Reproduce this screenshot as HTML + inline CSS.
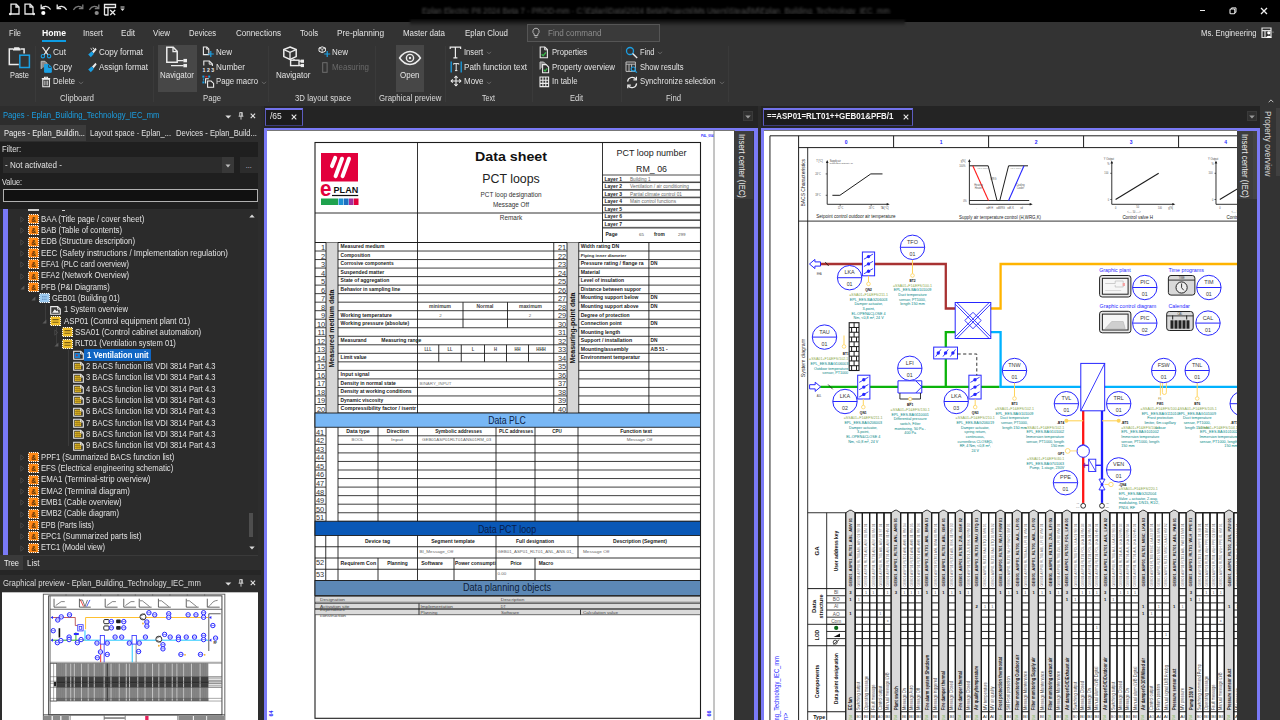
<!DOCTYPE html>
<html><head><meta charset="utf-8"><title>Eplan</title>
<style>
html,body{margin:0;padding:0;background:#2b2b2b;}
body{width:1280px;height:720px;overflow:hidden;position:relative;font-family:"Liberation Sans",sans-serif;}
#app{position:absolute;left:0;top:0;width:1280px;height:720px;overflow:hidden;}
.r{position:absolute;display:block;}
.t{position:absolute;white-space:nowrap;transform-origin:0 50%;}
svg text{font-family:"Liberation Sans",sans-serif;}
</style></head><body><div id="app">
<!-- panes -->
<div class="r" style="left:261px;top:106px;width:1019px;height:614px;background:#2b2b2b;"></div>
<div class="r" style="left:264px;top:106px;width:494px;height:22.5px;background:#242424;"></div>
<div class="r" style="left:760.5px;top:106px;width:499px;height:22.5px;background:#242424;"></div>
<div class="r" style="left:265px;top:108px;width:37.5px;height:18px;background:#1c1c1c;border-top:2px solid #7272ea;border-left:1.3px solid #5c5cc0;border-right:1.3px solid #5c5cc0;border-bottom:1px solid #3c3c78;box-sizing:border-box;"></div>
<span class="t" style="left:270.00px;top:111.11px;font-size:8.3px;line-height:10.38px;color:#e8e8e8;transform:scaleX(1.0228);">/65</span>
<svg class="r" style="left:291px;top:113.8px;" width="6" height="6" viewBox="0 0 6 6"><path d="M0.7 0.7l4.6 4.6M5.3 0.7l-4.6 4.6" stroke="#e8e8e8" stroke-width="1.1"/></svg>
<div class="r" style="left:743px;top:111px;width:10.3px;height:9.6px;background:#303030;border:1px solid #3a3a3a;box-sizing:border-box;"></div>
<svg class="r" style="left:745px;top:115px;" width="6" height="4" viewBox="0 0 6 4"><path d="M0.2 0.4h5.6L3 3.6z" fill="#9a9a9a"/></svg>
<div class="r" style="left:1246.5px;top:111px;width:10.3px;height:9.6px;background:#303030;border:1px solid #3a3a3a;box-sizing:border-box;"></div>
<svg class="r" style="left:1248.5px;top:115px;" width="6" height="4" viewBox="0 0 6 4"><path d="M0.2 0.4h5.6L3 3.6z" fill="#9a9a9a"/></svg>
<div class="r" style="left:762.5px;top:108px;width:150px;height:18px;background:#1c1c1c;border-top:2px solid #7272ea;border-left:1.3px solid #5c5cc0;border-right:1.3px solid #5c5cc0;border-bottom:1px solid #3c3c78;box-sizing:border-box;"></div>
<span class="t" style="left:767.00px;top:111.31px;font-size:8.3px;line-height:10.38px;color:#f4f4f4;font-weight:bold;transform:scaleX(0.9582);">==ASP01=RLT01++GEB01&amp;PFB/1</span>
<svg class="r" style="left:902.6px;top:113.8px;" width="6" height="6" viewBox="0 0 6 6"><path d="M0.7 0.7l4.6 4.6M5.3 0.7l-4.6 4.6" stroke="#e8e8e8" stroke-width="1.1"/></svg>
<div class="r" style="left:264px;top:128px;width:494px;height:592px;background:#7a7af6;"></div>
<div class="r" style="left:267px;top:130.5px;width:466.8px;height:590px;background:#fff;"></div>
<div class="r" style="left:267px;top:130px;width:467.5px;height:1px;background:#777;"></div>
<div class="r" style="left:733.8px;top:130.5px;width:20.7px;height:590px;background:#333;"></div>
<div class="r" style="left:733.8px;top:130.5px;width:19.4px;height:68.3px;background:#3d3d3d;"></div>
<div class="t" style="left:742.3px;top:133.5px;font-size:8.3px;line-height:10px;color:#eaeaea;transform-origin:0 0;transform:rotate(90deg) translate(0,-5px) scaleX(0.9439);">Insert center (IEC)</div>
<div class="r" style="left:760.5px;top:128px;width:499px;height:592px;background:#7a7af6;"></div>
<div class="r" style="left:763.8px;top:130.5px;width:473.2px;height:590px;background:#fff;"></div>
<div class="r" style="left:763.8px;top:130px;width:473.2px;height:1px;background:#777;"></div>
<div class="r" style="left:1237px;top:130.5px;width:20px;height:590px;background:#333;"></div>
<div class="r" style="left:1237px;top:130.5px;width:16px;height:68.3px;background:#3d3d3d;"></div>
<div class="r" style="left:1253px;top:130.5px;width:4px;height:68.3px;background:#434343;"></div>
<div class="t" style="left:1244.7px;top:133.5px;font-size:8.3px;line-height:10px;color:#eaeaea;transform-origin:0 0;transform:rotate(90deg) translate(0,-5px) scaleX(0.9439);">Insert center (IEC)</div>
<div class="r" style="left:1259.5px;top:106px;width:20.5px;height:614px;background:#333;"></div>
<div class="r" style="left:1275.8px;top:108px;width:4.2px;height:68px;background:#404040;"></div>
<div class="t" style="left:1267.6px;top:111px;font-size:8.3px;line-height:10px;color:#d4d4d4;transform-origin:0 0;transform:rotate(90deg) translate(0,-5px) scaleX(0.9861);">Property overview</div>
<!-- sheet -->
<svg class="r" style="left:267px;top:130.5px" width="467.5" height="589.5" viewBox="267 130.5 467.5 589.5" fill="none">
<path d="M714.00 130.50L714.00 720.00" stroke="#8a8a8a" stroke-width="1" />
<text x="701.00" y="136.61" font-size="2.8" fill="#2a2aff" font-weight="bold" textLength="12.50" lengthAdjust="spacingAndGlyphs">P4L_004</text>
<text transform="translate(271.50 716.00) rotate(-90)" x="0" y="1.98" font-size="5.5" fill="#2a2aff" text-anchor="start" font-weight="bold">64</text>
<text transform="translate(709.50 716.00) rotate(-90)" x="0" y="1.98" font-size="5.5" fill="#2a2aff" text-anchor="start" font-weight="bold">66</text>
<rect x="315.00" y="142.00" width="385.50" height="575.80" fill="none" stroke="#1c1c1c" stroke-width="1.1" />
<path d="M417.50 142.00L417.50 242.00" stroke="#1c1c1c" stroke-width="0.9" />
<path d="M602.50 142.00L602.50 242.00" stroke="#1c1c1c" stroke-width="0.9" />
<path d="M315.00 212.50L602.50 212.50" stroke="#1c1c1c" stroke-width="0.9" />
<path d="M315.00 242.00L700.50 242.00" stroke="#1c1c1c" stroke-width="1.1" />
<rect x="321.00" y="152.50" width="37.00" height="28.50" fill="#e2003c" />
<path d="M332 165.6l3.2-8.2" stroke="#fff" stroke-width="4" stroke-linecap="round"/>
<path d="M335.6 175.6l6.4-17.4" stroke="#fff" stroke-width="4" stroke-linecap="round"/>
<path d="M342.6 175.6l6.4-17.4" stroke="#fff" stroke-width="4" stroke-linecap="round"/>
<text x="320.00" y="195.94" font-size="21.5" fill="#e2003c" font-weight="bold" textLength="11.50" lengthAdjust="spacingAndGlyphs">e</text>
<text x="333.60" y="192.61" font-size="9.2" fill="#111" font-weight="bold" textLength="24.60" lengthAdjust="spacingAndGlyphs">PLAN</text>
<path d="M332.00 195.00L358.20 195.00" stroke="#111" stroke-width="1.2" />
<rect x="321.00" y="198.00" width="17.00" height="6.50" fill="#1fa24e" />
<rect x="338.50" y="198.00" width="5.00" height="6.50" fill="#1d90d2" />
<rect x="344.00" y="198.00" width="4.60" height="6.50" fill="#1d6fc0" />
<rect x="349.00" y="198.00" width="4.40" height="6.50" fill="#a2309c" />
<rect x="353.80" y="198.00" width="4.70" height="6.50" fill="#e2003c" />
<text x="511.00" y="160.98" font-size="13" fill="#111" text-anchor="middle" font-weight="bold" textLength="72.00" lengthAdjust="spacingAndGlyphs">Data sheet</text>
<text x="511.00" y="182.05" font-size="13.2" fill="#222" text-anchor="middle" textLength="57.50" lengthAdjust="spacingAndGlyphs">PCT loops</text>
<text x="511.00" y="196.45" font-size="6.8" fill="#333" text-anchor="middle" textLength="61.00" lengthAdjust="spacingAndGlyphs">PCT loop designation</text>
<text x="511.00" y="206.75" font-size="6.8" fill="#333" text-anchor="middle" textLength="36.00" lengthAdjust="spacingAndGlyphs">Message Off</text>
<text x="511.00" y="219.75" font-size="6.8" fill="#333" text-anchor="middle" textLength="22.50" lengthAdjust="spacingAndGlyphs">Remark</text>
<text x="651.50" y="155.86" font-size="9.6" fill="#222" text-anchor="middle" textLength="70.00" lengthAdjust="spacingAndGlyphs">PCT loop number</text>
<text x="651.50" y="171.06" font-size="9.6" fill="#222" text-anchor="middle" textLength="31.00" lengthAdjust="spacingAndGlyphs">RM_ 06</text>
<path d="M602.50 174.50L700.50 174.50" stroke="#1c1c1c" stroke-width="0.8" />
<path d="M602.50 181.40L700.50 181.40" stroke="#1c1c1c" stroke-width="0.6" />
<text x="604.50" y="180.09" font-size="4.7" fill="#222" font-weight="bold" textLength="17.50" lengthAdjust="spacingAndGlyphs">Layer 1</text>
<text x="630.00" y="180.02" font-size="4.5" fill="#666" textLength="20.50" lengthAdjust="spacingAndGlyphs">Building 1</text>
<path d="M602.50 182.07L700.50 182.07" stroke="#1c1c1c" stroke-width="0.8" />
<path d="M602.50 188.97L700.50 188.97" stroke="#1c1c1c" stroke-width="0.6" />
<text x="604.50" y="187.66" font-size="4.7" fill="#222" font-weight="bold" textLength="17.50" lengthAdjust="spacingAndGlyphs">Layer 2</text>
<text x="630.00" y="187.59" font-size="4.5" fill="#666" textLength="59.00" lengthAdjust="spacingAndGlyphs">Ventilation / air conditioning</text>
<path d="M602.50 189.64L700.50 189.64" stroke="#1c1c1c" stroke-width="0.8" />
<path d="M602.50 196.54L700.50 196.54" stroke="#1c1c1c" stroke-width="0.6" />
<text x="604.50" y="195.23" font-size="4.7" fill="#222" font-weight="bold" textLength="17.50" lengthAdjust="spacingAndGlyphs">Layer 3</text>
<text x="630.00" y="195.16" font-size="4.5" fill="#666" textLength="52.00" lengthAdjust="spacingAndGlyphs">Partial climate control 01</text>
<path d="M602.50 197.21L700.50 197.21" stroke="#1c1c1c" stroke-width="0.8" />
<path d="M602.50 204.11L700.50 204.11" stroke="#1c1c1c" stroke-width="0.6" />
<text x="604.50" y="202.80" font-size="4.7" fill="#222" font-weight="bold" textLength="17.50" lengthAdjust="spacingAndGlyphs">Layer 4</text>
<text x="630.00" y="202.73" font-size="4.5" fill="#666" textLength="46.00" lengthAdjust="spacingAndGlyphs">Main control functions</text>
<path d="M602.50 204.78L700.50 204.78" stroke="#1c1c1c" stroke-width="0.8" />
<path d="M602.50 211.68L700.50 211.68" stroke="#1c1c1c" stroke-width="0.6" />
<text x="604.50" y="210.37" font-size="4.7" fill="#222" font-weight="bold" textLength="17.50" lengthAdjust="spacingAndGlyphs">Layer 5</text>
<path d="M602.50 212.35L700.50 212.35" stroke="#1c1c1c" stroke-width="0.8" />
<path d="M602.50 219.25L700.50 219.25" stroke="#1c1c1c" stroke-width="0.6" />
<text x="604.50" y="217.94" font-size="4.7" fill="#222" font-weight="bold" textLength="17.50" lengthAdjust="spacingAndGlyphs">Layer 6</text>
<path d="M602.50 219.92L700.50 219.92" stroke="#1c1c1c" stroke-width="0.8" />
<path d="M602.50 226.82L700.50 226.82" stroke="#1c1c1c" stroke-width="0.6" />
<text x="604.50" y="225.51" font-size="4.7" fill="#222" font-weight="bold" textLength="17.50" lengthAdjust="spacingAndGlyphs">Layer 7</text>
<path d="M602.50 227.50L700.50 227.50" stroke="#1c1c1c" stroke-width="0.8" />
<text x="605.50" y="235.49" font-size="4.7" fill="#222" font-weight="bold" textLength="12.00" lengthAdjust="spacingAndGlyphs">Page</text>
<text x="639.00" y="235.35" font-size="4.3" fill="#555" textLength="5.00" lengthAdjust="spacingAndGlyphs">65</text>
<text x="654.00" y="235.49" font-size="4.7" fill="#222" font-weight="bold" textLength="10.75" lengthAdjust="spacingAndGlyphs">from</text>
<text x="678.00" y="235.35" font-size="4.3" fill="#555" textLength="7.50" lengthAdjust="spacingAndGlyphs">299</text>
<rect x="326.00" y="242.00" width="12.00" height="170.50" fill="#d6d6d6" />
<rect x="567.00" y="242.00" width="11.75" height="170.50" fill="#d6d6d6" />
<path d="M326.00 242.00L326.00 412.50" stroke="#1c1c1c" stroke-width="0.9" />
<path d="M338.00 242.00L338.00 412.50" stroke="#1c1c1c" stroke-width="0.9" />
<path d="M417.50 242.00L417.50 412.50" stroke="#1c1c1c" stroke-width="0.9" />
<path d="M553.75 242.00L553.75 412.50" stroke="#1c1c1c" stroke-width="0.9" />
<path d="M567.00 242.00L567.00 412.50" stroke="#1c1c1c" stroke-width="0.9" />
<path d="M578.75 242.00L578.75 412.50" stroke="#1c1c1c" stroke-width="0.9" />
<path d="M648.90 242.00L648.90 412.50" stroke="#1c1c1c" stroke-width="0.9" />
<path d="M315.00 250.53L326.00 250.53" stroke="#1c1c1c" stroke-width="0.85" />
<path d="M338.00 250.53L567.00 250.53" stroke="#1c1c1c" stroke-width="0.85" />
<path d="M578.75 250.53L700.50 250.53" stroke="#1c1c1c" stroke-width="0.85" />
<text x="325.20" y="249.53" font-size="7.4" fill="#333" text-anchor="end">1</text>
<text x="566.20" y="249.53" font-size="7.4" fill="#333" text-anchor="end">21</text>
<text x="340.60" y="247.83" font-size="4.9" fill="#1a1a1a" font-weight="bold" textLength="43.75" lengthAdjust="spacingAndGlyphs">Measured medium</text>
<text x="580.70" y="247.83" font-size="4.9" fill="#1a1a1a" font-weight="bold" textLength="38.50" lengthAdjust="spacingAndGlyphs">Width rating DN</text>
<path d="M315.00 259.05L326.00 259.05" stroke="#1c1c1c" stroke-width="0.85" />
<path d="M338.00 259.05L567.00 259.05" stroke="#1c1c1c" stroke-width="0.85" />
<path d="M578.75 259.05L700.50 259.05" stroke="#1c1c1c" stroke-width="0.85" />
<text x="325.20" y="258.05" font-size="7.4" fill="#333" text-anchor="end">2</text>
<text x="566.20" y="258.05" font-size="7.4" fill="#333" text-anchor="end">22</text>
<text x="340.60" y="256.35" font-size="4.9" fill="#1a1a1a" font-weight="bold" textLength="29.50" lengthAdjust="spacingAndGlyphs">Composition</text>
<text x="580.70" y="256.26" font-size="4.1" fill="#333" font-weight="bold" textLength="45.50" lengthAdjust="spacingAndGlyphs">Piping inner diameter</text>
<path d="M315.00 267.57L326.00 267.57" stroke="#1c1c1c" stroke-width="0.85" />
<path d="M338.00 267.57L567.00 267.57" stroke="#1c1c1c" stroke-width="0.85" />
<path d="M578.75 267.57L700.50 267.57" stroke="#1c1c1c" stroke-width="0.85" />
<text x="325.20" y="266.58" font-size="7.4" fill="#333" text-anchor="end">3</text>
<text x="566.20" y="266.58" font-size="7.4" fill="#333" text-anchor="end">23</text>
<text x="340.60" y="264.88" font-size="4.9" fill="#1a1a1a" font-weight="bold" textLength="53.00" lengthAdjust="spacingAndGlyphs">Corrosive components</text>
<text x="580.70" y="264.88" font-size="4.9" fill="#1a1a1a" font-weight="bold" textLength="63.00" lengthAdjust="spacingAndGlyphs">Pressure rating / flange ra</text>
<text x="650.60" y="264.84" font-size="4.8" fill="#222" font-weight="bold" textLength="7.00" lengthAdjust="spacingAndGlyphs">DN</text>
<path d="M315.00 276.10L326.00 276.10" stroke="#1c1c1c" stroke-width="0.85" />
<path d="M338.00 276.10L567.00 276.10" stroke="#1c1c1c" stroke-width="0.85" />
<path d="M578.75 276.10L700.50 276.10" stroke="#1c1c1c" stroke-width="0.85" />
<text x="325.20" y="275.10" font-size="7.4" fill="#333" text-anchor="end">4</text>
<text x="566.20" y="275.10" font-size="7.4" fill="#333" text-anchor="end">24</text>
<text x="340.60" y="273.40" font-size="4.9" fill="#1a1a1a" font-weight="bold" textLength="43.50" lengthAdjust="spacingAndGlyphs">Suspended matter</text>
<text x="580.70" y="273.40" font-size="4.9" fill="#1a1a1a" font-weight="bold" textLength="19.25" lengthAdjust="spacingAndGlyphs">Material</text>
<path d="M315.00 284.62L326.00 284.62" stroke="#1c1c1c" stroke-width="0.85" />
<path d="M338.00 284.62L567.00 284.62" stroke="#1c1c1c" stroke-width="0.85" />
<path d="M578.75 284.62L700.50 284.62" stroke="#1c1c1c" stroke-width="0.85" />
<text x="325.20" y="283.63" font-size="7.4" fill="#333" text-anchor="end">5</text>
<text x="566.20" y="283.63" font-size="7.4" fill="#333" text-anchor="end">25</text>
<text x="340.60" y="281.93" font-size="4.9" fill="#1a1a1a" font-weight="bold" textLength="48.75" lengthAdjust="spacingAndGlyphs">State of aggregation</text>
<text x="580.70" y="281.93" font-size="4.9" fill="#1a1a1a" font-weight="bold" textLength="43.25" lengthAdjust="spacingAndGlyphs">Level of insulation</text>
<path d="M315.00 293.15L326.00 293.15" stroke="#1c1c1c" stroke-width="0.85" />
<path d="M338.00 293.15L567.00 293.15" stroke="#1c1c1c" stroke-width="0.85" />
<path d="M578.75 293.15L700.50 293.15" stroke="#1c1c1c" stroke-width="0.85" />
<text x="325.20" y="292.15" font-size="7.4" fill="#333" text-anchor="end">6</text>
<text x="566.20" y="292.15" font-size="7.4" fill="#333" text-anchor="end">26</text>
<text x="340.60" y="290.45" font-size="4.9" fill="#1a1a1a" font-weight="bold" textLength="59.75" lengthAdjust="spacingAndGlyphs">Behavior in sampling line</text>
<text x="580.70" y="290.45" font-size="4.9" fill="#1a1a1a" font-weight="bold" textLength="60.25" lengthAdjust="spacingAndGlyphs">Distance between suppor</text>
<path d="M315.00 301.67L326.00 301.67" stroke="#1c1c1c" stroke-width="0.85" />
<path d="M338.00 301.67L567.00 301.67" stroke="#1c1c1c" stroke-width="0.85" />
<path d="M578.75 301.67L700.50 301.67" stroke="#1c1c1c" stroke-width="0.85" />
<text x="325.20" y="300.68" font-size="7.4" fill="#333" text-anchor="end">7</text>
<text x="566.20" y="300.68" font-size="7.4" fill="#333" text-anchor="end">27</text>
<text x="580.70" y="298.98" font-size="4.9" fill="#1a1a1a" font-weight="bold" textLength="57.75" lengthAdjust="spacingAndGlyphs">Mounting support below</text>
<text x="650.60" y="298.94" font-size="4.8" fill="#222" font-weight="bold" textLength="7.00" lengthAdjust="spacingAndGlyphs">DN</text>
<path d="M315.00 310.20L326.00 310.20" stroke="#1c1c1c" stroke-width="0.85" />
<path d="M338.00 310.20L567.00 310.20" stroke="#1c1c1c" stroke-width="0.85" />
<path d="M578.75 310.20L700.50 310.20" stroke="#1c1c1c" stroke-width="0.85" />
<text x="325.20" y="309.20" font-size="7.4" fill="#333" text-anchor="end">8</text>
<text x="566.20" y="309.20" font-size="7.4" fill="#333" text-anchor="end">28</text>
<text x="580.70" y="307.50" font-size="4.9" fill="#1a1a1a" font-weight="bold" textLength="57.75" lengthAdjust="spacingAndGlyphs">Mounting support above</text>
<text x="650.60" y="307.47" font-size="4.8" fill="#222" font-weight="bold" textLength="7.00" lengthAdjust="spacingAndGlyphs">DN</text>
<path d="M315.00 318.72L326.00 318.72" stroke="#1c1c1c" stroke-width="0.85" />
<path d="M338.00 318.72L567.00 318.72" stroke="#1c1c1c" stroke-width="0.85" />
<path d="M578.75 318.72L700.50 318.72" stroke="#1c1c1c" stroke-width="0.85" />
<text x="325.20" y="317.73" font-size="7.4" fill="#333" text-anchor="end">9</text>
<text x="566.20" y="317.73" font-size="7.4" fill="#333" text-anchor="end">29</text>
<text x="340.60" y="316.03" font-size="4.9" fill="#1a1a1a" font-weight="bold" textLength="51.25" lengthAdjust="spacingAndGlyphs">Working temperature</text>
<text x="580.70" y="316.03" font-size="4.9" fill="#1a1a1a" font-weight="bold" textLength="49.00" lengthAdjust="spacingAndGlyphs">Degree of protection</text>
<path d="M315.00 327.25L326.00 327.25" stroke="#1c1c1c" stroke-width="0.85" />
<path d="M338.00 327.25L567.00 327.25" stroke="#1c1c1c" stroke-width="0.85" />
<path d="M578.75 327.25L700.50 327.25" stroke="#1c1c1c" stroke-width="0.85" />
<text x="325.20" y="326.25" font-size="7.4" fill="#333" text-anchor="end">10</text>
<text x="566.20" y="326.25" font-size="7.4" fill="#333" text-anchor="end">30</text>
<text x="340.60" y="324.55" font-size="4.9" fill="#1a1a1a" font-weight="bold" textLength="68.50" lengthAdjust="spacingAndGlyphs">Working pressure (absolute)</text>
<text x="580.70" y="324.55" font-size="4.9" fill="#1a1a1a" font-weight="bold" textLength="41.00" lengthAdjust="spacingAndGlyphs">Connection point</text>
<text x="650.60" y="324.52" font-size="4.8" fill="#222" font-weight="bold" textLength="7.00" lengthAdjust="spacingAndGlyphs">DN</text>
<path d="M315.00 335.77L326.00 335.77" stroke="#1c1c1c" stroke-width="0.85" />
<path d="M338.00 335.77L567.00 335.77" stroke="#1c1c1c" stroke-width="0.85" />
<path d="M578.75 335.77L700.50 335.77" stroke="#1c1c1c" stroke-width="0.85" />
<text x="325.20" y="334.78" font-size="7.4" fill="#333" text-anchor="end">11</text>
<text x="566.20" y="334.78" font-size="7.4" fill="#333" text-anchor="end">31</text>
<text x="580.70" y="333.08" font-size="4.9" fill="#1a1a1a" font-weight="bold" textLength="39.50" lengthAdjust="spacingAndGlyphs">Mounting length</text>
<path d="M315.00 344.30L326.00 344.30" stroke="#1c1c1c" stroke-width="0.85" />
<path d="M338.00 344.30L567.00 344.30" stroke="#1c1c1c" stroke-width="0.85" />
<path d="M578.75 344.30L700.50 344.30" stroke="#1c1c1c" stroke-width="0.85" />
<text x="325.20" y="343.30" font-size="7.4" fill="#333" text-anchor="end">12</text>
<text x="566.20" y="343.30" font-size="7.4" fill="#333" text-anchor="end">32</text>
<text x="340.60" y="341.60" font-size="4.9" fill="#1a1a1a" font-weight="bold" textLength="26.00" lengthAdjust="spacingAndGlyphs">Measurand</text>
<text x="580.70" y="341.60" font-size="4.9" fill="#1a1a1a" font-weight="bold" textLength="51.50" lengthAdjust="spacingAndGlyphs">Support / installation</text>
<text x="650.60" y="341.57" font-size="4.8" fill="#222" font-weight="bold" textLength="7.00" lengthAdjust="spacingAndGlyphs">DN</text>
<path d="M315.00 352.82L326.00 352.82" stroke="#1c1c1c" stroke-width="0.85" />
<path d="M338.00 352.82L567.00 352.82" stroke="#1c1c1c" stroke-width="0.85" />
<path d="M578.75 352.82L700.50 352.82" stroke="#1c1c1c" stroke-width="0.85" />
<text x="325.20" y="351.83" font-size="7.4" fill="#333" text-anchor="end">13</text>
<text x="566.20" y="351.83" font-size="7.4" fill="#333" text-anchor="end">33</text>
<text x="580.70" y="350.13" font-size="4.9" fill="#1a1a1a" font-weight="bold" textLength="47.75" lengthAdjust="spacingAndGlyphs">Mounting/assembly</text>
<path d="M315.00 361.35L326.00 361.35" stroke="#1c1c1c" stroke-width="0.85" />
<path d="M338.00 361.35L567.00 361.35" stroke="#1c1c1c" stroke-width="0.85" />
<path d="M578.75 361.35L700.50 361.35" stroke="#1c1c1c" stroke-width="0.85" />
<text x="325.20" y="360.35" font-size="7.4" fill="#333" text-anchor="end">14</text>
<text x="566.20" y="360.35" font-size="7.4" fill="#333" text-anchor="end">34</text>
<text x="340.60" y="358.65" font-size="4.9" fill="#1a1a1a" font-weight="bold" textLength="26.00" lengthAdjust="spacingAndGlyphs">Limit value</text>
<text x="580.70" y="358.65" font-size="4.9" fill="#1a1a1a" font-weight="bold" textLength="59.25" lengthAdjust="spacingAndGlyphs">Environment temperatur</text>
<path d="M315.00 369.88L326.00 369.88" stroke="#1c1c1c" stroke-width="0.85" />
<path d="M338.00 369.88L567.00 369.88" stroke="#1c1c1c" stroke-width="0.85" />
<path d="M578.75 369.88L700.50 369.88" stroke="#1c1c1c" stroke-width="0.85" />
<text x="325.20" y="368.88" font-size="7.4" fill="#333" text-anchor="end">15</text>
<text x="566.20" y="368.88" font-size="7.4" fill="#333" text-anchor="end">35</text>
<path d="M315.00 378.40L326.00 378.40" stroke="#1c1c1c" stroke-width="0.85" />
<path d="M338.00 378.40L567.00 378.40" stroke="#1c1c1c" stroke-width="0.85" />
<path d="M578.75 378.40L700.50 378.40" stroke="#1c1c1c" stroke-width="0.85" />
<text x="325.20" y="377.40" font-size="7.4" fill="#333" text-anchor="end">16</text>
<text x="566.20" y="377.40" font-size="7.4" fill="#333" text-anchor="end">36</text>
<text x="340.60" y="375.70" font-size="4.9" fill="#1a1a1a" font-weight="bold" textLength="28.75" lengthAdjust="spacingAndGlyphs">Input signal</text>
<path d="M315.00 386.92L326.00 386.92" stroke="#1c1c1c" stroke-width="0.85" />
<path d="M338.00 386.92L567.00 386.92" stroke="#1c1c1c" stroke-width="0.85" />
<path d="M578.75 386.92L700.50 386.92" stroke="#1c1c1c" stroke-width="0.85" />
<text x="325.20" y="385.93" font-size="7.4" fill="#333" text-anchor="end">17</text>
<text x="566.20" y="385.93" font-size="7.4" fill="#333" text-anchor="end">37</text>
<text x="340.60" y="384.23" font-size="4.9" fill="#1a1a1a" font-weight="bold" textLength="55.25" lengthAdjust="spacingAndGlyphs">Density in normal state</text>
<path d="M315.00 395.45L326.00 395.45" stroke="#1c1c1c" stroke-width="0.85" />
<path d="M338.00 395.45L567.00 395.45" stroke="#1c1c1c" stroke-width="0.85" />
<path d="M578.75 395.45L700.50 395.45" stroke="#1c1c1c" stroke-width="0.85" />
<text x="325.20" y="394.45" font-size="7.4" fill="#333" text-anchor="end">18</text>
<text x="566.20" y="394.45" font-size="7.4" fill="#333" text-anchor="end">38</text>
<text x="340.60" y="392.75" font-size="4.9" fill="#1a1a1a" font-weight="bold" textLength="71.00" lengthAdjust="spacingAndGlyphs">Density at working conditions</text>
<path d="M315.00 403.98L326.00 403.98" stroke="#1c1c1c" stroke-width="0.85" />
<path d="M338.00 403.98L567.00 403.98" stroke="#1c1c1c" stroke-width="0.85" />
<path d="M578.75 403.98L700.50 403.98" stroke="#1c1c1c" stroke-width="0.85" />
<text x="325.20" y="402.98" font-size="7.4" fill="#333" text-anchor="end">19</text>
<text x="566.20" y="402.98" font-size="7.4" fill="#333" text-anchor="end">39</text>
<text x="340.60" y="401.28" font-size="4.9" fill="#1a1a1a" font-weight="bold" textLength="42.50" lengthAdjust="spacingAndGlyphs">Dynamic viscosity</text>
<path d="M315.00 412.50L326.00 412.50" stroke="#1c1c1c" stroke-width="0.85" />
<path d="M338.00 412.50L567.00 412.50" stroke="#1c1c1c" stroke-width="0.85" />
<path d="M578.75 412.50L700.50 412.50" stroke="#1c1c1c" stroke-width="0.85" />
<text x="325.20" y="411.50" font-size="7.4" fill="#333" text-anchor="end">20</text>
<text x="566.20" y="411.50" font-size="7.4" fill="#333" text-anchor="end">40</text>
<text x="340.60" y="409.80" font-size="4.9" fill="#1a1a1a" font-weight="bold" textLength="75.50" lengthAdjust="spacingAndGlyphs">Compressibility factor / isentr</text>
<text x="650.60" y="350.09" font-size="4.8" fill="#222" font-weight="bold" textLength="17.00" lengthAdjust="spacingAndGlyphs">AB 51 -</text>
<text x="381.30" y="341.60" font-size="4.9" fill="#1a1a1a" font-weight="bold" textLength="40.00" lengthAdjust="spacingAndGlyphs">Measuring range</text>
<text transform="translate(332.00 328.00) rotate(-90)" x="0" y="2.38" font-size="6.6" fill="#111" text-anchor="middle" font-weight="bold" textLength="78.00" lengthAdjust="spacingAndGlyphs">Measured medium data</text>
<text transform="translate(572.90 327.50) rotate(-90)" x="0" y="2.38" font-size="6.6" fill="#111" text-anchor="middle" font-weight="bold" textLength="71.00" lengthAdjust="spacingAndGlyphs">Measuring-point data</text>
<path d="M463.00 301.68L463.00 327.25" stroke="#1c1c1c" stroke-width="0.9" />
<path d="M507.50 301.68L507.50 327.25" stroke="#1c1c1c" stroke-width="0.9" />
<text x="440.00" y="307.63" font-size="4.7" fill="#444" text-anchor="middle" font-weight="bold" textLength="22.00" lengthAdjust="spacingAndGlyphs">minimum</text>
<text x="485.00" y="307.63" font-size="4.7" fill="#444" text-anchor="middle" font-weight="bold" textLength="17.00" lengthAdjust="spacingAndGlyphs">Normal</text>
<text x="530.50" y="307.63" font-size="4.7" fill="#444" text-anchor="middle" font-weight="bold" textLength="23.00" lengthAdjust="spacingAndGlyphs">maximum</text>
<text x="440.50" y="316.05" font-size="4.4" fill="#666" text-anchor="middle">2</text>
<text x="530.00" y="316.05" font-size="4.4" fill="#666" text-anchor="middle">2</text>
<path d="M438.75 344.30L438.75 361.35" stroke="#1c1c1c" stroke-width="0.9" />
<path d="M461.25 344.30L461.25 361.35" stroke="#1c1c1c" stroke-width="0.9" />
<path d="M484.50 344.30L484.50 361.35" stroke="#1c1c1c" stroke-width="0.9" />
<path d="M506.50 344.30L506.50 361.35" stroke="#1c1c1c" stroke-width="0.9" />
<path d="M528.50 344.30L528.50 361.35" stroke="#1c1c1c" stroke-width="0.9" />
<text x="428.00" y="350.18" font-size="4.5" fill="#444" text-anchor="middle" font-weight="bold" textLength="7.00" lengthAdjust="spacingAndGlyphs">LLL</text>
<text x="450.00" y="350.18" font-size="4.5" fill="#444" text-anchor="middle" font-weight="bold" textLength="5.00" lengthAdjust="spacingAndGlyphs">LL</text>
<text x="473.00" y="350.18" font-size="4.5" fill="#444" text-anchor="middle" font-weight="bold" textLength="2.50" lengthAdjust="spacingAndGlyphs">L</text>
<text x="495.50" y="350.18" font-size="4.5" fill="#444" text-anchor="middle" font-weight="bold" textLength="3.00" lengthAdjust="spacingAndGlyphs">H</text>
<text x="517.50" y="350.18" font-size="4.5" fill="#444" text-anchor="middle" font-weight="bold" textLength="6.00" lengthAdjust="spacingAndGlyphs">HH</text>
<text x="541.00" y="350.18" font-size="4.5" fill="#444" text-anchor="middle" font-weight="bold" textLength="9.50" lengthAdjust="spacingAndGlyphs">HHH</text>
<text x="419.50" y="384.25" font-size="4.4" fill="#777" textLength="32.00" lengthAdjust="spacingAndGlyphs">BINARY_INPUT</text>
<rect x="315.00" y="412.50" width="385.50" height="14.25" fill="#78b7f5" stroke="#1c1c1c" stroke-width="0.9" />
<text x="507.00" y="423.67" font-size="10.2" fill="#0d2448" text-anchor="middle" textLength="37.75" lengthAdjust="spacingAndGlyphs">Data PLC</text>
<path d="M326.00 426.75L326.00 520.80" stroke="#1c1c1c" stroke-width="0.9" />
<path d="M338.00 426.75L338.00 520.80" stroke="#1c1c1c" stroke-width="0.9" />
<path d="M378.00 426.75L378.00 520.80" stroke="#1c1c1c" stroke-width="0.9" />
<path d="M417.50 426.75L417.50 520.80" stroke="#1c1c1c" stroke-width="0.9" />
<path d="M496.00 426.75L496.00 520.80" stroke="#1c1c1c" stroke-width="0.9" />
<path d="M535.00 426.75L535.00 520.80" stroke="#1c1c1c" stroke-width="0.9" />
<path d="M578.00 426.75L578.00 520.80" stroke="#1c1c1c" stroke-width="0.9" />
<path d="M315.00 435.30L326.00 435.30" stroke="#1c1c1c" stroke-width="0.85" />
<path d="M338.00 435.30L700.50 435.30" stroke="#1c1c1c" stroke-width="0.85" />
<path d="M315.00 443.85L326.00 443.85" stroke="#1c1c1c" stroke-width="0.85" />
<path d="M338.00 443.85L700.50 443.85" stroke="#1c1c1c" stroke-width="0.85" />
<path d="M315.00 452.40L326.00 452.40" stroke="#1c1c1c" stroke-width="0.85" />
<path d="M338.00 452.40L700.50 452.40" stroke="#1c1c1c" stroke-width="0.85" />
<path d="M315.00 460.95L326.00 460.95" stroke="#1c1c1c" stroke-width="0.85" />
<path d="M338.00 460.95L700.50 460.95" stroke="#1c1c1c" stroke-width="0.85" />
<path d="M315.00 469.50L326.00 469.50" stroke="#1c1c1c" stroke-width="0.85" />
<path d="M338.00 469.50L700.50 469.50" stroke="#1c1c1c" stroke-width="0.85" />
<path d="M315.00 478.05L326.00 478.05" stroke="#1c1c1c" stroke-width="0.85" />
<path d="M338.00 478.05L700.50 478.05" stroke="#1c1c1c" stroke-width="0.85" />
<path d="M315.00 486.60L326.00 486.60" stroke="#1c1c1c" stroke-width="0.85" />
<path d="M338.00 486.60L700.50 486.60" stroke="#1c1c1c" stroke-width="0.85" />
<path d="M315.00 495.15L326.00 495.15" stroke="#1c1c1c" stroke-width="0.85" />
<path d="M338.00 495.15L700.50 495.15" stroke="#1c1c1c" stroke-width="0.85" />
<path d="M315.00 503.70L326.00 503.70" stroke="#1c1c1c" stroke-width="0.85" />
<path d="M338.00 503.70L700.50 503.70" stroke="#1c1c1c" stroke-width="0.85" />
<path d="M315.00 512.25L326.00 512.25" stroke="#1c1c1c" stroke-width="0.85" />
<path d="M338.00 512.25L700.50 512.25" stroke="#1c1c1c" stroke-width="0.85" />
<path d="M315.00 520.80L326.00 520.80" stroke="#1c1c1c" stroke-width="0.85" />
<path d="M338.00 520.80L700.50 520.80" stroke="#1c1c1c" stroke-width="0.85" />
<text x="316.00" y="434.19" font-size="7.4" fill="#333">41</text>
<text x="316.00" y="442.74" font-size="7.4" fill="#333">42</text>
<text x="316.00" y="451.29" font-size="7.4" fill="#333">43</text>
<text x="316.00" y="459.84" font-size="7.4" fill="#333">44</text>
<text x="316.00" y="468.39" font-size="7.4" fill="#333">45</text>
<text x="316.00" y="476.94" font-size="7.4" fill="#333">46</text>
<text x="316.00" y="485.49" font-size="7.4" fill="#333">47</text>
<text x="316.00" y="494.04" font-size="7.4" fill="#333">48</text>
<text x="316.00" y="502.59" font-size="7.4" fill="#333">49</text>
<text x="316.00" y="511.14" font-size="7.4" fill="#333">50</text>
<text x="316.00" y="519.69" font-size="7.4" fill="#333">51</text>
<text x="358.00" y="432.59" font-size="4.9" fill="#1a1a1a" text-anchor="middle" font-weight="bold" textLength="23.50" lengthAdjust="spacingAndGlyphs">Data type</text>
<text x="397.75" y="432.59" font-size="4.9" fill="#1a1a1a" text-anchor="middle" font-weight="bold" textLength="22.00" lengthAdjust="spacingAndGlyphs">Direction</text>
<text x="458.50" y="432.59" font-size="4.9" fill="#1a1a1a" text-anchor="middle" font-weight="bold" textLength="46.75" lengthAdjust="spacingAndGlyphs">Symbolic addresses</text>
<text x="516.00" y="432.59" font-size="4.9" fill="#1a1a1a" text-anchor="middle" font-weight="bold" textLength="34.00" lengthAdjust="spacingAndGlyphs">PLC addresses</text>
<text x="557.00" y="432.59" font-size="4.9" fill="#1a1a1a" text-anchor="middle" font-weight="bold" textLength="9.50" lengthAdjust="spacingAndGlyphs">CPU</text>
<text x="636.00" y="432.59" font-size="4.9" fill="#1a1a1a" text-anchor="middle" font-weight="bold" textLength="31.75" lengthAdjust="spacingAndGlyphs">Function text</text>
<text x="357.50" y="440.86" font-size="4.4" fill="#666" text-anchor="middle" textLength="12.00" lengthAdjust="spacingAndGlyphs">BOOL</text>
<text x="397.00" y="440.86" font-size="4.4" fill="#666" text-anchor="middle" textLength="12.00" lengthAdjust="spacingAndGlyphs">Input</text>
<text x="639.50" y="440.86" font-size="4.4" fill="#666" text-anchor="middle" textLength="25.75" lengthAdjust="spacingAndGlyphs">Message Off</text>
<text x="422.00" y="440.86" font-size="4.4" fill="#666" textLength="69.25" lengthAdjust="spacingAndGlyphs">GEB01ASP01RLT01ANS01RM_03</text>
<rect x="315.00" y="520.75" width="385.50" height="14.25" fill="#0a58b6" stroke="#1c1c1c" stroke-width="0.9" />
<text x="507.00" y="532.07" font-size="10.2" fill="#081c4a" text-anchor="middle" textLength="58.25" lengthAdjust="spacingAndGlyphs">Data PCT loop</text>
<path d="M315.00 546.25L700.50 546.25" stroke="#1c1c1c" stroke-width="0.9" />
<path d="M315.00 557.50L700.50 557.50" stroke="#1c1c1c" stroke-width="0.9" />
<path d="M315.00 568.75L700.50 568.75" stroke="#1c1c1c" stroke-width="0.9" />
<path d="M315.00 580.00L700.50 580.00" stroke="#1c1c1c" stroke-width="0.9" />
<path d="M325.75 535.00L325.75 557.50" stroke="#1c1c1c" stroke-width="0.9" />
<path d="M338.00 535.00L338.00 557.50" stroke="#1c1c1c" stroke-width="0.9" />
<path d="M417.50 535.00L417.50 557.50" stroke="#1c1c1c" stroke-width="0.9" />
<path d="M496.00 535.00L496.00 557.50" stroke="#1c1c1c" stroke-width="0.9" />
<path d="M578.00 535.00L578.00 557.50" stroke="#1c1c1c" stroke-width="0.9" />
<path d="M325.75 557.50L325.75 580.00" stroke="#1c1c1c" stroke-width="0.9" />
<path d="M338.00 557.50L338.00 580.00" stroke="#1c1c1c" stroke-width="0.9" />
<path d="M378.00 557.50L378.00 580.00" stroke="#1c1c1c" stroke-width="0.9" />
<path d="M417.50 557.50L417.50 580.00" stroke="#1c1c1c" stroke-width="0.9" />
<path d="M454.00 557.50L454.00 580.00" stroke="#1c1c1c" stroke-width="0.9" />
<path d="M496.00 557.50L496.00 580.00" stroke="#1c1c1c" stroke-width="0.9" />
<path d="M535.00 557.50L535.00 580.00" stroke="#1c1c1c" stroke-width="0.9" />
<text x="377.50" y="542.06" font-size="4.9" fill="#1a1a1a" text-anchor="middle" font-weight="bold" textLength="25.00" lengthAdjust="spacingAndGlyphs">Device tag</text>
<text x="453.00" y="542.06" font-size="4.9" fill="#1a1a1a" text-anchor="middle" font-weight="bold" textLength="43.75" lengthAdjust="spacingAndGlyphs">Segment template</text>
<text x="535.00" y="542.06" font-size="4.9" fill="#1a1a1a" text-anchor="middle" font-weight="bold" textLength="38.00" lengthAdjust="spacingAndGlyphs">Full designation</text>
<text x="640.00" y="542.06" font-size="4.9" fill="#1a1a1a" text-anchor="middle" font-weight="bold" textLength="54.00" lengthAdjust="spacingAndGlyphs">Description (Segment)</text>
<text x="419.50" y="552.88" font-size="4.4" fill="#666" textLength="33.75" lengthAdjust="spacingAndGlyphs">BI_Message_Off</text>
<text x="497.50" y="552.88" font-size="4.4" fill="#666" textLength="76.25" lengthAdjust="spacingAndGlyphs">GEB01_ASP01_RLT01_ANL_ANS 01_</text>
<text x="583.00" y="552.88" font-size="4.4" fill="#666" textLength="26.25" lengthAdjust="spacingAndGlyphs">Message Off</text>
<text x="316.00" y="564.96" font-size="7.4" fill="#333">52</text>
<text x="316.00" y="576.16" font-size="7.4" fill="#333">53</text>
<text x="340.60" y="564.76" font-size="4.9" fill="#1a1a1a" font-weight="bold" textLength="35.50" lengthAdjust="spacingAndGlyphs">Requirem  Con</text>
<text x="397.50" y="564.76" font-size="4.9" fill="#1a1a1a" text-anchor="middle" font-weight="bold" textLength="20.50" lengthAdjust="spacingAndGlyphs">Planning</text>
<text x="432.00" y="564.76" font-size="4.9" fill="#1a1a1a" text-anchor="middle" font-weight="bold" textLength="21.75" lengthAdjust="spacingAndGlyphs">Software</text>
<text x="455.00" y="564.76" font-size="4.9" fill="#1a1a1a" font-weight="bold" textLength="40.75" lengthAdjust="spacingAndGlyphs">Power consumpti</text>
<text x="516.00" y="564.76" font-size="4.9" fill="#1a1a1a" text-anchor="middle" font-weight="bold" textLength="11.25" lengthAdjust="spacingAndGlyphs">Price</text>
<text x="538.75" y="564.76" font-size="4.9" fill="#1a1a1a" font-weight="bold" textLength="14.50" lengthAdjust="spacingAndGlyphs">Macro</text>
<text x="497.50" y="574.51" font-size="4.2" fill="#666" textLength="8.75" lengthAdjust="spacingAndGlyphs">0.00</text>
<rect x="315.00" y="580.00" width="385.50" height="15.00" fill="#5c88b6" stroke="#1c1c1c" stroke-width="0.9" />
<text x="507.00" y="590.47" font-size="10.2" fill="#0c1c38" text-anchor="middle" textLength="88.25" lengthAdjust="spacingAndGlyphs">Data planning objects</text>
<rect x="315.50" y="596.00" width="384.50" height="5.75" fill="#dadada" />
<path d="M315.00 596.00L700.50 596.00" stroke="#333" stroke-width="0.7" />
<path d="M315.00 601.75L700.50 601.75" stroke="#333" stroke-width="0.7" />
<rect x="315.50" y="603.00" width="384.50" height="5.00" fill="#dadada" />
<path d="M315.00 603.00L700.50 603.00" stroke="#333" stroke-width="0.7" />
<path d="M315.00 608.00L700.50 608.00" stroke="#333" stroke-width="0.7" />
<rect x="315.50" y="609.00" width="384.50" height="5.20" fill="#dadada" />
<path d="M315.00 609.00L700.50 609.00" stroke="#333" stroke-width="0.7" />
<path d="M315.00 614.20L700.50 614.20" stroke="#333" stroke-width="0.7" />
<path d="M419.00 603.00L419.00 614.20" stroke="#222" stroke-width="0.9" />
<path d="M580.50 609.00L580.50 614.20" stroke="#222" stroke-width="0.9" />
<text x="320.00" y="600.48" font-size="4.4" fill="#444" textLength="25.00" lengthAdjust="spacingAndGlyphs">Designation</text>
<text x="500.75" y="600.48" font-size="4.4" fill="#444" textLength="23.50" lengthAdjust="spacingAndGlyphs">Description</text>
<text x="320.00" y="607.08" font-size="4.4" fill="#444" textLength="29.50" lengthAdjust="spacingAndGlyphs">Activation site</text>
<text x="420.50" y="607.08" font-size="4.4" fill="#444" textLength="32.50" lengthAdjust="spacingAndGlyphs">Implementation</text>
<text x="500.75" y="607.08" font-size="4.4" fill="#444" textLength="5.00" lengthAdjust="spacingAndGlyphs">DT</text>
<text x="320.00" y="610.11" font-size="4.2" fill="#444" textLength="25.00" lengthAdjust="spacingAndGlyphs">Expenditure</text>
<text x="320.00" y="616.51" font-size="4.2" fill="#444" textLength="26.00" lengthAdjust="spacingAndGlyphs">construction</text>
<text x="420.50" y="613.18" font-size="4.4" fill="#444" textLength="17.00" lengthAdjust="spacingAndGlyphs">Planning</text>
<text x="501.00" y="613.18" font-size="4.4" fill="#444" textLength="18.00" lengthAdjust="spacingAndGlyphs">Software</text>
<text x="583.00" y="613.18" font-size="4.4" fill="#444" textLength="35.00" lengthAdjust="spacingAndGlyphs">Calculation value</text>
</svg>
<!-- schem -->
<svg class="r" style="left:763.8px;top:130.5px" width="473.2" height="589.5" viewBox="763.8 130.5 473.2 589.5" fill="none">
<path d="M769.75 135.30L769.75 720.00" stroke="#1c1c1c" stroke-width="1" />
<path d="M769.75 135.30L1237.00 135.30" stroke="#1c1c1c" stroke-width="1" />
<path d="M798.40 135.30L798.40 720.00" stroke="#1c1c1c" stroke-width="1" />
<path d="M798.40 147.10L1237.00 147.10" stroke="#1c1c1c" stroke-width="1" />
<path d="M807.50 147.10L807.50 720.00" stroke="#1c1c1c" stroke-width="0.9" />
<path d="M798.40 220.60L1237.00 220.60" stroke="#1c1c1c" stroke-width="0.9" />
<path d="M893.40 135.30L893.40 147.10" stroke="#1c1c1c" stroke-width="1" />
<path d="M988.40 135.30L988.40 147.10" stroke="#1c1c1c" stroke-width="1" />
<path d="M1083.40 135.30L1083.40 147.10" stroke="#1c1c1c" stroke-width="1" />
<path d="M1178.40 135.30L1178.40 147.10" stroke="#1c1c1c" stroke-width="1" />
<text x="846.00" y="143.10" font-size="5" fill="#2626ff" text-anchor="middle" font-weight="bold">0</text>
<text x="941.00" y="143.10" font-size="5" fill="#2626ff" text-anchor="middle" font-weight="bold">1</text>
<text x="1036.00" y="143.10" font-size="5" fill="#2626ff" text-anchor="middle" font-weight="bold">2</text>
<text x="1131.00" y="143.10" font-size="5" fill="#2626ff" text-anchor="middle" font-weight="bold">3</text>
<text x="1225.50" y="143.10" font-size="5" fill="#2626ff" text-anchor="middle" font-weight="bold">4</text>
<text transform="translate(803.00 182.20) rotate(-90)" x="0" y="2.16" font-size="6" fill="#222" text-anchor="middle" textLength="47.60" lengthAdjust="spacingAndGlyphs">BACS Characteristics</text>
<text transform="translate(803.00 357.50) rotate(-90)" x="0" y="2.16" font-size="6" fill="#222" text-anchor="middle" textLength="38.60" lengthAdjust="spacingAndGlyphs">System diagram</text>
<text transform="translate(776.00 655.60) rotate(-90)" x="0" y="2.59" font-size="7.2" fill="#2626ff" text-anchor="end" textLength="96.44" lengthAdjust="spacingAndGlyphs">Eplan_Building_Technology_IEC_mm</text>
<text transform="translate(785.50 712.00) rotate(-90)" x="0" y="2.59" font-size="7.2" fill="#2626ff" text-anchor="end">&lt;Project description&gt;</text>
<path d="M827.00 161.00L827.00 203.80" stroke="#1c1c1c" stroke-width="0.9" /><path d="M827.00 203.80L888.00 203.80" stroke="#1c1c1c" stroke-width="0.9" /><path d="M827.00 159.50l-1.3 3h2.6z" fill="#1c1c1c"/><path d="M889.50 203.80l-3-1.3v2.6z" fill="#1c1c1c"/>
<path d="M832.2 194.8H839.7L870.6 173.4H882.3" stroke="#1c1c1c" stroke-width="1"/>
<path d="M825.50 173.40L827.00 173.40" stroke="#1c1c1c" stroke-width="0.7" />
<path d="M825.50 194.80L827.00 194.80" stroke="#1c1c1c" stroke-width="0.7" />
<path d="M840.00 203.80L840.00 205.30" stroke="#1c1c1c" stroke-width="0.7" />
<path d="M871.00 203.80L871.00 205.30" stroke="#1c1c1c" stroke-width="0.7" />
<text x="816.00" y="161.54" font-size="2.9" fill="#444" textLength="6.43" lengthAdjust="spacingAndGlyphs">T [°C]</text>
<text x="829.50" y="161.34" font-size="2.9" fill="#444" textLength="11.22" lengthAdjust="spacingAndGlyphs">Supply air</text>
<text x="829.50" y="163.46" font-size="2.4" fill="#444" textLength="23.23" lengthAdjust="spacingAndGlyphs">temperature setpoint [°C]</text>
<text x="815.00" y="174.44" font-size="2.9" fill="#555" textLength="5.64" lengthAdjust="spacingAndGlyphs">24°C</text>
<text x="815.00" y="195.84" font-size="2.9" fill="#555" textLength="5.64" lengthAdjust="spacingAndGlyphs">18°C</text>
<text x="837.50" y="208.54" font-size="2.9" fill="#555" textLength="5.64" lengthAdjust="spacingAndGlyphs">12°C</text>
<text x="868.50" y="208.54" font-size="2.9" fill="#555" textLength="5.64" lengthAdjust="spacingAndGlyphs">26°C</text>
<text x="880.50" y="208.54" font-size="2.9" fill="#444" textLength="7.83" lengthAdjust="spacingAndGlyphs">TA [°C]</text>
<text x="816.00" y="217.66" font-size="4.6" fill="#222" textLength="79.40" lengthAdjust="spacingAndGlyphs">Setpoint control outdoor air temperature</text>
<path d="M969.20 160.00L969.20 203.80" stroke="#1c1c1c" stroke-width="0.9" /><path d="M969.20 203.80L1031.00 203.80" stroke="#1c1c1c" stroke-width="0.9" /><path d="M969.20 158.50l-1.3 3h2.6z" fill="#1c1c1c"/><path d="M1032.50 203.80l-3-1.3v2.6z" fill="#1c1c1c"/>
<path d="M969.20 200.00L1029.00 200.00" stroke="#1c1c1c" stroke-width="0.9" />
<path d="M969.2 165.3H988L996.8 200H999.6L1008.4 165.3H1027.8" stroke="#1c1c1c" stroke-width="1"/>
<path d="M972.60 165.30L988.30 200.00" stroke="#ff1a1a" stroke-width="1.1" />
<path d="M1008.40 200.00L1023.80 165.30" stroke="#2626ff" stroke-width="1.1" />
<text x="960.50" y="161.01" font-size="2.8" fill="#444" textLength="4.74" lengthAdjust="spacingAndGlyphs">y[%]</text>
<text x="959.00" y="166.31" font-size="2.8" fill="#555" textLength="6.23" lengthAdjust="spacingAndGlyphs">100%</text>
<text x="963.00" y="201.01" font-size="2.8" fill="#555" textLength="3.52" lengthAdjust="spacingAndGlyphs">0%</text>
<text x="974.00" y="185.04" font-size="2.9" fill="#555" textLength="8.69" lengthAdjust="spacingAndGlyphs">Heating</text>
<text x="974.50" y="188.04" font-size="2.9" fill="#555" textLength="7.57" lengthAdjust="spacingAndGlyphs">Heater</text>
<text x="977.00" y="168.83" font-size="2.3" fill="#777" textLength="10.79" lengthAdjust="spacingAndGlyphs">HR 0..100%</text>
<text x="1010.00" y="168.83" font-size="2.3" fill="#777" textLength="10.79" lengthAdjust="spacingAndGlyphs">HR 0..100%</text>
<text x="990.00" y="179.54" font-size="2.9" fill="#555" textLength="6.17" lengthAdjust="spacingAndGlyphs">WRG</text>
<text x="1016.00" y="185.04" font-size="2.9" fill="#555" textLength="8.55" lengthAdjust="spacingAndGlyphs">Cooling</text>
<text x="1016.50" y="188.04" font-size="2.9" fill="#555" textLength="7.43" lengthAdjust="spacingAndGlyphs">Cooler</text>
<text x="976.00" y="208.04" font-size="2.9" fill="#555" textLength="0.84" lengthAdjust="spacingAndGlyphs">-</text>
<text x="986.00" y="208.54" font-size="2.9" fill="#555" textLength="7.01" lengthAdjust="spacingAndGlyphs">xdH H</text>
<text x="996.00" y="208.54" font-size="2.9" fill="#555" textLength="8.83" lengthAdjust="spacingAndGlyphs">xdWRG</text>
<text x="1007.00" y="208.54" font-size="2.9" fill="#555" textLength="6.73" lengthAdjust="spacingAndGlyphs">xdK K</text>
<text x="1020.00" y="208.04" font-size="2.9" fill="#555" textLength="2.66" lengthAdjust="spacingAndGlyphs">xd</text>
<text x="958.90" y="218.16" font-size="4.6" fill="#222" textLength="82.00" lengthAdjust="spacingAndGlyphs">Supply air temperature control (H,WRG,K)</text>
<path d="M1111.60 161.50L1111.60 203.80" stroke="#1c1c1c" stroke-width="0.9" /><path d="M1111.60 203.80L1173.60 203.80" stroke="#1c1c1c" stroke-width="0.9" /><path d="M1111.60 160.00l-1.3 3h2.6z" fill="#1c1c1c"/><path d="M1175.10 203.80l-3-1.3v2.6z" fill="#1c1c1c"/>
<path d="M1115.40 199.00L1158.50 172.80" stroke="#1c1c1c" stroke-width="1.1" />
<text x="1103.60" y="159.08" font-size="3" fill="#444" textLength="10.25" lengthAdjust="spacingAndGlyphs">Y Output</text>
<text x="1107.10" y="164.54" font-size="2.9" fill="#444" textLength="2.24" lengthAdjust="spacingAndGlyphs">%</text>
<text x="1104.10" y="173.81" font-size="2.8" fill="#555" textLength="4.07" lengthAdjust="spacingAndGlyphs">100</text>
<text x="1107.60" y="200.01" font-size="2.8" fill="#555" textLength="1.36" lengthAdjust="spacingAndGlyphs">0</text>
<path d="M1110.10 172.80L1111.60 172.80" stroke="#1c1c1c" stroke-width="0.7" />
<path d="M1110.10 199.00L1111.60 199.00" stroke="#1c1c1c" stroke-width="0.7" />
<text x="1114.90" y="208.51" font-size="2.8" fill="#555" textLength="1.36" lengthAdjust="spacingAndGlyphs">0</text>
<text x="1136.10" y="207.51" font-size="2.8" fill="#555" textLength="2.71" lengthAdjust="spacingAndGlyphs">50</text>
<text x="1157.60" y="208.51" font-size="2.8" fill="#555" textLength="4.07" lengthAdjust="spacingAndGlyphs">100</text>
<text x="1168.10" y="208.01" font-size="2.8" fill="#444" textLength="4.74" lengthAdjust="spacingAndGlyphs">y[%]</text>
<text x="1127.10" y="212.31" font-size="2.8" fill="#555" textLength="13.40" lengthAdjust="spacingAndGlyphs">&lt;---- 50 ----&gt;</text>
<text x="1137.50" y="218.66" font-size="4.6" fill="#222" text-anchor="middle" textLength="30.60" lengthAdjust="spacingAndGlyphs">Control valve H</text>
<path d="M1215.80 161.50L1215.80 203.80" stroke="#1c1c1c" stroke-width="0.9" /><path d="M1215.80 203.80L1277.80 203.80" stroke="#1c1c1c" stroke-width="0.9" /><path d="M1215.80 160.00l-1.3 3h2.6z" fill="#1c1c1c"/><path d="M1279.30 203.80l-3-1.3v2.6z" fill="#1c1c1c"/>
<path d="M1219.60 199.00L1262.70 172.80" stroke="#1c1c1c" stroke-width="1.1" />
<text x="1207.80" y="159.08" font-size="3" fill="#444" textLength="10.25" lengthAdjust="spacingAndGlyphs">Y Output</text>
<text x="1211.30" y="164.54" font-size="2.9" fill="#444" textLength="2.24" lengthAdjust="spacingAndGlyphs">%</text>
<text x="1208.30" y="173.81" font-size="2.8" fill="#555" textLength="4.07" lengthAdjust="spacingAndGlyphs">100</text>
<text x="1211.80" y="200.01" font-size="2.8" fill="#555" textLength="1.36" lengthAdjust="spacingAndGlyphs">0</text>
<path d="M1214.30 172.80L1215.80 172.80" stroke="#1c1c1c" stroke-width="0.7" />
<path d="M1214.30 199.00L1215.80 199.00" stroke="#1c1c1c" stroke-width="0.7" />
<text x="1219.10" y="208.51" font-size="2.8" fill="#555" textLength="1.36" lengthAdjust="spacingAndGlyphs">0</text>
<text x="1240.30" y="207.51" font-size="2.8" fill="#555" textLength="2.71" lengthAdjust="spacingAndGlyphs">50</text>
<text x="1261.80" y="208.51" font-size="2.8" fill="#555" textLength="4.07" lengthAdjust="spacingAndGlyphs">100</text>
<text x="1272.30" y="208.01" font-size="2.8" fill="#444" textLength="4.74" lengthAdjust="spacingAndGlyphs">y[%]</text>
<text x="1231.30" y="212.31" font-size="2.8" fill="#555" textLength="13.40" lengthAdjust="spacingAndGlyphs">&lt;---- 50 ----&gt;</text>
<text x="1241.70" y="218.66" font-size="4.6" fill="#222" text-anchor="middle" textLength="30.60" lengthAdjust="spacingAndGlyphs">Control valve K</text>
<path d="M820 263.5H945.6V308H955" stroke="#a83232" stroke-width="2.3" stroke-linejoin="miter"/>
<path d="M990.6 308H1000.4V263.5H1237" stroke="#ffb400" stroke-width="2.3" stroke-linejoin="miter"/>
<path d="M820 386.3H999.4" stroke="#0bb30b" stroke-width="2.3" stroke-linejoin="miter"/>
<path d="M955 331.6H945.6V386.3" stroke="#0bb30b" stroke-width="2.3" stroke-linejoin="miter"/>
<path d="M990.6 331.6H1000.4V386.3" stroke="#00b2ff" stroke-width="2.3" stroke-linejoin="miter"/>
<path d="M999.4 386.3H1237" stroke="#00b2ff" stroke-width="2.3" stroke-linejoin="miter"/>
<path d="M1083 410.3V502.4" stroke="#ff1414" stroke-width="2.3" stroke-linejoin="miter"/>
<path d="M1101.8 410.3V502.4" stroke="#2020ff" stroke-width="2.3" stroke-linejoin="miter"/>
<path d="M809.30 263.50l5.4-4.6v2.5h5.6v4.2h-5.6v2.5z" fill="#fff" stroke="#2626ff" stroke-width="1"/>
<path d="M820.40 386.30l-5.4-4.6v2.5h-5.6v4.2h5.6v2.5z" fill="#fff" stroke="#2626ff" stroke-width="1"/>
<path d="M825.00 261.50L828.50 265.50" stroke="#1c1c1c" stroke-width="0.8" />
<path d="M828.00 384.00L832.50 388.80" stroke="#1c1c1c" stroke-width="0.8" />
<text x="816.50" y="274.01" font-size="2.8" fill="#444" textLength="5.01" lengthAdjust="spacingAndGlyphs">EHA</text>
<text x="816.50" y="397.01" font-size="2.8" fill="#444" textLength="4.74" lengthAdjust="spacingAndGlyphs">AUL</text>
<rect x="862.20" y="251.50" width="12.20" height="23.80" fill="#fff" stroke="#2626ff" stroke-width="1" /><path d="M863.70 258.70L872.90 253.50" stroke="#2626ff" stroke-width="0.9" /><circle cx="868.30" cy="256.10" r="1.7" fill="#2626ff"/><path d="M863.70 266.00L872.90 260.80" stroke="#2626ff" stroke-width="0.9" /><circle cx="868.30" cy="263.40" r="1.7" fill="#2626ff"/><path d="M863.70 273.30L872.90 268.10" stroke="#2626ff" stroke-width="0.9" /><circle cx="868.30" cy="270.70" r="1.7" fill="#2626ff"/>
<rect x="857.50" y="374.70" width="12.20" height="23.80" fill="#fff" stroke="#2626ff" stroke-width="1" /><path d="M859.00 381.90L868.20 376.70" stroke="#2626ff" stroke-width="0.9" /><circle cx="863.60" cy="379.30" r="1.7" fill="#2626ff"/><path d="M859.00 389.20L868.20 384.00" stroke="#2626ff" stroke-width="0.9" /><circle cx="863.60" cy="386.60" r="1.7" fill="#2626ff"/><path d="M859.00 396.50L868.20 391.30" stroke="#2626ff" stroke-width="0.9" /><circle cx="863.60" cy="393.90" r="1.7" fill="#2626ff"/>
<rect x="968.70" y="374.70" width="12.20" height="23.80" fill="#fff" stroke="#2626ff" stroke-width="1" /><path d="M970.20 381.90L979.40 376.70" stroke="#2626ff" stroke-width="0.9" /><circle cx="974.80" cy="379.30" r="1.7" fill="#2626ff"/><path d="M970.20 389.20L979.40 384.00" stroke="#2626ff" stroke-width="0.9" /><circle cx="974.80" cy="386.60" r="1.7" fill="#2626ff"/><path d="M970.20 396.50L979.40 391.30" stroke="#2626ff" stroke-width="0.9" /><circle cx="974.80" cy="393.90" r="1.7" fill="#2626ff"/>
<rect x="933.50" y="346.60" width="23.80" height="11.80" fill="#fff" stroke="#2626ff" stroke-width="1" /><path d="M935.50 356.10L940.70 348.90" stroke="#2626ff" stroke-width="0.9" /><circle cx="938.10" cy="352.50" r="1.7" fill="#2626ff"/><path d="M942.80 356.10L948.00 348.90" stroke="#2626ff" stroke-width="0.9" /><circle cx="945.40" cy="352.50" r="1.7" fill="#2626ff"/><path d="M950.10 356.10L955.30 348.90" stroke="#2626ff" stroke-width="0.9" /><circle cx="952.70" cy="352.50" r="1.7" fill="#2626ff"/>
<path d="M957.3 353.5H976.6V374.7" stroke="#1c1c1c" stroke-width="0.9" stroke-dasharray="3.2 2.4"/>
<rect x="955.00" y="302.00" width="35.60" height="36.00" fill="#fff" stroke="#2626ff" stroke-width="1" />
<path d="M955.00 303.60L989.00 338.00" stroke="#2626ff" stroke-width="0.9" />
<path d="M956.60 302.00L990.60 336.40" stroke="#2626ff" stroke-width="0.9" />
<path d="M955.00 336.40L989.00 302.00" stroke="#2626ff" stroke-width="0.9" />
<path d="M956.60 338.00L990.60 303.60" stroke="#2626ff" stroke-width="0.9" />
<path d="M972.80 311.80l8.2 8.2-8.2 8.2-8.2-8.2z" fill="none" stroke="#2626ff" stroke-width=".9"/>
<rect x="849.00" y="322.20" width="9.80" height="47.80" fill="#fff" stroke="#1c1c1c" stroke-width="1.1" />
<path d="M849.00 326.98L858.80 326.98" stroke="#1c1c1c" stroke-width="1" />
<path d="M849.00 331.76L858.80 331.76" stroke="#1c1c1c" stroke-width="1" />
<path d="M849.00 336.54L858.80 336.54" stroke="#1c1c1c" stroke-width="1" />
<path d="M849.00 341.32L858.80 341.32" stroke="#1c1c1c" stroke-width="1" />
<path d="M849.00 346.10L858.80 346.10" stroke="#1c1c1c" stroke-width="1" />
<path d="M849.00 350.88L858.80 350.88" stroke="#1c1c1c" stroke-width="1" />
<path d="M849.00 355.66L858.80 355.66" stroke="#1c1c1c" stroke-width="1" />
<path d="M849.00 360.44L858.80 360.44" stroke="#1c1c1c" stroke-width="1" />
<path d="M849.00 365.22L858.80 365.22" stroke="#1c1c1c" stroke-width="1" />
<path d="M853.90 322.20L853.90 326.98" stroke="#1c1c1c" stroke-width="1" />
<path d="M851.40 326.98L851.40 331.76" stroke="#1c1c1c" stroke-width="1" />
<path d="M856.30 326.98L856.30 331.76" stroke="#1c1c1c" stroke-width="1" />
<path d="M853.90 331.76L853.90 336.54" stroke="#1c1c1c" stroke-width="1" />
<path d="M851.40 336.54L851.40 341.32" stroke="#1c1c1c" stroke-width="1" />
<path d="M856.30 336.54L856.30 341.32" stroke="#1c1c1c" stroke-width="1" />
<path d="M853.90 341.32L853.90 346.10" stroke="#1c1c1c" stroke-width="1" />
<path d="M851.40 346.10L851.40 350.88" stroke="#1c1c1c" stroke-width="1" />
<path d="M856.30 346.10L856.30 350.88" stroke="#1c1c1c" stroke-width="1" />
<path d="M853.90 350.88L853.90 355.66" stroke="#1c1c1c" stroke-width="1" />
<path d="M851.40 355.66L851.40 360.44" stroke="#1c1c1c" stroke-width="1" />
<path d="M856.30 355.66L856.30 360.44" stroke="#1c1c1c" stroke-width="1" />
<path d="M853.90 360.44L853.90 365.22" stroke="#1c1c1c" stroke-width="1" />
<path d="M851.40 365.22L851.40 370.00" stroke="#1c1c1c" stroke-width="1" />
<path d="M856.30 365.22L856.30 370.00" stroke="#1c1c1c" stroke-width="1" />
<path d="M897.8 380.3H915.6L921.6 386.4L915.6 392.5H897.8z" fill="#fff" stroke="#2626ff" stroke-width="1"/>
<path d="M915.6 380.3H921.6V392.5H915.6" stroke="#2626ff" stroke-width="1"/>
<path d="M899.7 392.5V398.5H920.3V392.5" stroke="#1c1c1c" stroke-width="0.9"/>
<circle cx="910" cy="398.5" r="1.7" fill="#fff" stroke="#ffd35a" stroke-width=".8"/>
<rect x="1080.60" y="362.90" width="23.90" height="47.40" fill="#fff" stroke="#2626ff" stroke-width="1" />
<path d="M1080.60 410.30L1104.50 362.90" stroke="#2626ff" stroke-width="0.9" />
<circle cx="1083" cy="450.6" r="6.2" fill="#fff" stroke="#2626ff" stroke-width="1"/>
<path d="M1078 447L1083 444.4L1088 447" stroke="#2626ff" stroke-width=".8"/>
<rect x="1088.50" y="458.70" width="7.10" height="12.30" fill="#fff" stroke="#2626ff" stroke-width="0.9" />
<path d="M1088.50 458.70L1095.60 471.00" stroke="#2626ff" stroke-width="0.8" />
<path d="M1083.00 464.80L1088.50 464.80" stroke="#7a1aa8" stroke-width="1.4" />
<path d="M1095.60 464.80L1101.80 464.80" stroke="#2626ff" stroke-width="1.4" />
<path d="M1084.50 462.30L1084.50 467.30" stroke="#7a1aa8" stroke-width="0.9" />
<path d="M1098.8 478.6h6l-6 10.8h6z" fill="#fff" stroke="#2626ff" stroke-width=".9"/>
<circle cx="1101.8" cy="484" r="1.3" fill="#2626ff"/>
<circle cx="1083.00" cy="505.3" r="2.4" fill="#fff" stroke="#1c1c1c" stroke-width="0.9"/>
<circle cx="1101.80" cy="505.3" r="2.4" fill="#fff" stroke="#1c1c1c" stroke-width="0.9"/>
<text x="1076.00" y="503.68" font-size="1.9" fill="#555" textLength="3.00" lengthAdjust="spacingAndGlyphs">AVL</text>
<text x="1076.00" y="507.68" font-size="1.9" fill="#555" textLength="3.12" lengthAdjust="spacingAndGlyphs">KAL</text>
<text x="1105.50" y="503.68" font-size="1.9" fill="#555" textLength="3.21" lengthAdjust="spacingAndGlyphs">ARL</text>
<text x="1105.50" y="507.68" font-size="1.9" fill="#555" textLength="3.21" lengthAdjust="spacingAndGlyphs">KRL</text>
<path d="M912.30 259.00L912.30 273.20" stroke="#ffd35a" stroke-width="1" /><circle cx="912.30" cy="275.00" r="1.8" fill="#fff" stroke="#ffd35a" stroke-width=".8"/>
<path d="M868.30 275.30L868.30 281.60" stroke="#ffd35a" stroke-width="1" /><circle cx="868.30" cy="283.40" r="1.8" fill="#fff" stroke="#ffd35a" stroke-width=".8"/>
<path d="M843.80 335.00L843.80 344.20" stroke="#ffd35a" stroke-width="1" /><circle cx="843.80" cy="346.00" r="1.8" fill="#fff" stroke="#ffd35a" stroke-width=".8"/>
<path d="M863.10 398.50L863.10 404.80" stroke="#ffd35a" stroke-width="1" /><circle cx="863.10" cy="406.60" r="1.8" fill="#fff" stroke="#ffd35a" stroke-width=".8"/>
<path d="M975.00 398.50L975.00 404.80" stroke="#ffd35a" stroke-width="1" /><circle cx="975.00" cy="406.60" r="1.8" fill="#fff" stroke="#ffd35a" stroke-width=".8"/>
<path d="M1014.30 382.20L1014.30 396.20" stroke="#ffd35a" stroke-width="1" /><circle cx="1014.30" cy="398.00" r="1.8" fill="#fff" stroke="#ffd35a" stroke-width=".8"/>
<path d="M1197.00 382.20L1197.00 396.20" stroke="#ffd35a" stroke-width="1" /><circle cx="1197.00" cy="398.00" r="1.8" fill="#fff" stroke="#ffd35a" stroke-width=".8"/>
<path d="M1160.2 382V395M1162.2 382V392a2 2 0 0 0 4 0V382" stroke="#ffd35a" stroke-width=".9"/>
<text x="1158.00" y="399.31" font-size="2.8" fill="#997a20" textLength="3.11" lengthAdjust="spacingAndGlyphs">FS</text>
<path d="M1066.20 420.30L1083.00 420.30" stroke="#ffd35a" stroke-width="1.1" />
<circle cx="1066.2" cy="420.3" r="2" fill="#ffd35a"/>
<path d="M1101.80 420.30L1118.50 420.30" stroke="#ffd35a" stroke-width="1.1" />
<circle cx="1118.5" cy="420.3" r="2" fill="#ffd35a"/>
<circle cx="1067.5" cy="450.4" r="2.4" fill="#fff" stroke="#ffd35a" stroke-width=".8"/>
<path d="M1070.00 450.40L1076.80 450.40" stroke="#ffd35a" stroke-width="0.8" />
<circle cx="1110.8" cy="484" r="2.2" fill="#fff" stroke="#ffd35a" stroke-width=".8"/>
<path d="M1104.50 484.00L1108.60 484.00" stroke="#ffd35a" stroke-width="0.8" />
<circle cx="912.30" cy="246.80" r="12.20" fill="#fff" stroke="#2626ff" stroke-width="1"/><path d="M900.10 246.80L924.50 246.80" stroke="#2626ff" stroke-width="1" /><text x="912.30" y="243.23" font-size="6.2" fill="#3a3a3a" text-anchor="middle" textLength="10.91" lengthAdjust="spacingAndGlyphs">TFO</text><text x="912.30" y="255.26" font-size="6" fill="#3a3a3a" text-anchor="middle" textLength="5.87" lengthAdjust="spacingAndGlyphs">01</text>
<circle cx="849.40" cy="277.20" r="12.20" fill="#fff" stroke="#2626ff" stroke-width="1"/><path d="M837.20 277.20L861.60 277.20" stroke="#2626ff" stroke-width="1" /><text x="849.40" y="273.63" font-size="6.2" fill="#3a3a3a" text-anchor="middle" textLength="10.31" lengthAdjust="spacingAndGlyphs">LKA</text><text x="849.40" y="285.66" font-size="6" fill="#3a3a3a" text-anchor="middle" textLength="5.87" lengthAdjust="spacingAndGlyphs">01</text>
<circle cx="824.30" cy="336.60" r="12.20" fill="#fff" stroke="#2626ff" stroke-width="1"/><path d="M812.10 336.60L836.50 336.60" stroke="#2626ff" stroke-width="1" /><text x="824.30" y="333.03" font-size="6.2" fill="#3a3a3a" text-anchor="middle" textLength="10.51" lengthAdjust="spacingAndGlyphs">TAU</text><text x="824.30" y="345.06" font-size="6" fill="#3a3a3a" text-anchor="middle" textLength="5.87" lengthAdjust="spacingAndGlyphs">01</text>
<circle cx="909.60" cy="367.80" r="12.20" fill="#fff" stroke="#2626ff" stroke-width="1"/><path d="M897.40 367.80L921.80 367.80" stroke="#2626ff" stroke-width="1" /><text x="909.60" y="364.23" font-size="6.2" fill="#3a3a3a" text-anchor="middle" textLength="7.88" lengthAdjust="spacingAndGlyphs">LFI</text><text x="909.60" y="376.26" font-size="6" fill="#3a3a3a" text-anchor="middle" textLength="5.87" lengthAdjust="spacingAndGlyphs">01</text>
<circle cx="844.80" cy="401.00" r="12.20" fill="#fff" stroke="#2626ff" stroke-width="1"/><path d="M832.60 401.00L857.00 401.00" stroke="#2626ff" stroke-width="1" /><text x="844.80" y="397.43" font-size="6.2" fill="#3a3a3a" text-anchor="middle" textLength="10.31" lengthAdjust="spacingAndGlyphs">LKA</text><text x="844.80" y="409.46" font-size="6" fill="#3a3a3a" text-anchor="middle" textLength="5.87" lengthAdjust="spacingAndGlyphs">02</text>
<circle cx="956.00" cy="401.00" r="12.20" fill="#fff" stroke="#2626ff" stroke-width="1"/><path d="M943.80 401.00L968.20 401.00" stroke="#2626ff" stroke-width="1" /><text x="956.00" y="397.43" font-size="6.2" fill="#3a3a3a" text-anchor="middle" textLength="10.31" lengthAdjust="spacingAndGlyphs">LKA</text><text x="956.00" y="409.46" font-size="6" fill="#3a3a3a" text-anchor="middle" textLength="5.87" lengthAdjust="spacingAndGlyphs">03</text>
<circle cx="1014.30" cy="370.00" r="12.20" fill="#fff" stroke="#2626ff" stroke-width="1"/><path d="M1002.10 370.00L1026.50 370.00" stroke="#2626ff" stroke-width="1" /><text x="1014.30" y="366.43" font-size="6.2" fill="#3a3a3a" text-anchor="middle" textLength="12.42" lengthAdjust="spacingAndGlyphs">TNW</text><text x="1014.30" y="378.46" font-size="6" fill="#3a3a3a" text-anchor="middle" textLength="5.87" lengthAdjust="spacingAndGlyphs">01</text>
<circle cx="1066.20" cy="403.20" r="12.20" fill="#fff" stroke="#2626ff" stroke-width="1"/><path d="M1054.00 403.20L1078.40 403.20" stroke="#2626ff" stroke-width="1" /><text x="1066.20" y="399.63" font-size="6.2" fill="#3a3a3a" text-anchor="middle" textLength="10.01" lengthAdjust="spacingAndGlyphs">TVL</text><text x="1066.20" y="411.66" font-size="6" fill="#3a3a3a" text-anchor="middle" textLength="5.87" lengthAdjust="spacingAndGlyphs">01</text>
<circle cx="1118.50" cy="403.20" r="12.20" fill="#fff" stroke="#2626ff" stroke-width="1"/><path d="M1106.30 403.20L1130.70 403.20" stroke="#2626ff" stroke-width="1" /><text x="1118.50" y="399.63" font-size="6.2" fill="#3a3a3a" text-anchor="middle" textLength="10.31" lengthAdjust="spacingAndGlyphs">TRL</text><text x="1118.50" y="411.66" font-size="6" fill="#3a3a3a" text-anchor="middle" textLength="5.87" lengthAdjust="spacingAndGlyphs">01</text>
<circle cx="1163.50" cy="370.00" r="12.20" fill="#fff" stroke="#2626ff" stroke-width="1"/><path d="M1151.30 370.00L1175.70 370.00" stroke="#2626ff" stroke-width="1" /><text x="1163.50" y="366.43" font-size="6.2" fill="#3a3a3a" text-anchor="middle" textLength="12.12" lengthAdjust="spacingAndGlyphs">FSW</text><text x="1163.50" y="378.46" font-size="6" fill="#3a3a3a" text-anchor="middle" textLength="5.87" lengthAdjust="spacingAndGlyphs">01</text>
<circle cx="1197.00" cy="370.00" r="12.20" fill="#fff" stroke="#2626ff" stroke-width="1"/><path d="M1184.80 370.00L1209.20 370.00" stroke="#2626ff" stroke-width="1" /><text x="1197.00" y="366.43" font-size="6.2" fill="#3a3a3a" text-anchor="middle" textLength="10.31" lengthAdjust="spacingAndGlyphs">TNL</text><text x="1197.00" y="378.46" font-size="6" fill="#3a3a3a" text-anchor="middle" textLength="5.87" lengthAdjust="spacingAndGlyphs">01</text>
<circle cx="1242.00" cy="403.20" r="12.20" fill="#fff" stroke="#2626ff" stroke-width="1"/><path d="M1229.80 403.20L1254.20 403.20" stroke="#2626ff" stroke-width="1" /><text x="1242.00" y="399.63" font-size="6.2" fill="#3a3a3a" text-anchor="middle" textLength="9.70" lengthAdjust="spacingAndGlyphs">TZL</text><text x="1242.00" y="411.66" font-size="6" fill="#3a3a3a" text-anchor="middle" textLength="5.87" lengthAdjust="spacingAndGlyphs">01</text>
<circle cx="1144.60" cy="287.00" r="12.20" fill="#fff" stroke="#2626ff" stroke-width="1"/><path d="M1132.40 287.00L1156.80 287.00" stroke="#2626ff" stroke-width="1" /><text x="1144.60" y="283.43" font-size="6.2" fill="#3a3a3a" text-anchor="middle" textLength="9.10" lengthAdjust="spacingAndGlyphs">PIC</text><text x="1144.60" y="295.46" font-size="6" fill="#3a3a3a" text-anchor="middle" textLength="5.87" lengthAdjust="spacingAndGlyphs">01</text>
<circle cx="1208.70" cy="287.00" r="12.20" fill="#fff" stroke="#2626ff" stroke-width="1"/><path d="M1196.50 287.00L1220.90 287.00" stroke="#2626ff" stroke-width="1" /><text x="1208.70" y="283.43" font-size="6.2" fill="#3a3a3a" text-anchor="middle" textLength="9.39" lengthAdjust="spacingAndGlyphs">TIM</text><text x="1208.70" y="295.46" font-size="6" fill="#3a3a3a" text-anchor="middle" textLength="5.87" lengthAdjust="spacingAndGlyphs">01</text>
<circle cx="1144.60" cy="322.60" r="12.20" fill="#fff" stroke="#2626ff" stroke-width="1"/><path d="M1132.40 322.60L1156.80 322.60" stroke="#2626ff" stroke-width="1" /><text x="1144.60" y="319.03" font-size="6.2" fill="#3a3a3a" text-anchor="middle" textLength="9.10" lengthAdjust="spacingAndGlyphs">PIC</text><text x="1144.60" y="331.06" font-size="6" fill="#3a3a3a" text-anchor="middle" textLength="5.87" lengthAdjust="spacingAndGlyphs">02</text>
<circle cx="1207.80" cy="322.60" r="12.20" fill="#fff" stroke="#2626ff" stroke-width="1"/><path d="M1195.60 322.60L1220.00 322.60" stroke="#2626ff" stroke-width="1" /><text x="1207.80" y="319.03" font-size="6.2" fill="#3a3a3a" text-anchor="middle" textLength="10.62" lengthAdjust="spacingAndGlyphs">CAL</text><text x="1207.80" y="331.06" font-size="6" fill="#3a3a3a" text-anchor="middle" textLength="5.87" lengthAdjust="spacingAndGlyphs">01</text>
<circle cx="1065.30" cy="482.20" r="12.20" fill="#fff" stroke="#2626ff" stroke-width="1"/><path d="M1053.10 482.20L1077.50 482.20" stroke="#2626ff" stroke-width="1" /><text x="1065.30" y="478.63" font-size="6.2" fill="#3a3a3a" text-anchor="middle" textLength="10.92" lengthAdjust="spacingAndGlyphs">PPE</text><text x="1065.30" y="490.66" font-size="6" fill="#3a3a3a" text-anchor="middle" textLength="5.87" lengthAdjust="spacingAndGlyphs">01</text>
<circle cx="1118.50" cy="469.40" r="12.20" fill="#fff" stroke="#2626ff" stroke-width="1"/><path d="M1106.30 469.40L1130.70 469.40" stroke="#2626ff" stroke-width="1" /><text x="1118.50" y="465.83" font-size="6.2" fill="#3a3a3a" text-anchor="middle" textLength="11.22" lengthAdjust="spacingAndGlyphs">VEN</text><text x="1118.50" y="477.86" font-size="6" fill="#3a3a3a" text-anchor="middle" textLength="5.87" lengthAdjust="spacingAndGlyphs">01</text>
<text x="868.40" y="290.70" font-size="3.6" fill="#111" text-anchor="middle" font-weight="bold" textLength="6.66" lengthAdjust="spacingAndGlyphs">QN2</text><text x="868.40" y="295.41" font-size="4.2" fill="#8aa84a" text-anchor="middle" textLength="38.89" lengthAdjust="spacingAndGlyphs">=SSA01+F1&amp;EFS/211.1</text><text x="868.40" y="300.11" font-size="4.2" fill="#008585" text-anchor="middle" textLength="37.60" lengthAdjust="spacingAndGlyphs">EPL_EES.BAG206003</text><text x="868.40" y="304.81" font-size="4.2" fill="#008585" text-anchor="middle" textLength="28.35" lengthAdjust="spacingAndGlyphs">Damper actuator,</text><text x="868.40" y="309.51" font-size="4.2" fill="#008585" text-anchor="middle" textLength="12.33" lengthAdjust="spacingAndGlyphs">3-point,</text><text x="868.40" y="314.21" font-size="4.2" fill="#008585" text-anchor="middle" textLength="34.10" lengthAdjust="spacingAndGlyphs">EL.OPEN&amp;CLOSE 4</text><text x="868.40" y="318.91" font-size="4.2" fill="#008585" text-anchor="middle" textLength="30.09" lengthAdjust="spacingAndGlyphs">Nm, &lt;0,8 m², 24 V</text>
<text x="912.30" y="281.30" font-size="3.6" fill="#111" text-anchor="middle" font-weight="bold" textLength="6.12" lengthAdjust="spacingAndGlyphs">BT2</text><text x="912.30" y="286.01" font-size="4.2" fill="#8aa84a" text-anchor="middle" textLength="39.16" lengthAdjust="spacingAndGlyphs">=SSA01+F1&amp;EFS/100.1</text><text x="912.30" y="290.71" font-size="4.2" fill="#008585" text-anchor="middle" textLength="37.60" lengthAdjust="spacingAndGlyphs">EPL_EES.BAG101009</text><text x="912.30" y="295.41" font-size="4.2" fill="#008585" text-anchor="middle" textLength="28.55" lengthAdjust="spacingAndGlyphs">Duct temperature</text><text x="912.30" y="300.11" font-size="4.2" fill="#008585" text-anchor="middle" textLength="26.92" lengthAdjust="spacingAndGlyphs">sensor, PT1000,</text><text x="912.30" y="304.81" font-size="4.2" fill="#008585" text-anchor="middle" textLength="24.45" lengthAdjust="spacingAndGlyphs">length 150 mm</text>
<text x="845.50" y="354.30" font-size="3.6" fill="#111" text-anchor="middle" font-weight="bold" textLength="5.92" lengthAdjust="spacingAndGlyphs">BT1</text>
<text x="848.00" y="359.71" font-size="4.2" fill="#8aa84a" text-anchor="end" textLength="39.16" lengthAdjust="spacingAndGlyphs">=SSA01+F1&amp;EFS/102.1</text><text x="848.00" y="364.41" font-size="4.2" fill="#008585" text-anchor="end" textLength="37.60" lengthAdjust="spacingAndGlyphs">EPL_EES.BAG106003</text><text x="848.00" y="369.11" font-size="4.2" fill="#008585" text-anchor="end" textLength="34.31" lengthAdjust="spacingAndGlyphs">Outdoor temperature</text><text x="848.00" y="373.81" font-size="4.2" fill="#008585" text-anchor="end" textLength="25.89" lengthAdjust="spacingAndGlyphs">sensor, PT1000</text>
<text x="863.00" y="413.50" font-size="3.6" fill="#111" text-anchor="middle" font-weight="bold" textLength="6.66" lengthAdjust="spacingAndGlyphs">QN1</text><text x="863.00" y="418.81" font-size="4.2" fill="#8aa84a" text-anchor="middle" textLength="38.89" lengthAdjust="spacingAndGlyphs">=SSA01+F1&amp;EFS/211.1</text><text x="863.00" y="423.51" font-size="4.2" fill="#008585" text-anchor="middle" textLength="37.60" lengthAdjust="spacingAndGlyphs">EPL_EES.BAG206003</text><text x="863.00" y="428.21" font-size="4.2" fill="#008585" text-anchor="middle" textLength="28.35" lengthAdjust="spacingAndGlyphs">Damper actuator,</text><text x="863.00" y="432.91" font-size="4.2" fill="#008585" text-anchor="middle" textLength="12.33" lengthAdjust="spacingAndGlyphs">3-point,</text><text x="863.00" y="437.61" font-size="4.2" fill="#008585" text-anchor="middle" textLength="34.10" lengthAdjust="spacingAndGlyphs">EL.OPEN&amp;CLOSE 4</text><text x="863.00" y="442.31" font-size="4.2" fill="#008585" text-anchor="middle" textLength="30.09" lengthAdjust="spacingAndGlyphs">Nm, &lt;0,8 m², 24 V</text>
<text x="910.00" y="402.36" font-size="2.4" fill="#997a20" text-anchor="middle" textLength="2.79" lengthAdjust="spacingAndGlyphs">ΔP</text>
<text x="910.00" y="406.00" font-size="3.6" fill="#111" text-anchor="middle" font-weight="bold" textLength="6.30" lengthAdjust="spacingAndGlyphs">BP1</text><text x="910.00" y="410.71" font-size="4.2" fill="#8aa84a" text-anchor="middle" textLength="39.16" lengthAdjust="spacingAndGlyphs">=SSA01+F1&amp;EFS/130.1</text><text x="910.00" y="415.36" font-size="4.2" fill="#008585" text-anchor="middle" textLength="37.33" lengthAdjust="spacingAndGlyphs">EPL_EES.BAG110001</text><text x="910.00" y="420.01" font-size="4.2" fill="#008585" text-anchor="middle" textLength="33.01" lengthAdjust="spacingAndGlyphs">Differential pressure</text><text x="910.00" y="424.66" font-size="4.2" fill="#008585" text-anchor="middle" textLength="20.54" lengthAdjust="spacingAndGlyphs">switch, Filter</text><text x="910.00" y="429.31" font-size="4.2" fill="#008585" text-anchor="middle" textLength="31.23" lengthAdjust="spacingAndGlyphs">monitoring, 50 Pa -</text><text x="910.00" y="433.96" font-size="4.2" fill="#008585" text-anchor="middle" textLength="11.71" lengthAdjust="spacingAndGlyphs">400 Pa</text>
<text x="975.00" y="413.50" font-size="3.6" fill="#111" text-anchor="middle" font-weight="bold" textLength="6.66" lengthAdjust="spacingAndGlyphs">QN3</text><text x="975.00" y="418.81" font-size="4.2" fill="#8aa84a" text-anchor="middle" textLength="39.16" lengthAdjust="spacingAndGlyphs">=SSA01+F1&amp;EFS/210.1</text><text x="975.00" y="423.51" font-size="4.2" fill="#008585" text-anchor="middle" textLength="37.60" lengthAdjust="spacingAndGlyphs">EPL_EES.BAG206019</text><text x="975.00" y="428.21" font-size="4.2" fill="#008585" text-anchor="middle" textLength="28.35" lengthAdjust="spacingAndGlyphs">Damper actuator,</text><text x="975.00" y="432.91" font-size="4.2" fill="#008585" text-anchor="middle" textLength="21.78" lengthAdjust="spacingAndGlyphs">spring return,</text><text x="975.00" y="437.61" font-size="4.2" fill="#008585" text-anchor="middle" textLength="18.90" lengthAdjust="spacingAndGlyphs">continuous,</text><text x="975.00" y="442.31" font-size="4.2" fill="#008585" text-anchor="middle" textLength="35.33" lengthAdjust="spacingAndGlyphs">currentless CLOSED,</text><text x="975.00" y="447.01" font-size="4.2" fill="#008585" text-anchor="middle" textLength="31.12" lengthAdjust="spacingAndGlyphs">RF, 4 Nm, &lt;0,8 m²,</text><text x="975.00" y="451.71" font-size="4.2" fill="#008585" text-anchor="middle" textLength="7.60" lengthAdjust="spacingAndGlyphs">24 V</text>
<text x="1014.30" y="404.70" font-size="3.6" fill="#111" text-anchor="middle" font-weight="bold" textLength="6.12" lengthAdjust="spacingAndGlyphs">BT3</text><text x="1014.30" y="409.41" font-size="4.2" fill="#8aa84a" text-anchor="middle" textLength="39.16" lengthAdjust="spacingAndGlyphs">=SSA01+F1&amp;EFS/102.1</text><text x="1014.30" y="414.11" font-size="4.2" fill="#008585" text-anchor="middle" textLength="37.60" lengthAdjust="spacingAndGlyphs">EPL_EES.BAG101009</text><text x="1014.30" y="418.81" font-size="4.2" fill="#008585" text-anchor="middle" textLength="28.55" lengthAdjust="spacingAndGlyphs">Duct temperature</text><text x="1014.30" y="423.51" font-size="4.2" fill="#008585" text-anchor="middle" textLength="26.92" lengthAdjust="spacingAndGlyphs">sensor, PT1000,</text><text x="1014.30" y="428.21" font-size="4.2" fill="#008585" text-anchor="middle" textLength="24.45" lengthAdjust="spacingAndGlyphs">length 150 mm</text>
<text x="1064.00" y="423.80" font-size="3.6" fill="#111" text-anchor="end" font-weight="bold" textLength="7.20" lengthAdjust="spacingAndGlyphs">-BT4</text><text x="1064.00" y="428.21" font-size="4.2" fill="#8aa84a" text-anchor="end" textLength="39.16" lengthAdjust="spacingAndGlyphs">=SSA01+F1&amp;EFS/102.1</text><text x="1064.00" y="432.91" font-size="4.2" fill="#008585" text-anchor="end" textLength="37.60" lengthAdjust="spacingAndGlyphs">EPL_EES.BAG101002</text><text x="1064.00" y="437.61" font-size="4.2" fill="#008585" text-anchor="end" textLength="38.21" lengthAdjust="spacingAndGlyphs">Immersion temperature</text><text x="1064.00" y="442.31" font-size="4.2" fill="#008585" text-anchor="end" textLength="38.01" lengthAdjust="spacingAndGlyphs">sensor, PT1000, length</text><text x="1064.00" y="447.01" font-size="4.2" fill="#008585" text-anchor="end" textLength="13.35" lengthAdjust="spacingAndGlyphs">150 mm</text>
<text x="1121.00" y="423.80" font-size="3.6" fill="#111" font-weight="bold" textLength="7.20" lengthAdjust="spacingAndGlyphs">-BT5</text><text x="1121.00" y="428.21" font-size="4.2" fill="#8aa84a" textLength="39.16" lengthAdjust="spacingAndGlyphs">=SSA01+F1&amp;EFS/103.1</text><text x="1121.00" y="432.91" font-size="4.2" fill="#008585" textLength="37.60" lengthAdjust="spacingAndGlyphs">EPL_EES.BAG101002</text><text x="1121.00" y="437.61" font-size="4.2" fill="#008585" textLength="38.21" lengthAdjust="spacingAndGlyphs">Immersion temperature</text><text x="1121.00" y="442.31" font-size="4.2" fill="#008585" textLength="38.01" lengthAdjust="spacingAndGlyphs">sensor, PT1000, length</text><text x="1121.00" y="447.01" font-size="4.2" fill="#008585" textLength="13.35" lengthAdjust="spacingAndGlyphs">150 mm</text>
<text x="1160.00" y="404.70" font-size="3.6" fill="#111" text-anchor="middle" font-weight="bold" textLength="6.84" lengthAdjust="spacingAndGlyphs">FW1</text><text x="1160.00" y="409.41" font-size="4.2" fill="#8aa84a" text-anchor="middle" textLength="39.16" lengthAdjust="spacingAndGlyphs">=SSA01+F1&amp;EFS/100.1</text><text x="1160.00" y="414.11" font-size="4.2" fill="#008585" text-anchor="middle" textLength="37.06" lengthAdjust="spacingAndGlyphs">EPL_EES.BAG111010</text><text x="1160.00" y="418.81" font-size="4.2" fill="#008585" text-anchor="middle" textLength="25.68" lengthAdjust="spacingAndGlyphs">Frost protection</text><text x="1160.00" y="423.51" font-size="4.2" fill="#008585" text-anchor="middle" textLength="31.42" lengthAdjust="spacingAndGlyphs">limiter, 6m capillary</text><text x="1160.00" y="428.21" font-size="4.2" fill="#008585" text-anchor="middle" textLength="11.09" lengthAdjust="spacingAndGlyphs">sensor</text>
<text x="1197.00" y="404.70" font-size="3.6" fill="#111" text-anchor="middle" font-weight="bold" textLength="6.12" lengthAdjust="spacingAndGlyphs">BT6</text><text x="1197.00" y="409.41" font-size="4.2" fill="#8aa84a" text-anchor="middle" textLength="39.16" lengthAdjust="spacingAndGlyphs">=SSA01+F1&amp;EFS/105.1</text><text x="1197.00" y="414.11" font-size="4.2" fill="#008585" text-anchor="middle" textLength="37.60" lengthAdjust="spacingAndGlyphs">EPL_EES.BAG101009</text><text x="1197.00" y="418.81" font-size="4.2" fill="#008585" text-anchor="middle" textLength="28.55" lengthAdjust="spacingAndGlyphs">Duct temperature</text><text x="1197.00" y="423.51" font-size="4.2" fill="#008585" text-anchor="middle" textLength="26.92" lengthAdjust="spacingAndGlyphs">sensor, PT1000,</text><text x="1197.00" y="428.21" font-size="4.2" fill="#008585" text-anchor="middle" textLength="24.45" lengthAdjust="spacingAndGlyphs">length 150 mm</text>
<text x="1237.50" y="423.80" font-size="3.6" fill="#111" text-anchor="end" font-weight="bold" textLength="7.20" lengthAdjust="spacingAndGlyphs">-BT7</text><text x="1237.50" y="428.21" font-size="4.2" fill="#8aa84a" text-anchor="end" textLength="39.16" lengthAdjust="spacingAndGlyphs">=SSA01+F1&amp;EFS/104.1</text><text x="1237.50" y="432.91" font-size="4.2" fill="#008585" text-anchor="end" textLength="37.60" lengthAdjust="spacingAndGlyphs">EPL_EES.BAG101002</text><text x="1237.50" y="437.61" font-size="4.2" fill="#008585" text-anchor="end" textLength="38.21" lengthAdjust="spacingAndGlyphs">Immersion temperature</text><text x="1237.50" y="442.31" font-size="4.2" fill="#008585" text-anchor="end" textLength="38.01" lengthAdjust="spacingAndGlyphs">sensor, PT1000, length</text><text x="1237.50" y="447.01" font-size="4.2" fill="#008585" text-anchor="end" textLength="13.35" lengthAdjust="spacingAndGlyphs">150 mm</text>
<text x="1064.00" y="454.70" font-size="3.6" fill="#111" text-anchor="end" font-weight="bold" textLength="6.48" lengthAdjust="spacingAndGlyphs">GP1</text><text x="1064.00" y="459.51" font-size="4.2" fill="#8aa84a" text-anchor="end" textLength="37.15" lengthAdjust="spacingAndGlyphs">=SSA01+F1&amp;EFS/40.1</text><text x="1064.00" y="464.11" font-size="4.2" fill="#008585" text-anchor="end" textLength="37.60" lengthAdjust="spacingAndGlyphs">EPL_EES.BAG701063</text><text x="1064.00" y="468.71" font-size="4.2" fill="#008585" text-anchor="end" textLength="34.72" lengthAdjust="spacingAndGlyphs">Pump, 1-stage, 230V</text>
<text x="1118.50" y="485.30" font-size="3.6" fill="#111" font-weight="bold" textLength="7.74" lengthAdjust="spacingAndGlyphs">-QN4</text><text x="1118.50" y="489.91" font-size="4.2" fill="#8aa84a" textLength="39.16" lengthAdjust="spacingAndGlyphs">=SSA01+F1&amp;EFS/220.1</text><text x="1118.50" y="494.61" font-size="4.2" fill="#008585" textLength="37.60" lengthAdjust="spacingAndGlyphs">EPL_EES.BAG202004</text><text x="1118.50" y="499.31" font-size="4.2" fill="#008585" textLength="39.00" lengthAdjust="spacingAndGlyphs">Valve + actuator, 2-way,</text><text x="1118.50" y="504.01" font-size="4.2" fill="#008585" textLength="40.47" lengthAdjust="spacingAndGlyphs">modulating, DN15, R1/2,</text><text x="1118.50" y="508.71" font-size="4.2" fill="#008585" textLength="16.23" lengthAdjust="spacingAndGlyphs">PN16, RF</text>
<text x="1099.00" y="271.86" font-size="6" fill="#2626ff" textLength="31.52" lengthAdjust="spacingAndGlyphs">Graphic plant</text>
<text x="1168.20" y="271.86" font-size="6" fill="#2626ff" textLength="35.44" lengthAdjust="spacingAndGlyphs">Time programs</text>
<text x="1099.40" y="307.86" font-size="6" fill="#2626ff" textLength="56.55" lengthAdjust="spacingAndGlyphs">Graphic control diagram</text>
<text x="1168.20" y="307.16" font-size="6" fill="#2626ff" textLength="21.51" lengthAdjust="spacingAndGlyphs">Calendar</text>
<rect x="1099.40" y="275.00" width="31.30" height="21.50" rx="2.6" fill="#e8e8e8" stroke="#222" stroke-width="1"/><rect x="1102.20" y="277.80" width="25.70" height="15.90" fill="#f6f6f6" stroke="#222" stroke-width="1"/>
<rect x="1099.40" y="310.80" width="31.30" height="21.50" rx="2.6" fill="#e8e8e8" stroke="#222" stroke-width="1"/><rect x="1102.20" y="313.60" width="25.70" height="15.90" fill="#f6f6f6" stroke="#222" stroke-width="1"/>
<path d="M1105 283h10v-2.5h8v6h-8v-2" stroke="#bbb" stroke-width=".7"/><rect x="1122.5" y="282.5" width="2.2" height="3" fill="#f7a0a0"/><path d="M1105 290h16" stroke="#ccc" stroke-width=".7"/>
<path d="M1105 328l6.5-7h11.5l2 7z" fill="#cfcfcf" stroke="#aaa" stroke-width=".5"/>
<rect x="1168.2" y="275" width="26.5" height="19.6" rx="2.6" fill="#d9d9d9" stroke="#222" stroke-width="1"/>
<path d="M1168.20 279.60L1194.70 279.60" stroke="#222" stroke-width="0.9" />
<text x="1181.50" y="278.41" font-size="2.8" fill="#333" text-anchor="middle" textLength="5.82" lengthAdjust="spacingAndGlyphs">TIME</text>
<circle cx="1181.4" cy="287" r="5.6" fill="#eee" stroke="#222" stroke-width="1"/><path d="M1181.4 283v4.2l2.2 2.6" stroke="#222" stroke-width=".9"/>
<rect x="1166.5" y="311" width="26.5" height="19" rx="2.6" fill="#d9d9d9" stroke="#222" stroke-width="1"/>
<path d="M1166.50 315.40L1193.00 315.40" stroke="#222" stroke-width="0.9" />
<text x="1179.80" y="314.21" font-size="2.8" fill="#333" text-anchor="middle" textLength="4.74" lengthAdjust="spacingAndGlyphs">CAL</text>
<rect x="1170.30" y="319.80" width="3.00" height="8.40" fill="#222" />
<rect x="1174.30" y="319.80" width="3.00" height="8.40" fill="#222" />
<rect x="1178.30" y="319.80" width="3.00" height="8.40" fill="#222" />
<rect x="1182.30" y="319.80" width="3.00" height="8.40" fill="#222" />
<rect x="1186.30" y="319.80" width="3.00" height="8.40" fill="#222" />
<path d="M1172.50 315.00L1172.50 319.00" stroke="#222" stroke-width="1" />
<path d="M1186.50 315.00L1186.50 319.00" stroke="#222" stroke-width="1" />
<path d="M807.50 512.25L1237.00 512.25" stroke="#1c1c1c" stroke-width="0.9" />
<path d="M826.50 512.25L826.50 720.00" stroke="#1c1c1c" stroke-width="0.9" />
<path d="M845.60 512.25L845.60 720.00" stroke="#1c1c1c" stroke-width="0.9" />
<path d="M807.50 588.10L1237.00 588.10" stroke="#1c1c1c" stroke-width="1" />
<path d="M807.50 645.25L1237.00 645.25" stroke="#1c1c1c" stroke-width="1" />
<path d="M807.50 711.25L1237.00 711.25" stroke="#1c1c1c" stroke-width="1" />
<path d="M807.50 623.82L845.60 623.82" stroke="#1c1c1c" stroke-width="0.9" />
<path d="M826.50 595.24L845.60 595.24" stroke="#1c1c1c" stroke-width="0.9" />
<path d="M826.50 602.39L845.60 602.39" stroke="#1c1c1c" stroke-width="0.9" />
<path d="M826.50 609.53L845.60 609.53" stroke="#1c1c1c" stroke-width="0.9" />
<path d="M826.50 616.67L845.60 616.67" stroke="#1c1c1c" stroke-width="0.9" />
<path d="M826.50 623.82L845.60 623.82" stroke="#1c1c1c" stroke-width="0.9" />
<path d="M826.50 630.96L845.60 630.96" stroke="#1c1c1c" stroke-width="0.9" />
<path d="M826.50 638.11L845.60 638.11" stroke="#1c1c1c" stroke-width="0.9" />
<text transform="translate(817.00 550.50) rotate(-90)" x="0" y="2.02" font-size="5.6" fill="#111" text-anchor="middle" font-weight="bold" textLength="9.00" lengthAdjust="spacingAndGlyphs">GA</text>
<text transform="translate(836.20 550.50) rotate(-90)" x="0" y="1.80" font-size="5" fill="#111" text-anchor="middle" font-weight="bold" textLength="40.60" lengthAdjust="spacingAndGlyphs">User address key</text>
<text transform="translate(813.80 606.00) rotate(-90)" x="0" y="2.02" font-size="5.6" fill="#111" text-anchor="middle" font-weight="bold" textLength="13.00" lengthAdjust="spacingAndGlyphs">Data</text>
<text transform="translate(820.80 606.00) rotate(-90)" x="0" y="2.02" font-size="5.6" fill="#111" text-anchor="middle" font-weight="bold" textLength="24.00" lengthAdjust="spacingAndGlyphs">structure</text>
<text transform="translate(817.00 634.60) rotate(-90)" x="0" y="2.02" font-size="5.6" fill="#111" text-anchor="middle" font-weight="bold" textLength="10.50" lengthAdjust="spacingAndGlyphs">LOD</text>
<text x="836.00" y="593.67" font-size="5" fill="#555" text-anchor="middle" textLength="4.49" lengthAdjust="spacingAndGlyphs">BI</text>
<text x="836.00" y="600.82" font-size="5" fill="#555" text-anchor="middle" textLength="6.86" lengthAdjust="spacingAndGlyphs">BO</text>
<text x="836.00" y="607.96" font-size="5" fill="#555" text-anchor="middle" textLength="4.49" lengthAdjust="spacingAndGlyphs">AI</text>
<text x="836.00" y="615.10" font-size="5" fill="#555" text-anchor="middle" textLength="6.86" lengthAdjust="spacingAndGlyphs">AO</text>
<text x="836.00" y="622.25" font-size="5" fill="#555" text-anchor="middle" textLength="10.03" lengthAdjust="spacingAndGlyphs">Com</text>
<circle cx="836" cy="627.39" r="2.1" fill="#0a6a1a"/>
<path d="M833.4 636.53h6.4v-3.6z" fill="#111"/>
<circle cx="835" cy="641.68" r="2" stroke="#222" stroke-width=".8"/><path d="M833 643.88l6-4.6" stroke="#222" stroke-width=".8"/>
<text transform="translate(817.00 681.00) rotate(-90)" x="0" y="1.91" font-size="5.3" fill="#111" text-anchor="middle" font-weight="bold" textLength="33.50" lengthAdjust="spacingAndGlyphs">Components</text>
<text transform="translate(836.20 678.00) rotate(-90)" x="0" y="1.80" font-size="5" fill="#111" text-anchor="middle" font-weight="bold" textLength="51.00" lengthAdjust="spacingAndGlyphs">Data point designation</text>
<text x="819.00" y="718.82" font-size="5.6" fill="#111" text-anchor="middle" font-weight="bold" textLength="12.00" lengthAdjust="spacingAndGlyphs">Type</text>
<g>
<path d="M845.60 720.00V512.25L849.50 509.75L851.10 509.75L855.00 512.25V720.00z" fill="#d9d9d9"/><path d="M845.60 512.25L849.50 509.75L851.10 509.75L855.00 512.25" stroke="#1c1c1c" stroke-width=".9" fill="none"/><path d="M845.60 512.25L845.60 720.00" stroke="#1c1c1c" stroke-width="1.25" /><path d="M855.00 512.25L855.00 720.00" stroke="#1c1c1c" stroke-width="1.25" /><text transform="translate(850.30 586.00) rotate(-90)" x="0" y="1.48" font-size="4.1" fill="#111" text-anchor="start" font-weight="bold" textLength="68.60" lengthAdjust="spacingAndGlyphs">GEB01_ASP01_RLT01_ABL_ABV 01</text><text transform="translate(850.30 709.50) rotate(-90)" x="0" y="1.66" font-size="4.6" fill="#111" text-anchor="start" font-weight="bold" textLength="12.82" lengthAdjust="spacingAndGlyphs">EC fan</text><text transform="translate(850.30 719.50) rotate(-90)" x="0" y="1.15" font-size="3.2" fill="#7ab648" text-anchor="start" textLength="5.00" lengthAdjust="spacingAndGlyphs">DLA</text><text x="850.30" y="593.18" font-size="4.2" fill="#111" text-anchor="middle" font-weight="bold">3</text><text x="850.30" y="600.33" font-size="4.2" fill="#111" text-anchor="middle" font-weight="bold">1</text><text x="850.30" y="614.62" font-size="4.2" fill="#111" text-anchor="middle" font-weight="bold">1</text>
<path d="M855.00 512.25L862.20 512.25" stroke="#1c1c1c" stroke-width="1.25" /><path d="M855.00 595.24L862.20 595.24" stroke="#1c1c1c" stroke-width="0.95" /><path d="M855.00 602.39L862.20 602.39" stroke="#1c1c1c" stroke-width="0.95" /><path d="M855.00 609.53L862.20 609.53" stroke="#1c1c1c" stroke-width="0.95" /><path d="M855.00 616.67L862.20 616.67" stroke="#1c1c1c" stroke-width="0.95" /><path d="M855.00 623.82L862.20 623.82" stroke="#1c1c1c" stroke-width="0.95" /><path d="M855.00 630.96L862.20 630.96" stroke="#1c1c1c" stroke-width="0.95" /><path d="M855.00 638.11L862.20 638.11" stroke="#1c1c1c" stroke-width="0.95" /><path d="M855.00 512.25L855.00 720.00" stroke="#1c1c1c" stroke-width="1.25" /><path d="M862.20 512.25L862.20 720.00" stroke="#1c1c1c" stroke-width="1.25" /><text transform="translate(858.60 586.00) rotate(-90)" x="0" y="1.44" font-size="4" fill="#686868" text-anchor="start" textLength="63.00" lengthAdjust="spacingAndGlyphs">GEB01 ASP01 RLT01 ABL ABV 01 SB 01</text><text transform="translate(858.60 709.50) rotate(-90)" x="0" y="1.62" font-size="4.5" fill="#505050" text-anchor="start" textLength="28.40" lengthAdjust="spacingAndGlyphs">Switching output</text><text x="858.60" y="717.82" font-size="3.4" fill="#444" text-anchor="middle" textLength="4.60" lengthAdjust="spacingAndGlyphs">BO</text><text x="858.60" y="600.18" font-size="3.8" fill="#666" text-anchor="middle">1</text>
<path d="M862.20 512.25L869.40 512.25" stroke="#1c1c1c" stroke-width="1.25" /><path d="M862.20 595.24L869.40 595.24" stroke="#1c1c1c" stroke-width="0.95" /><path d="M862.20 602.39L869.40 602.39" stroke="#1c1c1c" stroke-width="0.95" /><path d="M862.20 609.53L869.40 609.53" stroke="#1c1c1c" stroke-width="0.95" /><path d="M862.20 616.67L869.40 616.67" stroke="#1c1c1c" stroke-width="0.95" /><path d="M862.20 623.82L869.40 623.82" stroke="#1c1c1c" stroke-width="0.95" /><path d="M862.20 630.96L869.40 630.96" stroke="#1c1c1c" stroke-width="0.95" /><path d="M862.20 638.11L869.40 638.11" stroke="#1c1c1c" stroke-width="0.95" /><path d="M862.20 512.25L862.20 720.00" stroke="#1c1c1c" stroke-width="1.25" /><path d="M869.40 512.25L869.40 720.00" stroke="#1c1c1c" stroke-width="1.25" /><text transform="translate(865.80 586.00) rotate(-90)" x="0" y="1.44" font-size="4" fill="#686868" text-anchor="start" textLength="63.00" lengthAdjust="spacingAndGlyphs">GEB01 ASP01 RLT01 ABL ABV 01 BM 01</text><text transform="translate(865.80 709.50) rotate(-90)" x="0" y="1.62" font-size="4.5" fill="#505050" text-anchor="start" textLength="33.78" lengthAdjust="spacingAndGlyphs">Operating message</text><text x="865.80" y="717.82" font-size="3.4" fill="#444" text-anchor="middle" textLength="4.60" lengthAdjust="spacingAndGlyphs">BI</text><text x="865.80" y="593.04" font-size="3.8" fill="#666" text-anchor="middle">1</text>
<path d="M869.40 512.25L876.60 512.25" stroke="#1c1c1c" stroke-width="1.25" /><path d="M869.40 595.24L876.60 595.24" stroke="#1c1c1c" stroke-width="0.95" /><path d="M869.40 602.39L876.60 602.39" stroke="#1c1c1c" stroke-width="0.95" /><path d="M869.40 609.53L876.60 609.53" stroke="#1c1c1c" stroke-width="0.95" /><path d="M869.40 616.67L876.60 616.67" stroke="#1c1c1c" stroke-width="0.95" /><path d="M869.40 623.82L876.60 623.82" stroke="#1c1c1c" stroke-width="0.95" /><path d="M869.40 630.96L876.60 630.96" stroke="#1c1c1c" stroke-width="0.95" /><path d="M869.40 638.11L876.60 638.11" stroke="#1c1c1c" stroke-width="0.95" /><path d="M869.40 512.25L869.40 720.00" stroke="#1c1c1c" stroke-width="1.25" /><path d="M876.60 512.25L876.60 720.00" stroke="#1c1c1c" stroke-width="1.25" /><text transform="translate(873.00 586.00) rotate(-90)" x="0" y="1.44" font-size="4" fill="#686868" text-anchor="start" textLength="63.00" lengthAdjust="spacingAndGlyphs">GEB01 ASP01 RLT01 ABL ABV 01 SM 01</text><text transform="translate(873.00 709.50) rotate(-90)" x="0" y="1.62" font-size="4.5" fill="#505050" text-anchor="start" textLength="25.38" lengthAdjust="spacingAndGlyphs">Fault message</text><text x="873.00" y="717.82" font-size="3.4" fill="#444" text-anchor="middle" textLength="4.60" lengthAdjust="spacingAndGlyphs">BI</text><text x="873.00" y="593.04" font-size="3.8" fill="#666" text-anchor="middle">1</text>
<path d="M876.60 512.25L883.80 512.25" stroke="#1c1c1c" stroke-width="1.25" /><path d="M876.60 595.24L883.80 595.24" stroke="#1c1c1c" stroke-width="0.95" /><path d="M876.60 602.39L883.80 602.39" stroke="#1c1c1c" stroke-width="0.95" /><path d="M876.60 609.53L883.80 609.53" stroke="#1c1c1c" stroke-width="0.95" /><path d="M876.60 616.67L883.80 616.67" stroke="#1c1c1c" stroke-width="0.95" /><path d="M876.60 623.82L883.80 623.82" stroke="#1c1c1c" stroke-width="0.95" /><path d="M876.60 630.96L883.80 630.96" stroke="#1c1c1c" stroke-width="0.95" /><path d="M876.60 638.11L883.80 638.11" stroke="#1c1c1c" stroke-width="0.95" /><path d="M876.60 512.25L876.60 720.00" stroke="#1c1c1c" stroke-width="1.25" /><path d="M883.80 512.25L883.80 720.00" stroke="#1c1c1c" stroke-width="1.25" /><text transform="translate(880.20 586.00) rotate(-90)" x="0" y="1.44" font-size="4" fill="#686868" text-anchor="start" textLength="63.00" lengthAdjust="spacingAndGlyphs">GEB01 ASP01 RLT01 ABL ABV 01 ST 01</text><text transform="translate(880.20 709.50) rotate(-90)" x="0" y="1.62" font-size="4.5" fill="#505050" text-anchor="start" textLength="24.31" lengthAdjust="spacingAndGlyphs">Control output</text><text x="880.20" y="717.82" font-size="3.4" fill="#444" text-anchor="middle" textLength="4.60" lengthAdjust="spacingAndGlyphs">AO</text><text x="880.20" y="614.47" font-size="3.8" fill="#666" text-anchor="middle">1</text>
<path d="M883.80 512.25L891.00 512.25" stroke="#1c1c1c" stroke-width="1.25" /><path d="M883.80 595.24L891.00 595.24" stroke="#1c1c1c" stroke-width="0.95" /><path d="M883.80 602.39L891.00 602.39" stroke="#1c1c1c" stroke-width="0.95" /><path d="M883.80 609.53L891.00 609.53" stroke="#1c1c1c" stroke-width="0.95" /><path d="M883.80 616.67L891.00 616.67" stroke="#1c1c1c" stroke-width="0.95" /><path d="M883.80 623.82L891.00 623.82" stroke="#1c1c1c" stroke-width="0.95" /><path d="M883.80 630.96L891.00 630.96" stroke="#1c1c1c" stroke-width="0.95" /><path d="M883.80 638.11L891.00 638.11" stroke="#1c1c1c" stroke-width="0.95" /><path d="M883.80 512.25L883.80 720.00" stroke="#1c1c1c" stroke-width="1.25" /><path d="M891.00 512.25L891.00 720.00" stroke="#1c1c1c" stroke-width="1.25" /><text transform="translate(887.40 586.00) rotate(-90)" x="0" y="1.44" font-size="4" fill="#686868" text-anchor="start" textLength="63.00" lengthAdjust="spacingAndGlyphs">GEB01 ASP01 RLT01 ABL ABV 01 HM 01</text><text transform="translate(887.40 709.50) rotate(-90)" x="0" y="1.62" font-size="4.5" fill="#505050" text-anchor="start" textLength="37.58" lengthAdjust="spacingAndGlyphs">Manual message LVB</text><text x="887.40" y="717.82" font-size="3.4" fill="#444" text-anchor="middle" textLength="4.60" lengthAdjust="spacingAndGlyphs">BI</text><text x="887.40" y="593.04" font-size="3.8" fill="#666" text-anchor="middle">1</text><text x="887.40" y="621.61" font-size="3.8" fill="#666" text-anchor="middle">x</text>
<path d="M891.00 720.00V512.25L894.90 509.75L896.50 509.75L900.40 512.25V720.00z" fill="#d9d9d9"/><path d="M891.00 512.25L894.90 509.75L896.50 509.75L900.40 512.25" stroke="#1c1c1c" stroke-width=".9" fill="none"/><path d="M891.00 512.25L891.00 720.00" stroke="#1c1c1c" stroke-width="1.25" /><path d="M900.40 512.25L900.40 720.00" stroke="#1c1c1c" stroke-width="1.25" /><text transform="translate(895.70 586.00) rotate(-90)" x="0" y="1.48" font-size="4.1" fill="#111" text-anchor="start" font-weight="bold" textLength="68.60" lengthAdjust="spacingAndGlyphs">GEB01_ASP01_RLT01_ANL_ANS 01</text><text transform="translate(895.70 709.50) rotate(-90)" x="0" y="1.66" font-size="4.6" fill="#111" text-anchor="start" font-weight="bold" textLength="23.62" lengthAdjust="spacingAndGlyphs">Plant switch</text><text transform="translate(895.70 719.50) rotate(-90)" x="0" y="1.15" font-size="3.2" fill="#7ab648" text-anchor="start" textLength="5.00" lengthAdjust="spacingAndGlyphs">DLA</text><text x="895.70" y="593.18" font-size="4.2" fill="#111" text-anchor="middle" font-weight="bold">3</text>
<path d="M900.40 512.25L907.60 512.25" stroke="#1c1c1c" stroke-width="1.25" /><path d="M900.40 595.24L907.60 595.24" stroke="#1c1c1c" stroke-width="0.95" /><path d="M900.40 602.39L907.60 602.39" stroke="#1c1c1c" stroke-width="0.95" /><path d="M900.40 609.53L907.60 609.53" stroke="#1c1c1c" stroke-width="0.95" /><path d="M900.40 616.67L907.60 616.67" stroke="#1c1c1c" stroke-width="0.95" /><path d="M900.40 623.82L907.60 623.82" stroke="#1c1c1c" stroke-width="0.95" /><path d="M900.40 630.96L907.60 630.96" stroke="#1c1c1c" stroke-width="0.95" /><path d="M900.40 638.11L907.60 638.11" stroke="#1c1c1c" stroke-width="0.95" /><path d="M900.40 512.25L900.40 720.00" stroke="#1c1c1c" stroke-width="1.25" /><path d="M907.60 512.25L907.60 720.00" stroke="#1c1c1c" stroke-width="1.25" /><text transform="translate(904.00 586.00) rotate(-90)" x="0" y="1.44" font-size="4" fill="#686868" text-anchor="start" textLength="63.00" lengthAdjust="spacingAndGlyphs">GEB01 ASP01 RLT01 ANL ANS 01 RM 04</text><text transform="translate(904.00 709.50) rotate(-90)" x="0" y="1.62" font-size="4.5" fill="#505050" text-anchor="start" textLength="21.94" lengthAdjust="spacingAndGlyphs">Message On</text><text x="904.00" y="717.82" font-size="3.4" fill="#444" text-anchor="middle" textLength="4.60" lengthAdjust="spacingAndGlyphs">BI</text><text x="904.00" y="593.04" font-size="3.8" fill="#666" text-anchor="middle">1</text>
<path d="M907.60 512.25L914.80 512.25" stroke="#1c1c1c" stroke-width="1.25" /><path d="M907.60 595.24L914.80 595.24" stroke="#1c1c1c" stroke-width="0.95" /><path d="M907.60 602.39L914.80 602.39" stroke="#1c1c1c" stroke-width="0.95" /><path d="M907.60 609.53L914.80 609.53" stroke="#1c1c1c" stroke-width="0.95" /><path d="M907.60 616.67L914.80 616.67" stroke="#1c1c1c" stroke-width="0.95" /><path d="M907.60 623.82L914.80 623.82" stroke="#1c1c1c" stroke-width="0.95" /><path d="M907.60 630.96L914.80 630.96" stroke="#1c1c1c" stroke-width="0.95" /><path d="M907.60 638.11L914.80 638.11" stroke="#1c1c1c" stroke-width="0.95" /><path d="M907.60 512.25L907.60 720.00" stroke="#1c1c1c" stroke-width="1.25" /><path d="M914.80 512.25L914.80 720.00" stroke="#1c1c1c" stroke-width="1.25" /><text transform="translate(911.20 586.00) rotate(-90)" x="0" y="1.44" font-size="4" fill="#686868" text-anchor="start" textLength="63.00" lengthAdjust="spacingAndGlyphs">GEB01 ASP01 RLT01 ANL ANS 01 RM 05</text><text transform="translate(911.20 709.50) rotate(-90)" x="0" y="1.62" font-size="4.5" fill="#505050" text-anchor="start" textLength="24.53" lengthAdjust="spacingAndGlyphs">Message Auto</text><text x="911.20" y="717.82" font-size="3.4" fill="#444" text-anchor="middle" textLength="4.60" lengthAdjust="spacingAndGlyphs">BI</text><text x="911.20" y="593.04" font-size="3.8" fill="#666" text-anchor="middle">1</text>
<path d="M914.80 512.25L922.00 512.25" stroke="#1c1c1c" stroke-width="1.25" /><path d="M914.80 595.24L922.00 595.24" stroke="#1c1c1c" stroke-width="0.95" /><path d="M914.80 602.39L922.00 602.39" stroke="#1c1c1c" stroke-width="0.95" /><path d="M914.80 609.53L922.00 609.53" stroke="#1c1c1c" stroke-width="0.95" /><path d="M914.80 616.67L922.00 616.67" stroke="#1c1c1c" stroke-width="0.95" /><path d="M914.80 623.82L922.00 623.82" stroke="#1c1c1c" stroke-width="0.95" /><path d="M914.80 630.96L922.00 630.96" stroke="#1c1c1c" stroke-width="0.95" /><path d="M914.80 638.11L922.00 638.11" stroke="#1c1c1c" stroke-width="0.95" /><path d="M914.80 512.25L914.80 720.00" stroke="#1c1c1c" stroke-width="1.25" /><path d="M922.00 512.25L922.00 720.00" stroke="#1c1c1c" stroke-width="1.25" /><text transform="translate(918.40 586.00) rotate(-90)" x="0" y="1.44" font-size="4" fill="#686868" text-anchor="start" textLength="63.00" lengthAdjust="spacingAndGlyphs">GEB01 ASP01 RLT01 ANL ANS 01 RM 06</text><text transform="translate(918.40 709.50) rotate(-90)" x="0" y="1.62" font-size="4.5" fill="#505050" text-anchor="start" textLength="21.87" lengthAdjust="spacingAndGlyphs">Message Off</text><text x="918.40" y="717.82" font-size="3.4" fill="#444" text-anchor="middle" textLength="4.60" lengthAdjust="spacingAndGlyphs">BI</text><text x="918.40" y="593.04" font-size="3.8" fill="#666" text-anchor="middle">1</text>
<path d="M922.00 720.00V512.25L925.90 509.75L927.50 509.75L931.40 512.25V720.00z" fill="#d9d9d9"/><path d="M922.00 512.25L925.90 509.75L927.50 509.75L931.40 512.25" stroke="#1c1c1c" stroke-width=".9" fill="none"/><path d="M922.00 512.25L922.00 720.00" stroke="#1c1c1c" stroke-width="1.25" /><path d="M931.40 512.25L931.40 720.00" stroke="#1c1c1c" stroke-width="1.25" /><text transform="translate(926.70 586.00) rotate(-90)" x="0" y="1.48" font-size="4.1" fill="#111" text-anchor="start" font-weight="bold" textLength="68.60" lengthAdjust="spacingAndGlyphs">GEB01_ASP01_RLT01_ANL_BMA 01</text><text transform="translate(926.70 709.50) rotate(-90)" x="0" y="1.66" font-size="4.6" fill="#111" text-anchor="start" font-weight="bold" textLength="55.11" lengthAdjust="spacingAndGlyphs">Fire alarm system Shutdown</text><text transform="translate(926.70 719.50) rotate(-90)" x="0" y="1.15" font-size="3.2" fill="#7ab648" text-anchor="start" textLength="5.00" lengthAdjust="spacingAndGlyphs">DLA</text><text x="926.70" y="593.18" font-size="4.2" fill="#111" text-anchor="middle" font-weight="bold">1</text>
<path d="M931.40 512.25L938.60 512.25" stroke="#1c1c1c" stroke-width="1.25" /><path d="M931.40 595.24L938.60 595.24" stroke="#1c1c1c" stroke-width="0.95" /><path d="M931.40 602.39L938.60 602.39" stroke="#1c1c1c" stroke-width="0.95" /><path d="M931.40 609.53L938.60 609.53" stroke="#1c1c1c" stroke-width="0.95" /><path d="M931.40 616.67L938.60 616.67" stroke="#1c1c1c" stroke-width="0.95" /><path d="M931.40 623.82L938.60 623.82" stroke="#1c1c1c" stroke-width="0.95" /><path d="M931.40 630.96L938.60 630.96" stroke="#1c1c1c" stroke-width="0.95" /><path d="M931.40 638.11L938.60 638.11" stroke="#1c1c1c" stroke-width="0.95" /><path d="M931.40 512.25L931.40 720.00" stroke="#1c1c1c" stroke-width="1.25" /><path d="M938.60 512.25L938.60 720.00" stroke="#1c1c1c" stroke-width="1.25" /><text transform="translate(935.00 586.00) rotate(-90)" x="0" y="1.44" font-size="4" fill="#686868" text-anchor="start" textLength="63.00" lengthAdjust="spacingAndGlyphs">GEB01 ASP01 RLT01 ANL BMA 01 RM 01</text><text transform="translate(935.00 709.50) rotate(-90)" x="0" y="1.62" font-size="4.5" fill="#505050" text-anchor="start" textLength="32.06" lengthAdjust="spacingAndGlyphs">Message triggered</text><text x="935.00" y="717.82" font-size="3.4" fill="#444" text-anchor="middle" textLength="4.60" lengthAdjust="spacingAndGlyphs">BI</text><text x="935.00" y="593.04" font-size="3.8" fill="#666" text-anchor="middle">1</text>
<path d="M938.60 720.00V512.25L942.50 509.75L944.10 509.75L948.00 512.25V720.00z" fill="#d9d9d9"/><path d="M938.60 512.25L942.50 509.75L944.10 509.75L948.00 512.25" stroke="#1c1c1c" stroke-width=".9" fill="none"/><path d="M938.60 512.25L938.60 720.00" stroke="#1c1c1c" stroke-width="1.25" /><path d="M948.00 512.25L948.00 720.00" stroke="#1c1c1c" stroke-width="1.25" /><text transform="translate(943.30 586.00) rotate(-90)" x="0" y="1.48" font-size="4.1" fill="#111" text-anchor="start" font-weight="bold" textLength="68.60" lengthAdjust="spacingAndGlyphs">GEB01_ASP01_RLT01_ABL_BSK 01</text><text transform="translate(943.30 709.50) rotate(-90)" x="0" y="1.66" font-size="4.6" fill="#111" text-anchor="start" font-weight="bold" textLength="38.92" lengthAdjust="spacingAndGlyphs">Fire damper thermal</text><text transform="translate(943.30 719.50) rotate(-90)" x="0" y="1.15" font-size="3.2" fill="#7ab648" text-anchor="start" textLength="5.00" lengthAdjust="spacingAndGlyphs">DLA</text><text x="943.30" y="593.18" font-size="4.2" fill="#111" text-anchor="middle" font-weight="bold">1</text>
<path d="M948.00 512.25L955.20 512.25" stroke="#1c1c1c" stroke-width="1.25" /><path d="M948.00 595.24L955.20 595.24" stroke="#1c1c1c" stroke-width="0.95" /><path d="M948.00 602.39L955.20 602.39" stroke="#1c1c1c" stroke-width="0.95" /><path d="M948.00 609.53L955.20 609.53" stroke="#1c1c1c" stroke-width="0.95" /><path d="M948.00 616.67L955.20 616.67" stroke="#1c1c1c" stroke-width="0.95" /><path d="M948.00 623.82L955.20 623.82" stroke="#1c1c1c" stroke-width="0.95" /><path d="M948.00 630.96L955.20 630.96" stroke="#1c1c1c" stroke-width="0.95" /><path d="M948.00 638.11L955.20 638.11" stroke="#1c1c1c" stroke-width="0.95" /><path d="M948.00 512.25L948.00 720.00" stroke="#1c1c1c" stroke-width="1.25" /><path d="M955.20 512.25L955.20 720.00" stroke="#1c1c1c" stroke-width="1.25" /><text transform="translate(951.60 586.00) rotate(-90)" x="0" y="1.44" font-size="4" fill="#686868" text-anchor="start" textLength="63.00" lengthAdjust="spacingAndGlyphs">GEB01 ASP01 RLT01 ABL BSK 01 RM 03</text><text transform="translate(951.60 709.50) rotate(-90)" x="0" y="1.62" font-size="4.5" fill="#505050" text-anchor="start" textLength="28.83" lengthAdjust="spacingAndGlyphs">Message Closed</text><text x="951.60" y="717.82" font-size="3.4" fill="#444" text-anchor="middle" textLength="4.60" lengthAdjust="spacingAndGlyphs">BI</text><text x="951.60" y="593.04" font-size="3.8" fill="#666" text-anchor="middle">1</text>
<path d="M955.20 720.00V512.25L959.10 509.75L960.70 509.75L964.60 512.25V720.00z" fill="#d9d9d9"/><path d="M955.20 512.25L959.10 509.75L960.70 509.75L964.60 512.25" stroke="#1c1c1c" stroke-width=".9" fill="none"/><path d="M955.20 512.25L955.20 720.00" stroke="#1c1c1c" stroke-width="1.25" /><path d="M964.60 512.25L964.60 720.00" stroke="#1c1c1c" stroke-width="1.25" /><text transform="translate(959.90 586.00) rotate(-90)" x="0" y="1.48" font-size="4.1" fill="#111" text-anchor="start" font-weight="bold" textLength="68.60" lengthAdjust="spacingAndGlyphs">GEB01_ASP01_RLT01_ZUL_BSK 02</text><text transform="translate(959.90 709.50) rotate(-90)" x="0" y="1.66" font-size="4.6" fill="#111" text-anchor="start" font-weight="bold" textLength="38.92" lengthAdjust="spacingAndGlyphs">Fire damper thermal</text><text transform="translate(959.90 719.50) rotate(-90)" x="0" y="1.15" font-size="3.2" fill="#7ab648" text-anchor="start" textLength="5.00" lengthAdjust="spacingAndGlyphs">DLA</text><text x="959.90" y="593.18" font-size="4.2" fill="#111" text-anchor="middle" font-weight="bold">1</text>
<path d="M964.60 512.25L971.80 512.25" stroke="#1c1c1c" stroke-width="1.25" /><path d="M964.60 595.24L971.80 595.24" stroke="#1c1c1c" stroke-width="0.95" /><path d="M964.60 602.39L971.80 602.39" stroke="#1c1c1c" stroke-width="0.95" /><path d="M964.60 609.53L971.80 609.53" stroke="#1c1c1c" stroke-width="0.95" /><path d="M964.60 616.67L971.80 616.67" stroke="#1c1c1c" stroke-width="0.95" /><path d="M964.60 623.82L971.80 623.82" stroke="#1c1c1c" stroke-width="0.95" /><path d="M964.60 630.96L971.80 630.96" stroke="#1c1c1c" stroke-width="0.95" /><path d="M964.60 638.11L971.80 638.11" stroke="#1c1c1c" stroke-width="0.95" /><path d="M964.60 512.25L964.60 720.00" stroke="#1c1c1c" stroke-width="1.25" /><path d="M971.80 512.25L971.80 720.00" stroke="#1c1c1c" stroke-width="1.25" /><text transform="translate(968.20 586.00) rotate(-90)" x="0" y="1.44" font-size="4" fill="#686868" text-anchor="start" textLength="63.00" lengthAdjust="spacingAndGlyphs">GEB01 ASP01 RLT01 ZUL BSK 02 RM 03</text><text transform="translate(968.20 709.50) rotate(-90)" x="0" y="1.62" font-size="4.5" fill="#505050" text-anchor="start" textLength="28.83" lengthAdjust="spacingAndGlyphs">Message Closed</text><text x="968.20" y="717.82" font-size="3.4" fill="#444" text-anchor="middle" textLength="4.60" lengthAdjust="spacingAndGlyphs">BI</text><text x="968.20" y="593.04" font-size="3.8" fill="#666" text-anchor="middle">1</text>
<path d="M971.80 720.00V512.25L975.70 509.75L977.30 509.75L981.20 512.25V720.00z" fill="#d9d9d9"/><path d="M971.80 512.25L975.70 509.75L977.30 509.75L981.20 512.25" stroke="#1c1c1c" stroke-width=".9" fill="none"/><path d="M971.80 512.25L971.80 720.00" stroke="#1c1c1c" stroke-width="1.25" /><path d="M981.20 512.25L981.20 720.00" stroke="#1c1c1c" stroke-width="1.25" /><text transform="translate(976.50 586.00) rotate(-90)" x="0" y="1.48" font-size="4.1" fill="#111" text-anchor="start" font-weight="bold" textLength="68.60" lengthAdjust="spacingAndGlyphs">GEB01_ASP01_RLT01_RAU_BTQ 01</text><text transform="translate(976.50 709.50) rotate(-90)" x="0" y="1.66" font-size="4.6" fill="#111" text-anchor="start" font-weight="bold" textLength="44.31" lengthAdjust="spacingAndGlyphs">Air quality/temperature</text><text transform="translate(976.50 719.50) rotate(-90)" x="0" y="1.15" font-size="3.2" fill="#7ab648" text-anchor="start" textLength="5.00" lengthAdjust="spacingAndGlyphs">DLA</text><text x="976.50" y="607.47" font-size="4.2" fill="#111" text-anchor="middle" font-weight="bold">2</text>
<path d="M981.20 512.25L988.40 512.25" stroke="#1c1c1c" stroke-width="1.25" /><path d="M981.20 595.24L988.40 595.24" stroke="#1c1c1c" stroke-width="0.95" /><path d="M981.20 602.39L988.40 602.39" stroke="#1c1c1c" stroke-width="0.95" /><path d="M981.20 609.53L988.40 609.53" stroke="#1c1c1c" stroke-width="0.95" /><path d="M981.20 616.67L988.40 616.67" stroke="#1c1c1c" stroke-width="0.95" /><path d="M981.20 623.82L988.40 623.82" stroke="#1c1c1c" stroke-width="0.95" /><path d="M981.20 630.96L988.40 630.96" stroke="#1c1c1c" stroke-width="0.95" /><path d="M981.20 638.11L988.40 638.11" stroke="#1c1c1c" stroke-width="0.95" /><path d="M981.20 512.25L981.20 720.00" stroke="#1c1c1c" stroke-width="1.25" /><path d="M988.40 512.25L988.40 720.00" stroke="#1c1c1c" stroke-width="1.25" /><text transform="translate(984.80 586.00) rotate(-90)" x="0" y="1.44" font-size="4" fill="#686868" text-anchor="start" textLength="63.00" lengthAdjust="spacingAndGlyphs">GEB01 ASP01 RLT01 RAU BTQ 01 MW 01</text><text transform="translate(984.80 709.50) rotate(-90)" x="0" y="1.62" font-size="4.5" fill="#505050" text-anchor="start" textLength="27.75" lengthAdjust="spacingAndGlyphs">MV temperature</text><text x="984.80" y="717.82" font-size="3.4" fill="#444" text-anchor="middle" textLength="4.60" lengthAdjust="spacingAndGlyphs">AI</text><text x="984.80" y="607.33" font-size="3.8" fill="#666" text-anchor="middle">1</text>
<path d="M988.40 512.25L995.60 512.25" stroke="#1c1c1c" stroke-width="1.25" /><path d="M988.40 595.24L995.60 595.24" stroke="#1c1c1c" stroke-width="0.95" /><path d="M988.40 602.39L995.60 602.39" stroke="#1c1c1c" stroke-width="0.95" /><path d="M988.40 609.53L995.60 609.53" stroke="#1c1c1c" stroke-width="0.95" /><path d="M988.40 616.67L995.60 616.67" stroke="#1c1c1c" stroke-width="0.95" /><path d="M988.40 623.82L995.60 623.82" stroke="#1c1c1c" stroke-width="0.95" /><path d="M988.40 630.96L995.60 630.96" stroke="#1c1c1c" stroke-width="0.95" /><path d="M988.40 638.11L995.60 638.11" stroke="#1c1c1c" stroke-width="0.95" /><path d="M988.40 512.25L988.40 720.00" stroke="#1c1c1c" stroke-width="1.25" /><path d="M995.60 512.25L995.60 720.00" stroke="#1c1c1c" stroke-width="1.25" /><text transform="translate(992.00 586.00) rotate(-90)" x="0" y="1.44" font-size="4" fill="#686868" text-anchor="start" textLength="63.00" lengthAdjust="spacingAndGlyphs">GEB01 ASP01 RLT01 RAU BTQ 01 MW 02</text><text transform="translate(992.00 709.50) rotate(-90)" x="0" y="1.62" font-size="4.5" fill="#505050" text-anchor="start" textLength="23.44" lengthAdjust="spacingAndGlyphs">MV air quality</text><text x="992.00" y="717.82" font-size="3.4" fill="#444" text-anchor="middle" textLength="4.60" lengthAdjust="spacingAndGlyphs">AI</text><text x="992.00" y="607.33" font-size="3.8" fill="#666" text-anchor="middle">1</text>
<path d="M995.60 720.00V512.25L999.50 509.75L1001.10 509.75L1005.00 512.25V720.00z" fill="#d9d9d9"/><path d="M995.60 512.25L999.50 509.75L1001.10 509.75L1005.00 512.25" stroke="#1c1c1c" stroke-width=".9" fill="none"/><path d="M995.60 512.25L995.60 720.00" stroke="#1c1c1c" stroke-width="1.25" /><path d="M1005.00 512.25L1005.00 720.00" stroke="#1c1c1c" stroke-width="1.25" /><text transform="translate(1000.30 586.00) rotate(-90)" x="0" y="1.48" font-size="4.1" fill="#111" text-anchor="start" font-weight="bold" textLength="68.60" lengthAdjust="spacingAndGlyphs">GEB01_ASP01_RLT01_WLH_FSW 01</text><text transform="translate(1000.30 709.50) rotate(-90)" x="0" y="1.66" font-size="4.6" fill="#111" text-anchor="start" font-weight="bold" textLength="53.07" lengthAdjust="spacingAndGlyphs">Frost protection thermostat</text><text transform="translate(1000.30 719.50) rotate(-90)" x="0" y="1.15" font-size="3.2" fill="#7ab648" text-anchor="start" textLength="5.00" lengthAdjust="spacingAndGlyphs">DLA</text><text x="1000.30" y="593.18" font-size="4.2" fill="#111" text-anchor="middle" font-weight="bold">1</text>
<path d="M1005.00 512.25L1012.20 512.25" stroke="#1c1c1c" stroke-width="1.25" /><path d="M1005.00 595.24L1012.20 595.24" stroke="#1c1c1c" stroke-width="0.95" /><path d="M1005.00 602.39L1012.20 602.39" stroke="#1c1c1c" stroke-width="0.95" /><path d="M1005.00 609.53L1012.20 609.53" stroke="#1c1c1c" stroke-width="0.95" /><path d="M1005.00 616.67L1012.20 616.67" stroke="#1c1c1c" stroke-width="0.95" /><path d="M1005.00 623.82L1012.20 623.82" stroke="#1c1c1c" stroke-width="0.95" /><path d="M1005.00 630.96L1012.20 630.96" stroke="#1c1c1c" stroke-width="0.95" /><path d="M1005.00 638.11L1012.20 638.11" stroke="#1c1c1c" stroke-width="0.95" /><path d="M1005.00 512.25L1005.00 720.00" stroke="#1c1c1c" stroke-width="1.25" /><path d="M1012.20 512.25L1012.20 720.00" stroke="#1c1c1c" stroke-width="1.25" /><text transform="translate(1008.60 586.00) rotate(-90)" x="0" y="1.44" font-size="4" fill="#686868" text-anchor="start" textLength="63.00" lengthAdjust="spacingAndGlyphs">GEB01 ASP01 RLT01 WLH FSW 01 SM 01</text><text transform="translate(1008.60 709.50) rotate(-90)" x="0" y="1.62" font-size="4.5" fill="#505050" text-anchor="start" textLength="33.77" lengthAdjust="spacingAndGlyphs">SM Frost protection</text><text x="1008.60" y="717.82" font-size="3.4" fill="#444" text-anchor="middle" textLength="4.60" lengthAdjust="spacingAndGlyphs">BI</text><text x="1008.60" y="593.04" font-size="3.8" fill="#666" text-anchor="middle">1</text>
<path d="M1012.20 720.00V512.25L1016.10 509.75L1017.70 509.75L1021.60 512.25V720.00z" fill="#d9d9d9"/><path d="M1012.20 512.25L1016.10 509.75L1017.70 509.75L1021.60 512.25" stroke="#1c1c1c" stroke-width=".9" fill="none"/><path d="M1012.20 512.25L1012.20 720.00" stroke="#1c1c1c" stroke-width="1.25" /><path d="M1021.60 512.25L1021.60 720.00" stroke="#1c1c1c" stroke-width="1.25" /><text transform="translate(1016.90 586.00) rotate(-90)" x="0" y="1.48" font-size="4.1" fill="#111" text-anchor="start" font-weight="bold" textLength="68.60" lengthAdjust="spacingAndGlyphs">GEB01_ASP01_RLT01_AUL_LFI 01</text><text transform="translate(1016.90 709.50) rotate(-90)" x="0" y="1.66" font-size="4.6" fill="#111" text-anchor="start" font-weight="bold" textLength="55.32" lengthAdjust="spacingAndGlyphs">Filter monitoring Outdoor air</text><text transform="translate(1016.90 719.50) rotate(-90)" x="0" y="1.15" font-size="3.2" fill="#7ab648" text-anchor="start" textLength="5.00" lengthAdjust="spacingAndGlyphs">DLA</text><text x="1016.90" y="593.18" font-size="4.2" fill="#111" text-anchor="middle" font-weight="bold">1</text>
<path d="M1021.60 512.25L1028.80 512.25" stroke="#1c1c1c" stroke-width="1.25" /><path d="M1021.60 595.24L1028.80 595.24" stroke="#1c1c1c" stroke-width="0.95" /><path d="M1021.60 602.39L1028.80 602.39" stroke="#1c1c1c" stroke-width="0.95" /><path d="M1021.60 609.53L1028.80 609.53" stroke="#1c1c1c" stroke-width="0.95" /><path d="M1021.60 616.67L1028.80 616.67" stroke="#1c1c1c" stroke-width="0.95" /><path d="M1021.60 623.82L1028.80 623.82" stroke="#1c1c1c" stroke-width="0.95" /><path d="M1021.60 630.96L1028.80 630.96" stroke="#1c1c1c" stroke-width="0.95" /><path d="M1021.60 638.11L1028.80 638.11" stroke="#1c1c1c" stroke-width="0.95" /><path d="M1021.60 512.25L1021.60 720.00" stroke="#1c1c1c" stroke-width="1.25" /><path d="M1028.80 512.25L1028.80 720.00" stroke="#1c1c1c" stroke-width="1.25" /><text transform="translate(1025.20 586.00) rotate(-90)" x="0" y="1.44" font-size="4" fill="#686868" text-anchor="start" textLength="63.00" lengthAdjust="spacingAndGlyphs">GEB01 ASP01 RLT01 AUL LFI 01 WM 01</text><text transform="translate(1025.20 709.50) rotate(-90)" x="0" y="1.62" font-size="4.5" fill="#505050" text-anchor="start" textLength="38.94" lengthAdjust="spacingAndGlyphs">Message Maintenance</text><text x="1025.20" y="717.82" font-size="3.4" fill="#444" text-anchor="middle" textLength="4.60" lengthAdjust="spacingAndGlyphs">BI</text><text x="1025.20" y="593.04" font-size="3.8" fill="#666" text-anchor="middle">1</text>
<path d="M1028.80 720.00V512.25L1032.70 509.75L1034.30 509.75L1038.20 512.25V720.00z" fill="#d9d9d9"/><path d="M1028.80 512.25L1032.70 509.75L1034.30 509.75L1038.20 512.25" stroke="#1c1c1c" stroke-width=".9" fill="none"/><path d="M1028.80 512.25L1028.80 720.00" stroke="#1c1c1c" stroke-width="1.25" /><path d="M1038.20 512.25L1038.20 720.00" stroke="#1c1c1c" stroke-width="1.25" /><text transform="translate(1033.50 586.00) rotate(-90)" x="0" y="1.48" font-size="4.1" fill="#111" text-anchor="start" font-weight="bold" textLength="68.60" lengthAdjust="spacingAndGlyphs">GEB01_ASP01_RLT01_ABL_LFI 02</text><text transform="translate(1033.50 709.50) rotate(-90)" x="0" y="1.66" font-size="4.6" fill="#111" text-anchor="start" font-weight="bold" textLength="52.85" lengthAdjust="spacingAndGlyphs">Filter monitoring Supply air</text><text transform="translate(1033.50 719.50) rotate(-90)" x="0" y="1.15" font-size="3.2" fill="#7ab648" text-anchor="start" textLength="5.00" lengthAdjust="spacingAndGlyphs">DLA</text><text x="1033.50" y="593.18" font-size="4.2" fill="#111" text-anchor="middle" font-weight="bold">1</text>
<path d="M1038.20 512.25L1045.40 512.25" stroke="#1c1c1c" stroke-width="1.25" /><path d="M1038.20 595.24L1045.40 595.24" stroke="#1c1c1c" stroke-width="0.95" /><path d="M1038.20 602.39L1045.40 602.39" stroke="#1c1c1c" stroke-width="0.95" /><path d="M1038.20 609.53L1045.40 609.53" stroke="#1c1c1c" stroke-width="0.95" /><path d="M1038.20 616.67L1045.40 616.67" stroke="#1c1c1c" stroke-width="0.95" /><path d="M1038.20 623.82L1045.40 623.82" stroke="#1c1c1c" stroke-width="0.95" /><path d="M1038.20 630.96L1045.40 630.96" stroke="#1c1c1c" stroke-width="0.95" /><path d="M1038.20 638.11L1045.40 638.11" stroke="#1c1c1c" stroke-width="0.95" /><path d="M1038.20 512.25L1038.20 720.00" stroke="#1c1c1c" stroke-width="1.25" /><path d="M1045.40 512.25L1045.40 720.00" stroke="#1c1c1c" stroke-width="1.25" /><text transform="translate(1041.80 586.00) rotate(-90)" x="0" y="1.44" font-size="4" fill="#686868" text-anchor="start" textLength="63.00" lengthAdjust="spacingAndGlyphs">GEB01 ASP01 RLT01 ABL LFI 02 WM 01</text><text transform="translate(1041.80 709.50) rotate(-90)" x="0" y="1.62" font-size="4.5" fill="#505050" text-anchor="start" textLength="38.94" lengthAdjust="spacingAndGlyphs">Message Maintenance</text><text x="1041.80" y="717.82" font-size="3.4" fill="#444" text-anchor="middle" textLength="4.60" lengthAdjust="spacingAndGlyphs">BI</text><text x="1041.80" y="593.04" font-size="3.8" fill="#666" text-anchor="middle">1</text>
<path d="M1045.40 720.00V512.25L1049.30 509.75L1050.90 509.75L1054.80 512.25V720.00z" fill="#d9d9d9"/><path d="M1045.40 512.25L1049.30 509.75L1050.90 509.75L1054.80 512.25" stroke="#1c1c1c" stroke-width=".9" fill="none"/><path d="M1045.40 512.25L1045.40 720.00" stroke="#1c1c1c" stroke-width="1.25" /><path d="M1054.80 512.25L1054.80 720.00" stroke="#1c1c1c" stroke-width="1.25" /><text transform="translate(1050.10 586.00) rotate(-90)" x="0" y="1.48" font-size="4.1" fill="#111" text-anchor="start" font-weight="bold" textLength="68.60" lengthAdjust="spacingAndGlyphs">GEB01_ASP01_RLT01_ZUL_LFI 03</text><text transform="translate(1050.10 709.50) rotate(-90)" x="0" y="1.66" font-size="4.6" fill="#111" text-anchor="start" font-weight="bold" textLength="52.63" lengthAdjust="spacingAndGlyphs">Filter monitoring extract air</text><text transform="translate(1050.10 719.50) rotate(-90)" x="0" y="1.15" font-size="3.2" fill="#7ab648" text-anchor="start" textLength="5.00" lengthAdjust="spacingAndGlyphs">DLA</text><text x="1050.10" y="593.18" font-size="4.2" fill="#111" text-anchor="middle" font-weight="bold">1</text>
<path d="M1054.80 512.25L1062.00 512.25" stroke="#1c1c1c" stroke-width="1.25" /><path d="M1054.80 595.24L1062.00 595.24" stroke="#1c1c1c" stroke-width="0.95" /><path d="M1054.80 602.39L1062.00 602.39" stroke="#1c1c1c" stroke-width="0.95" /><path d="M1054.80 609.53L1062.00 609.53" stroke="#1c1c1c" stroke-width="0.95" /><path d="M1054.80 616.67L1062.00 616.67" stroke="#1c1c1c" stroke-width="0.95" /><path d="M1054.80 623.82L1062.00 623.82" stroke="#1c1c1c" stroke-width="0.95" /><path d="M1054.80 630.96L1062.00 630.96" stroke="#1c1c1c" stroke-width="0.95" /><path d="M1054.80 638.11L1062.00 638.11" stroke="#1c1c1c" stroke-width="0.95" /><path d="M1054.80 512.25L1054.80 720.00" stroke="#1c1c1c" stroke-width="1.25" /><path d="M1062.00 512.25L1062.00 720.00" stroke="#1c1c1c" stroke-width="1.25" /><text transform="translate(1058.40 586.00) rotate(-90)" x="0" y="1.44" font-size="4" fill="#686868" text-anchor="start" textLength="63.00" lengthAdjust="spacingAndGlyphs">GEB01 ASP01 RLT01 ZUL LFI 03 WM 01</text><text transform="translate(1058.40 709.50) rotate(-90)" x="0" y="1.62" font-size="4.5" fill="#505050" text-anchor="start" textLength="38.94" lengthAdjust="spacingAndGlyphs">Message Maintenance</text><text x="1058.40" y="717.82" font-size="3.4" fill="#444" text-anchor="middle" textLength="4.60" lengthAdjust="spacingAndGlyphs">BI</text><text x="1058.40" y="593.04" font-size="3.8" fill="#666" text-anchor="middle">1</text>
<path d="M1062.00 720.00V512.25L1065.90 509.75L1067.50 509.75L1071.40 512.25V720.00z" fill="#d9d9d9"/><path d="M1062.00 512.25L1065.90 509.75L1067.50 509.75L1071.40 512.25" stroke="#1c1c1c" stroke-width=".9" fill="none"/><path d="M1062.00 512.25L1062.00 720.00" stroke="#1c1c1c" stroke-width="1.25" /><path d="M1071.40 512.25L1071.40 720.00" stroke="#1c1c1c" stroke-width="1.25" /><text transform="translate(1066.70 586.00) rotate(-90)" x="0" y="1.48" font-size="4.1" fill="#111" text-anchor="start" font-weight="bold" textLength="68.60" lengthAdjust="spacingAndGlyphs">GEB01_ASP01_RLT01_FOL_LKA 01</text><text transform="translate(1066.70 709.50) rotate(-90)" x="0" y="1.66" font-size="4.6" fill="#111" text-anchor="start" font-weight="bold" textLength="52.64" lengthAdjust="spacingAndGlyphs">Air damper\O/C\Exhaust air</text><text transform="translate(1066.70 719.50) rotate(-90)" x="0" y="1.15" font-size="3.2" fill="#7ab648" text-anchor="start" textLength="5.00" lengthAdjust="spacingAndGlyphs">DLA</text><text x="1066.70" y="593.18" font-size="4.2" fill="#111" text-anchor="middle" font-weight="bold">3</text><text x="1066.70" y="600.33" font-size="4.2" fill="#111" text-anchor="middle" font-weight="bold">1</text>
<path d="M1071.40 512.25L1078.60 512.25" stroke="#1c1c1c" stroke-width="1.25" /><path d="M1071.40 595.24L1078.60 595.24" stroke="#1c1c1c" stroke-width="0.95" /><path d="M1071.40 602.39L1078.60 602.39" stroke="#1c1c1c" stroke-width="0.95" /><path d="M1071.40 609.53L1078.60 609.53" stroke="#1c1c1c" stroke-width="0.95" /><path d="M1071.40 616.67L1078.60 616.67" stroke="#1c1c1c" stroke-width="0.95" /><path d="M1071.40 623.82L1078.60 623.82" stroke="#1c1c1c" stroke-width="0.95" /><path d="M1071.40 630.96L1078.60 630.96" stroke="#1c1c1c" stroke-width="0.95" /><path d="M1071.40 638.11L1078.60 638.11" stroke="#1c1c1c" stroke-width="0.95" /><path d="M1071.40 512.25L1071.40 720.00" stroke="#1c1c1c" stroke-width="1.25" /><path d="M1078.60 512.25L1078.60 720.00" stroke="#1c1c1c" stroke-width="1.25" /><text transform="translate(1075.00 586.00) rotate(-90)" x="0" y="1.44" font-size="4" fill="#686868" text-anchor="start" textLength="63.00" lengthAdjust="spacingAndGlyphs">GEB01 ASP01 RLT01 FOL LKA 01 SB 01</text><text transform="translate(1075.00 709.50) rotate(-90)" x="0" y="1.62" font-size="4.5" fill="#505050" text-anchor="start" textLength="28.40" lengthAdjust="spacingAndGlyphs">Switching output</text><text x="1075.00" y="717.82" font-size="3.4" fill="#444" text-anchor="middle" textLength="4.60" lengthAdjust="spacingAndGlyphs">BO</text><text x="1075.00" y="600.18" font-size="3.8" fill="#666" text-anchor="middle">1</text>
<path d="M1078.60 512.25L1085.80 512.25" stroke="#1c1c1c" stroke-width="1.25" /><path d="M1078.60 595.24L1085.80 595.24" stroke="#1c1c1c" stroke-width="0.95" /><path d="M1078.60 602.39L1085.80 602.39" stroke="#1c1c1c" stroke-width="0.95" /><path d="M1078.60 609.53L1085.80 609.53" stroke="#1c1c1c" stroke-width="0.95" /><path d="M1078.60 616.67L1085.80 616.67" stroke="#1c1c1c" stroke-width="0.95" /><path d="M1078.60 623.82L1085.80 623.82" stroke="#1c1c1c" stroke-width="0.95" /><path d="M1078.60 630.96L1085.80 630.96" stroke="#1c1c1c" stroke-width="0.95" /><path d="M1078.60 638.11L1085.80 638.11" stroke="#1c1c1c" stroke-width="0.95" /><path d="M1078.60 512.25L1078.60 720.00" stroke="#1c1c1c" stroke-width="1.25" /><path d="M1085.80 512.25L1085.80 720.00" stroke="#1c1c1c" stroke-width="1.25" /><text transform="translate(1082.20 586.00) rotate(-90)" x="0" y="1.44" font-size="4" fill="#686868" text-anchor="start" textLength="63.00" lengthAdjust="spacingAndGlyphs">GEB01 ASP01 RLT01 FOL LKA 01 RM 03</text><text transform="translate(1082.20 709.50) rotate(-90)" x="0" y="1.62" font-size="4.5" fill="#505050" text-anchor="start" textLength="28.83" lengthAdjust="spacingAndGlyphs">Message Closed</text><text x="1082.20" y="717.82" font-size="3.4" fill="#444" text-anchor="middle" textLength="4.60" lengthAdjust="spacingAndGlyphs">BI</text><text x="1082.20" y="593.04" font-size="3.8" fill="#666" text-anchor="middle">1</text>
<path d="M1085.80 512.25L1093.00 512.25" stroke="#1c1c1c" stroke-width="1.25" /><path d="M1085.80 595.24L1093.00 595.24" stroke="#1c1c1c" stroke-width="0.95" /><path d="M1085.80 602.39L1093.00 602.39" stroke="#1c1c1c" stroke-width="0.95" /><path d="M1085.80 609.53L1093.00 609.53" stroke="#1c1c1c" stroke-width="0.95" /><path d="M1085.80 616.67L1093.00 616.67" stroke="#1c1c1c" stroke-width="0.95" /><path d="M1085.80 623.82L1093.00 623.82" stroke="#1c1c1c" stroke-width="0.95" /><path d="M1085.80 630.96L1093.00 630.96" stroke="#1c1c1c" stroke-width="0.95" /><path d="M1085.80 638.11L1093.00 638.11" stroke="#1c1c1c" stroke-width="0.95" /><path d="M1085.80 512.25L1085.80 720.00" stroke="#1c1c1c" stroke-width="1.25" /><path d="M1093.00 512.25L1093.00 720.00" stroke="#1c1c1c" stroke-width="1.25" /><text transform="translate(1089.40 586.00) rotate(-90)" x="0" y="1.44" font-size="4" fill="#686868" text-anchor="start" textLength="63.00" lengthAdjust="spacingAndGlyphs">GEB01 ASP01 RLT01 FOL LKA 01 RM 04</text><text transform="translate(1089.40 709.50) rotate(-90)" x="0" y="1.62" font-size="4.5" fill="#505050" text-anchor="start" textLength="21.94" lengthAdjust="spacingAndGlyphs">Message On</text><text x="1089.40" y="717.82" font-size="3.4" fill="#444" text-anchor="middle" textLength="4.60" lengthAdjust="spacingAndGlyphs">BI</text><text x="1089.40" y="593.04" font-size="3.8" fill="#666" text-anchor="middle">1</text>
<path d="M1093.00 512.25L1100.20 512.25" stroke="#1c1c1c" stroke-width="1.25" /><path d="M1093.00 595.24L1100.20 595.24" stroke="#1c1c1c" stroke-width="0.95" /><path d="M1093.00 602.39L1100.20 602.39" stroke="#1c1c1c" stroke-width="0.95" /><path d="M1093.00 609.53L1100.20 609.53" stroke="#1c1c1c" stroke-width="0.95" /><path d="M1093.00 616.67L1100.20 616.67" stroke="#1c1c1c" stroke-width="0.95" /><path d="M1093.00 623.82L1100.20 623.82" stroke="#1c1c1c" stroke-width="0.95" /><path d="M1093.00 630.96L1100.20 630.96" stroke="#1c1c1c" stroke-width="0.95" /><path d="M1093.00 638.11L1100.20 638.11" stroke="#1c1c1c" stroke-width="0.95" /><path d="M1093.00 512.25L1093.00 720.00" stroke="#1c1c1c" stroke-width="1.25" /><path d="M1100.20 512.25L1100.20 720.00" stroke="#1c1c1c" stroke-width="1.25" /><text transform="translate(1096.60 586.00) rotate(-90)" x="0" y="1.44" font-size="4" fill="#686868" text-anchor="start" textLength="63.00" lengthAdjust="spacingAndGlyphs">GEB01 ASP01 RLT01 FOL LKA 01 HM 01</text><text transform="translate(1096.60 709.50) rotate(-90)" x="0" y="1.62" font-size="4.5" fill="#505050" text-anchor="start" textLength="43.38" lengthAdjust="spacingAndGlyphs">Manual alarm LVB Digital</text><text x="1096.60" y="717.82" font-size="3.4" fill="#444" text-anchor="middle" textLength="4.60" lengthAdjust="spacingAndGlyphs">BI</text><text x="1096.60" y="593.04" font-size="3.8" fill="#666" text-anchor="middle">1</text><text x="1096.60" y="628.76" font-size="3.8" fill="#666" text-anchor="middle">1</text>
<path d="M1100.20 720.00V512.25L1104.10 509.75L1105.70 509.75L1109.60 512.25V720.00z" fill="#d9d9d9"/><path d="M1100.20 512.25L1104.10 509.75L1105.70 509.75L1109.60 512.25" stroke="#1c1c1c" stroke-width=".9" fill="none"/><path d="M1100.20 512.25L1100.20 720.00" stroke="#1c1c1c" stroke-width="1.25" /><path d="M1109.60 512.25L1109.60 720.00" stroke="#1c1c1c" stroke-width="1.25" /><text transform="translate(1104.90 586.00) rotate(-90)" x="0" y="1.48" font-size="4.1" fill="#111" text-anchor="start" font-weight="bold" textLength="68.60" lengthAdjust="spacingAndGlyphs">GEB01_ASP01_RLT01_AUL_LKA 02</text><text transform="translate(1104.90 709.50) rotate(-90)" x="0" y="1.66" font-size="4.6" fill="#111" text-anchor="start" font-weight="bold" textLength="52.85" lengthAdjust="spacingAndGlyphs">Air damper\O/C\Outdoor air</text><text transform="translate(1104.90 719.50) rotate(-90)" x="0" y="1.15" font-size="3.2" fill="#7ab648" text-anchor="start" textLength="5.00" lengthAdjust="spacingAndGlyphs">DLA</text><text x="1104.90" y="593.18" font-size="4.2" fill="#111" text-anchor="middle" font-weight="bold">3</text><text x="1104.90" y="600.33" font-size="4.2" fill="#111" text-anchor="middle" font-weight="bold">1</text>
<path d="M1109.60 512.25L1116.80 512.25" stroke="#1c1c1c" stroke-width="1.25" /><path d="M1109.60 595.24L1116.80 595.24" stroke="#1c1c1c" stroke-width="0.95" /><path d="M1109.60 602.39L1116.80 602.39" stroke="#1c1c1c" stroke-width="0.95" /><path d="M1109.60 609.53L1116.80 609.53" stroke="#1c1c1c" stroke-width="0.95" /><path d="M1109.60 616.67L1116.80 616.67" stroke="#1c1c1c" stroke-width="0.95" /><path d="M1109.60 623.82L1116.80 623.82" stroke="#1c1c1c" stroke-width="0.95" /><path d="M1109.60 630.96L1116.80 630.96" stroke="#1c1c1c" stroke-width="0.95" /><path d="M1109.60 638.11L1116.80 638.11" stroke="#1c1c1c" stroke-width="0.95" /><path d="M1109.60 512.25L1109.60 720.00" stroke="#1c1c1c" stroke-width="1.25" /><path d="M1116.80 512.25L1116.80 720.00" stroke="#1c1c1c" stroke-width="1.25" /><text transform="translate(1113.20 586.00) rotate(-90)" x="0" y="1.44" font-size="4" fill="#686868" text-anchor="start" textLength="63.00" lengthAdjust="spacingAndGlyphs">GEB01 ASP01 RLT01 AUL LKA 02 SB 01</text><text transform="translate(1113.20 709.50) rotate(-90)" x="0" y="1.62" font-size="4.5" fill="#505050" text-anchor="start" textLength="28.40" lengthAdjust="spacingAndGlyphs">Switching output</text><text x="1113.20" y="717.82" font-size="3.4" fill="#444" text-anchor="middle" textLength="4.60" lengthAdjust="spacingAndGlyphs">BO</text><text x="1113.20" y="600.18" font-size="3.8" fill="#666" text-anchor="middle">1</text>
<path d="M1116.80 512.25L1124.00 512.25" stroke="#1c1c1c" stroke-width="1.25" /><path d="M1116.80 595.24L1124.00 595.24" stroke="#1c1c1c" stroke-width="0.95" /><path d="M1116.80 602.39L1124.00 602.39" stroke="#1c1c1c" stroke-width="0.95" /><path d="M1116.80 609.53L1124.00 609.53" stroke="#1c1c1c" stroke-width="0.95" /><path d="M1116.80 616.67L1124.00 616.67" stroke="#1c1c1c" stroke-width="0.95" /><path d="M1116.80 623.82L1124.00 623.82" stroke="#1c1c1c" stroke-width="0.95" /><path d="M1116.80 630.96L1124.00 630.96" stroke="#1c1c1c" stroke-width="0.95" /><path d="M1116.80 638.11L1124.00 638.11" stroke="#1c1c1c" stroke-width="0.95" /><path d="M1116.80 512.25L1116.80 720.00" stroke="#1c1c1c" stroke-width="1.25" /><path d="M1124.00 512.25L1124.00 720.00" stroke="#1c1c1c" stroke-width="1.25" /><text transform="translate(1120.40 586.00) rotate(-90)" x="0" y="1.44" font-size="4" fill="#686868" text-anchor="start" textLength="63.00" lengthAdjust="spacingAndGlyphs">GEB01 ASP01 RLT01 AUL LKA 02 RM 03</text><text transform="translate(1120.40 709.50) rotate(-90)" x="0" y="1.62" font-size="4.5" fill="#505050" text-anchor="start" textLength="28.83" lengthAdjust="spacingAndGlyphs">Message Closed</text><text x="1120.40" y="717.82" font-size="3.4" fill="#444" text-anchor="middle" textLength="4.60" lengthAdjust="spacingAndGlyphs">BI</text><text x="1120.40" y="593.04" font-size="3.8" fill="#666" text-anchor="middle">1</text>
<path d="M1124.00 512.25L1131.20 512.25" stroke="#1c1c1c" stroke-width="1.25" /><path d="M1124.00 595.24L1131.20 595.24" stroke="#1c1c1c" stroke-width="0.95" /><path d="M1124.00 602.39L1131.20 602.39" stroke="#1c1c1c" stroke-width="0.95" /><path d="M1124.00 609.53L1131.20 609.53" stroke="#1c1c1c" stroke-width="0.95" /><path d="M1124.00 616.67L1131.20 616.67" stroke="#1c1c1c" stroke-width="0.95" /><path d="M1124.00 623.82L1131.20 623.82" stroke="#1c1c1c" stroke-width="0.95" /><path d="M1124.00 630.96L1131.20 630.96" stroke="#1c1c1c" stroke-width="0.95" /><path d="M1124.00 638.11L1131.20 638.11" stroke="#1c1c1c" stroke-width="0.95" /><path d="M1124.00 512.25L1124.00 720.00" stroke="#1c1c1c" stroke-width="1.25" /><path d="M1131.20 512.25L1131.20 720.00" stroke="#1c1c1c" stroke-width="1.25" /><text transform="translate(1127.60 586.00) rotate(-90)" x="0" y="1.44" font-size="4" fill="#686868" text-anchor="start" textLength="63.00" lengthAdjust="spacingAndGlyphs">GEB01 ASP01 RLT01 AUL LKA 02 RM 04</text><text transform="translate(1127.60 709.50) rotate(-90)" x="0" y="1.62" font-size="4.5" fill="#505050" text-anchor="start" textLength="21.94" lengthAdjust="spacingAndGlyphs">Message On</text><text x="1127.60" y="717.82" font-size="3.4" fill="#444" text-anchor="middle" textLength="4.60" lengthAdjust="spacingAndGlyphs">BI</text><text x="1127.60" y="593.04" font-size="3.8" fill="#666" text-anchor="middle">1</text>
<path d="M1131.20 512.25L1138.40 512.25" stroke="#1c1c1c" stroke-width="1.25" /><path d="M1131.20 595.24L1138.40 595.24" stroke="#1c1c1c" stroke-width="0.95" /><path d="M1131.20 602.39L1138.40 602.39" stroke="#1c1c1c" stroke-width="0.95" /><path d="M1131.20 609.53L1138.40 609.53" stroke="#1c1c1c" stroke-width="0.95" /><path d="M1131.20 616.67L1138.40 616.67" stroke="#1c1c1c" stroke-width="0.95" /><path d="M1131.20 623.82L1138.40 623.82" stroke="#1c1c1c" stroke-width="0.95" /><path d="M1131.20 630.96L1138.40 630.96" stroke="#1c1c1c" stroke-width="0.95" /><path d="M1131.20 638.11L1138.40 638.11" stroke="#1c1c1c" stroke-width="0.95" /><path d="M1131.20 512.25L1131.20 720.00" stroke="#1c1c1c" stroke-width="1.25" /><path d="M1138.40 512.25L1138.40 720.00" stroke="#1c1c1c" stroke-width="1.25" /><text transform="translate(1134.80 586.00) rotate(-90)" x="0" y="1.44" font-size="4" fill="#686868" text-anchor="start" textLength="63.00" lengthAdjust="spacingAndGlyphs">GEB01 ASP01 RLT01 AUL LKA 02 HM 01</text><text transform="translate(1134.80 709.50) rotate(-90)" x="0" y="1.62" font-size="4.5" fill="#505050" text-anchor="start" textLength="43.38" lengthAdjust="spacingAndGlyphs">Manual alarm LVB Digital</text><text x="1134.80" y="717.82" font-size="3.4" fill="#444" text-anchor="middle" textLength="4.60" lengthAdjust="spacingAndGlyphs">BI</text><text x="1134.80" y="593.04" font-size="3.8" fill="#666" text-anchor="middle">1</text>
<path d="M1138.40 720.00V512.25L1142.30 509.75L1143.90 509.75L1147.80 512.25V720.00z" fill="#d9d9d9"/><path d="M1138.40 512.25L1142.30 509.75L1143.90 509.75L1147.80 512.25" stroke="#1c1c1c" stroke-width=".9" fill="none"/><path d="M1138.40 512.25L1138.40 720.00" stroke="#1c1c1c" stroke-width="1.25" /><path d="M1147.80 512.25L1147.80 720.00" stroke="#1c1c1c" stroke-width="1.25" /><text transform="translate(1143.10 586.00) rotate(-90)" x="0" y="1.48" font-size="4.1" fill="#111" text-anchor="start" font-weight="bold" textLength="68.60" lengthAdjust="spacingAndGlyphs">GEB01_ASP01_RLT01_MISC_LKA 03</text><text transform="translate(1143.10 709.50) rotate(-90)" x="0" y="1.66" font-size="4.6" fill="#111" text-anchor="start" font-weight="bold" textLength="51.97" lengthAdjust="spacingAndGlyphs">Air damper\0-10V\Mixed air</text><text transform="translate(1143.10 719.50) rotate(-90)" x="0" y="1.15" font-size="3.2" fill="#7ab648" text-anchor="start" textLength="5.00" lengthAdjust="spacingAndGlyphs">DLA</text><text x="1143.10" y="607.47" font-size="4.2" fill="#111" text-anchor="middle" font-weight="bold">1</text><text x="1143.10" y="614.62" font-size="4.2" fill="#111" text-anchor="middle" font-weight="bold">1</text>
<path d="M1147.80 512.25L1155.00 512.25" stroke="#1c1c1c" stroke-width="1.25" /><path d="M1147.80 595.24L1155.00 595.24" stroke="#1c1c1c" stroke-width="0.95" /><path d="M1147.80 602.39L1155.00 602.39" stroke="#1c1c1c" stroke-width="0.95" /><path d="M1147.80 609.53L1155.00 609.53" stroke="#1c1c1c" stroke-width="0.95" /><path d="M1147.80 616.67L1155.00 616.67" stroke="#1c1c1c" stroke-width="0.95" /><path d="M1147.80 623.82L1155.00 623.82" stroke="#1c1c1c" stroke-width="0.95" /><path d="M1147.80 630.96L1155.00 630.96" stroke="#1c1c1c" stroke-width="0.95" /><path d="M1147.80 638.11L1155.00 638.11" stroke="#1c1c1c" stroke-width="0.95" /><path d="M1147.80 512.25L1147.80 720.00" stroke="#1c1c1c" stroke-width="1.25" /><path d="M1155.00 512.25L1155.00 720.00" stroke="#1c1c1c" stroke-width="1.25" /><text transform="translate(1151.40 586.00) rotate(-90)" x="0" y="1.44" font-size="4" fill="#686868" text-anchor="start" textLength="63.00" lengthAdjust="spacingAndGlyphs">GEB01 ASP01 RLT01 MISC LKA 03 ST 01</text><text transform="translate(1151.40 709.50) rotate(-90)" x="0" y="1.62" font-size="4.5" fill="#505050" text-anchor="start" textLength="24.31" lengthAdjust="spacingAndGlyphs">Control output</text><text x="1151.40" y="717.82" font-size="3.4" fill="#444" text-anchor="middle" textLength="4.60" lengthAdjust="spacingAndGlyphs">AO</text><text x="1151.40" y="614.47" font-size="3.8" fill="#666" text-anchor="middle">1</text>
<path d="M1155.00 512.25L1162.20 512.25" stroke="#1c1c1c" stroke-width="1.25" /><path d="M1155.00 595.24L1162.20 595.24" stroke="#1c1c1c" stroke-width="0.95" /><path d="M1155.00 602.39L1162.20 602.39" stroke="#1c1c1c" stroke-width="0.95" /><path d="M1155.00 609.53L1162.20 609.53" stroke="#1c1c1c" stroke-width="0.95" /><path d="M1155.00 616.67L1162.20 616.67" stroke="#1c1c1c" stroke-width="0.95" /><path d="M1155.00 623.82L1162.20 623.82" stroke="#1c1c1c" stroke-width="0.95" /><path d="M1155.00 630.96L1162.20 630.96" stroke="#1c1c1c" stroke-width="0.95" /><path d="M1155.00 638.11L1162.20 638.11" stroke="#1c1c1c" stroke-width="0.95" /><path d="M1155.00 512.25L1155.00 720.00" stroke="#1c1c1c" stroke-width="1.25" /><path d="M1162.20 512.25L1162.20 720.00" stroke="#1c1c1c" stroke-width="1.25" /><text transform="translate(1158.60 586.00) rotate(-90)" x="0" y="1.44" font-size="4" fill="#686868" text-anchor="start" textLength="63.00" lengthAdjust="spacingAndGlyphs">GEB01 ASP01 RLT01 MISC LKA 03 MW 01</text><text transform="translate(1158.60 709.50) rotate(-90)" x="0" y="1.62" font-size="4.5" fill="#505050" text-anchor="start" textLength="26.03" lengthAdjust="spacingAndGlyphs">Return position</text><text x="1158.60" y="717.82" font-size="3.4" fill="#444" text-anchor="middle" textLength="4.60" lengthAdjust="spacingAndGlyphs">AI</text><text x="1158.60" y="607.33" font-size="3.8" fill="#666" text-anchor="middle">1</text>
<path d="M1162.20 512.25L1169.40 512.25" stroke="#1c1c1c" stroke-width="1.25" /><path d="M1162.20 595.24L1169.40 595.24" stroke="#1c1c1c" stroke-width="0.95" /><path d="M1162.20 602.39L1169.40 602.39" stroke="#1c1c1c" stroke-width="0.95" /><path d="M1162.20 609.53L1169.40 609.53" stroke="#1c1c1c" stroke-width="0.95" /><path d="M1162.20 616.67L1169.40 616.67" stroke="#1c1c1c" stroke-width="0.95" /><path d="M1162.20 623.82L1169.40 623.82" stroke="#1c1c1c" stroke-width="0.95" /><path d="M1162.20 630.96L1169.40 630.96" stroke="#1c1c1c" stroke-width="0.95" /><path d="M1162.20 638.11L1169.40 638.11" stroke="#1c1c1c" stroke-width="0.95" /><path d="M1162.20 512.25L1162.20 720.00" stroke="#1c1c1c" stroke-width="1.25" /><path d="M1169.40 512.25L1169.40 720.00" stroke="#1c1c1c" stroke-width="1.25" /><text transform="translate(1165.80 586.00) rotate(-90)" x="0" y="1.44" font-size="4" fill="#686868" text-anchor="start" textLength="63.00" lengthAdjust="spacingAndGlyphs">GEB01 ASP01 RLT01 MISC LKA 03 HM 02</text><text transform="translate(1165.80 709.50) rotate(-90)" x="0" y="1.62" font-size="4.5" fill="#505050" text-anchor="start" textLength="44.90" lengthAdjust="spacingAndGlyphs">Manual signal LVB Analog</text><text x="1165.80" y="717.82" font-size="3.4" fill="#444" text-anchor="middle" textLength="4.60" lengthAdjust="spacingAndGlyphs">AI</text><text x="1165.80" y="635.90" font-size="3.8" fill="#666" text-anchor="middle">1</text>
<path d="M1169.40 720.00V512.25L1173.30 509.75L1174.90 509.75L1178.80 512.25V720.00z" fill="#d9d9d9"/><path d="M1169.40 512.25L1173.30 509.75L1174.90 509.75L1178.80 512.25" stroke="#1c1c1c" stroke-width=".9" fill="none"/><path d="M1169.40 512.25L1169.40 720.00" stroke="#1c1c1c" stroke-width="1.25" /><path d="M1178.80 512.25L1178.80 720.00" stroke="#1c1c1c" stroke-width="1.25" /><text transform="translate(1174.10 586.00) rotate(-90)" x="0" y="1.48" font-size="4.1" fill="#111" text-anchor="start" font-weight="bold" textLength="68.60" lengthAdjust="spacingAndGlyphs">GEB01_ASP01_RLT01_ABL_PAB 01</text><text transform="translate(1174.10 709.50) rotate(-90)" x="0" y="1.66" font-size="4.6" fill="#111" text-anchor="start" font-weight="bold" textLength="41.39" lengthAdjust="spacingAndGlyphs">Pressure sensor duct</text><text transform="translate(1174.10 719.50) rotate(-90)" x="0" y="1.15" font-size="3.2" fill="#7ab648" text-anchor="start" textLength="5.00" lengthAdjust="spacingAndGlyphs">DLA</text><text x="1174.10" y="607.47" font-size="4.2" fill="#111" text-anchor="middle" font-weight="bold">1</text>
<path d="M1178.80 512.25L1186.00 512.25" stroke="#1c1c1c" stroke-width="1.25" /><path d="M1178.80 595.24L1186.00 595.24" stroke="#1c1c1c" stroke-width="0.95" /><path d="M1178.80 602.39L1186.00 602.39" stroke="#1c1c1c" stroke-width="0.95" /><path d="M1178.80 609.53L1186.00 609.53" stroke="#1c1c1c" stroke-width="0.95" /><path d="M1178.80 616.67L1186.00 616.67" stroke="#1c1c1c" stroke-width="0.95" /><path d="M1178.80 623.82L1186.00 623.82" stroke="#1c1c1c" stroke-width="0.95" /><path d="M1178.80 630.96L1186.00 630.96" stroke="#1c1c1c" stroke-width="0.95" /><path d="M1178.80 638.11L1186.00 638.11" stroke="#1c1c1c" stroke-width="0.95" /><path d="M1178.80 512.25L1178.80 720.00" stroke="#1c1c1c" stroke-width="1.25" /><path d="M1186.00 512.25L1186.00 720.00" stroke="#1c1c1c" stroke-width="1.25" /><text transform="translate(1182.40 586.00) rotate(-90)" x="0" y="1.44" font-size="4" fill="#686868" text-anchor="start" textLength="63.00" lengthAdjust="spacingAndGlyphs">GEB01 ASP01 RLT01 ABL PAB 01 MW 01</text><text transform="translate(1182.40 709.50) rotate(-90)" x="0" y="1.62" font-size="4.5" fill="#505050" text-anchor="start" textLength="21.94" lengthAdjust="spacingAndGlyphs">MV pressure</text><text x="1182.40" y="717.82" font-size="3.4" fill="#444" text-anchor="middle" textLength="4.60" lengthAdjust="spacingAndGlyphs">AI</text><text x="1182.40" y="607.33" font-size="3.8" fill="#666" text-anchor="middle">1</text>
<path d="M1186.00 720.00V512.25L1189.90 509.75L1191.50 509.75L1195.40 512.25V720.00z" fill="#d9d9d9"/><path d="M1186.00 512.25L1189.90 509.75L1191.50 509.75L1195.40 512.25" stroke="#1c1c1c" stroke-width=".9" fill="none"/><path d="M1186.00 512.25L1186.00 720.00" stroke="#1c1c1c" stroke-width="1.25" /><path d="M1195.40 512.25L1195.40 720.00" stroke="#1c1c1c" stroke-width="1.25" /><text transform="translate(1190.70 586.00) rotate(-90)" x="0" y="1.48" font-size="4.1" fill="#111" text-anchor="start" font-weight="bold" textLength="68.60" lengthAdjust="spacingAndGlyphs">GEB01_ASP01_RLT01_WLH_PPE 01</text><text transform="translate(1190.70 709.50) rotate(-90)" x="0" y="1.66" font-size="4.6" fill="#111" text-anchor="start" font-weight="bold" textLength="22.95" lengthAdjust="spacingAndGlyphs">Pump 230 V</text><text transform="translate(1190.70 719.50) rotate(-90)" x="0" y="1.15" font-size="3.2" fill="#7ab648" text-anchor="start" textLength="5.00" lengthAdjust="spacingAndGlyphs">DLA</text><text x="1190.70" y="593.18" font-size="4.2" fill="#111" text-anchor="middle" font-weight="bold">3</text><text x="1190.70" y="600.33" font-size="4.2" fill="#111" text-anchor="middle" font-weight="bold">1</text>
<path d="M1195.40 512.25L1202.60 512.25" stroke="#1c1c1c" stroke-width="1.25" /><path d="M1195.40 595.24L1202.60 595.24" stroke="#1c1c1c" stroke-width="0.95" /><path d="M1195.40 602.39L1202.60 602.39" stroke="#1c1c1c" stroke-width="0.95" /><path d="M1195.40 609.53L1202.60 609.53" stroke="#1c1c1c" stroke-width="0.95" /><path d="M1195.40 616.67L1202.60 616.67" stroke="#1c1c1c" stroke-width="0.95" /><path d="M1195.40 623.82L1202.60 623.82" stroke="#1c1c1c" stroke-width="0.95" /><path d="M1195.40 630.96L1202.60 630.96" stroke="#1c1c1c" stroke-width="0.95" /><path d="M1195.40 638.11L1202.60 638.11" stroke="#1c1c1c" stroke-width="0.95" /><path d="M1195.40 512.25L1195.40 720.00" stroke="#1c1c1c" stroke-width="1.25" /><path d="M1202.60 512.25L1202.60 720.00" stroke="#1c1c1c" stroke-width="1.25" /><text transform="translate(1199.00 586.00) rotate(-90)" x="0" y="1.44" font-size="4" fill="#686868" text-anchor="start" textLength="63.00" lengthAdjust="spacingAndGlyphs">GEB01 ASP01 RLT01 WLH PPE 01 SB 01</text><text transform="translate(1199.00 709.50) rotate(-90)" x="0" y="1.62" font-size="4.5" fill="#505050" text-anchor="start" textLength="45.82" lengthAdjust="spacingAndGlyphs">Switching command Pump</text><text x="1199.00" y="717.82" font-size="3.4" fill="#444" text-anchor="middle" textLength="4.60" lengthAdjust="spacingAndGlyphs">BO</text><text x="1199.00" y="600.18" font-size="3.8" fill="#666" text-anchor="middle">1</text>
<path d="M1202.60 512.25L1209.80 512.25" stroke="#1c1c1c" stroke-width="1.25" /><path d="M1202.60 595.24L1209.80 595.24" stroke="#1c1c1c" stroke-width="0.95" /><path d="M1202.60 602.39L1209.80 602.39" stroke="#1c1c1c" stroke-width="0.95" /><path d="M1202.60 609.53L1209.80 609.53" stroke="#1c1c1c" stroke-width="0.95" /><path d="M1202.60 616.67L1209.80 616.67" stroke="#1c1c1c" stroke-width="0.95" /><path d="M1202.60 623.82L1209.80 623.82" stroke="#1c1c1c" stroke-width="0.95" /><path d="M1202.60 630.96L1209.80 630.96" stroke="#1c1c1c" stroke-width="0.95" /><path d="M1202.60 638.11L1209.80 638.11" stroke="#1c1c1c" stroke-width="0.95" /><path d="M1202.60 512.25L1202.60 720.00" stroke="#1c1c1c" stroke-width="1.25" /><path d="M1209.80 512.25L1209.80 720.00" stroke="#1c1c1c" stroke-width="1.25" /><text transform="translate(1206.20 586.00) rotate(-90)" x="0" y="1.44" font-size="4" fill="#686868" text-anchor="start" textLength="63.00" lengthAdjust="spacingAndGlyphs">GEB01 ASP01 RLT01 WLH PPE 01 BM 01</text><text transform="translate(1206.20 709.50) rotate(-90)" x="0" y="1.62" font-size="4.5" fill="#505050" text-anchor="start" textLength="33.78" lengthAdjust="spacingAndGlyphs">Operating message</text><text x="1206.20" y="717.82" font-size="3.4" fill="#444" text-anchor="middle" textLength="4.60" lengthAdjust="spacingAndGlyphs">BI</text><text x="1206.20" y="593.04" font-size="3.8" fill="#666" text-anchor="middle">1</text>
<path d="M1209.80 512.25L1217.00 512.25" stroke="#1c1c1c" stroke-width="1.25" /><path d="M1209.80 595.24L1217.00 595.24" stroke="#1c1c1c" stroke-width="0.95" /><path d="M1209.80 602.39L1217.00 602.39" stroke="#1c1c1c" stroke-width="0.95" /><path d="M1209.80 609.53L1217.00 609.53" stroke="#1c1c1c" stroke-width="0.95" /><path d="M1209.80 616.67L1217.00 616.67" stroke="#1c1c1c" stroke-width="0.95" /><path d="M1209.80 623.82L1217.00 623.82" stroke="#1c1c1c" stroke-width="0.95" /><path d="M1209.80 630.96L1217.00 630.96" stroke="#1c1c1c" stroke-width="0.95" /><path d="M1209.80 638.11L1217.00 638.11" stroke="#1c1c1c" stroke-width="0.95" /><path d="M1209.80 512.25L1209.80 720.00" stroke="#1c1c1c" stroke-width="1.25" /><path d="M1217.00 512.25L1217.00 720.00" stroke="#1c1c1c" stroke-width="1.25" /><text transform="translate(1213.40 586.00) rotate(-90)" x="0" y="1.44" font-size="4" fill="#686868" text-anchor="start" textLength="63.00" lengthAdjust="spacingAndGlyphs">GEB01 ASP01 RLT01 WLH PPE 01 SM 01</text><text transform="translate(1213.40 709.50) rotate(-90)" x="0" y="1.62" font-size="4.5" fill="#505050" text-anchor="start" textLength="25.38" lengthAdjust="spacingAndGlyphs">Fault message</text><text x="1213.40" y="717.82" font-size="3.4" fill="#444" text-anchor="middle" textLength="4.60" lengthAdjust="spacingAndGlyphs">BI</text><text x="1213.40" y="593.04" font-size="3.8" fill="#666" text-anchor="middle">1</text>
<path d="M1217.00 512.25L1224.20 512.25" stroke="#1c1c1c" stroke-width="1.25" /><path d="M1217.00 595.24L1224.20 595.24" stroke="#1c1c1c" stroke-width="0.95" /><path d="M1217.00 602.39L1224.20 602.39" stroke="#1c1c1c" stroke-width="0.95" /><path d="M1217.00 609.53L1224.20 609.53" stroke="#1c1c1c" stroke-width="0.95" /><path d="M1217.00 616.67L1224.20 616.67" stroke="#1c1c1c" stroke-width="0.95" /><path d="M1217.00 623.82L1224.20 623.82" stroke="#1c1c1c" stroke-width="0.95" /><path d="M1217.00 630.96L1224.20 630.96" stroke="#1c1c1c" stroke-width="0.95" /><path d="M1217.00 638.11L1224.20 638.11" stroke="#1c1c1c" stroke-width="0.95" /><path d="M1217.00 512.25L1217.00 720.00" stroke="#1c1c1c" stroke-width="1.25" /><path d="M1224.20 512.25L1224.20 720.00" stroke="#1c1c1c" stroke-width="1.25" /><text transform="translate(1220.60 586.00) rotate(-90)" x="0" y="1.44" font-size="4" fill="#686868" text-anchor="start" textLength="63.00" lengthAdjust="spacingAndGlyphs">GEB01 ASP01 RLT01 WLH PPE 01 HM 01</text><text transform="translate(1220.60 709.50) rotate(-90)" x="0" y="1.62" font-size="4.5" fill="#505050" text-anchor="start" textLength="37.58" lengthAdjust="spacingAndGlyphs">Manual message LVB</text><text x="1220.60" y="717.82" font-size="3.4" fill="#444" text-anchor="middle" textLength="4.60" lengthAdjust="spacingAndGlyphs">BI</text><text x="1220.60" y="593.04" font-size="3.8" fill="#666" text-anchor="middle">1</text><text x="1220.60" y="621.61" font-size="3.8" fill="#666" text-anchor="middle">x</text>
<path d="M1224.20 720.00V512.25L1228.10 509.75L1229.70 509.75L1233.60 512.25V720.00z" fill="#d9d9d9"/><path d="M1224.20 512.25L1228.10 509.75L1229.70 509.75L1233.60 512.25" stroke="#1c1c1c" stroke-width=".9" fill="none"/><path d="M1224.20 512.25L1224.20 720.00" stroke="#1c1c1c" stroke-width="1.25" /><path d="M1233.60 512.25L1233.60 720.00" stroke="#1c1c1c" stroke-width="1.25" /><text transform="translate(1228.90 586.00) rotate(-90)" x="0" y="1.48" font-size="4.1" fill="#111" text-anchor="start" font-weight="bold" textLength="68.60" lengthAdjust="spacingAndGlyphs">GEB01_ASP01_RLT01_ZUL_PZU 01</text><text transform="translate(1228.90 709.50) rotate(-90)" x="0" y="1.66" font-size="4.6" fill="#111" text-anchor="start" font-weight="bold" textLength="41.39" lengthAdjust="spacingAndGlyphs">Pressure sensor duct</text><text transform="translate(1228.90 719.50) rotate(-90)" x="0" y="1.15" font-size="3.2" fill="#7ab648" text-anchor="start" textLength="5.00" lengthAdjust="spacingAndGlyphs">DLA</text><text x="1228.90" y="607.47" font-size="4.2" fill="#111" text-anchor="middle" font-weight="bold">1</text>
<path d="M1233.60 512.25L1240.80 512.25" stroke="#1c1c1c" stroke-width="1.25" /><path d="M1233.60 595.24L1240.80 595.24" stroke="#1c1c1c" stroke-width="0.95" /><path d="M1233.60 602.39L1240.80 602.39" stroke="#1c1c1c" stroke-width="0.95" /><path d="M1233.60 609.53L1240.80 609.53" stroke="#1c1c1c" stroke-width="0.95" /><path d="M1233.60 616.67L1240.80 616.67" stroke="#1c1c1c" stroke-width="0.95" /><path d="M1233.60 623.82L1240.80 623.82" stroke="#1c1c1c" stroke-width="0.95" /><path d="M1233.60 630.96L1240.80 630.96" stroke="#1c1c1c" stroke-width="0.95" /><path d="M1233.60 638.11L1240.80 638.11" stroke="#1c1c1c" stroke-width="0.95" /><path d="M1233.60 512.25L1233.60 720.00" stroke="#1c1c1c" stroke-width="1.25" /><path d="M1240.80 512.25L1240.80 720.00" stroke="#1c1c1c" stroke-width="1.25" /><text transform="translate(1237.20 586.00) rotate(-90)" x="0" y="1.44" font-size="4" fill="#686868" text-anchor="start" textLength="63.00" lengthAdjust="spacingAndGlyphs">GEB01 ASP01 RLT01 ZUL PZU 01 MW 01</text><text transform="translate(1237.20 709.50) rotate(-90)" x="0" y="1.62" font-size="4.5" fill="#505050" text-anchor="start" textLength="21.94" lengthAdjust="spacingAndGlyphs">MV pressure</text><text x="1237.20" y="717.82" font-size="3.4" fill="#444" text-anchor="middle" textLength="4.60" lengthAdjust="spacingAndGlyphs">AI</text><text x="1237.20" y="607.33" font-size="3.8" fill="#666" text-anchor="middle">1</text>
</g>
</svg>
<!-- left -->
<div class="r" style="left:0px;top:106px;width:261px;height:614px;background:#2d2d2d;"></div>
<span class="t" style="left:2.50px;top:110.31px;font-size:8.3px;line-height:10.38px;color:#1b9fe3;transform:scaleX(0.9218);">Pages - Eplan_Building_Technology_IEC_mm</span>
<svg class="r" style="left:224.5px;top:114.5px;" width="7" height="4" viewBox="0 0 7 4"><path d="M0.3 0.4h6L3.3 3.6z" fill="#dcdcdc"/></svg><svg class="r" style="left:237.5px;top:112px;" width="6" height="8" viewBox="0 0 6 8"><path d="M1.6 0.6h2.8M1.8 0.6v3.6M4.2 0.6v3.6M0.6 4.2h4.8M3 4.2v3.4" stroke="#dcdcdc" fill="none" stroke-width=".9"/><path d="M3.4 0.8v3.2h.8V0.8z" fill="#dcdcdc"/></svg><svg class="r" style="left:250.3px;top:113.2px;" width="6" height="6" viewBox="0 0 6 6"><path d="M0.7 0.7l4.4 4.4M5.1 0.7L0.7 5.1" stroke="#e4e4e4" stroke-width="1.1"/></svg>
<div class="r" style="left:0px;top:125px;width:86px;height:15.5px;background:#3c3c3c;"></div>
<span class="t" style="left:4.00px;top:128.01px;font-size:8.3px;line-height:10.38px;color:#f0f0f0;transform:scaleX(0.9144);">Pages - Eplan_Buildin...</span>
<span class="t" style="left:90.00px;top:128.01px;font-size:8.3px;line-height:10.38px;color:#e2e2e2;transform:scaleX(0.9049);">Layout space - Eplan_...</span>
<span class="t" style="left:176.00px;top:128.01px;font-size:8.3px;line-height:10.38px;color:#e2e2e2;transform:scaleX(0.9193);">Devices - Eplan_Build...</span>
<div class="r" style="left:0px;top:141.5px;width:258px;height:67.5px;background:#1f1f1f;"></div>
<span class="t" style="left:2.00px;top:144.31px;font-size:8.3px;line-height:10.38px;color:#e2e2e2;transform:scaleX(0.9157);">Filter:</span>
<div class="r" style="left:3px;top:157px;width:231px;height:15.5px;background:#2c2c2c;"></div>
<div class="r" style="left:222px;top:157px;width:12px;height:15.5px;background:#383838;"></div>
<svg class="r" style="left:225px;top:163.5px;" width="6" height="4" viewBox="0 0 6 4"><path d="M0.5 0.5h5L3 3.4z" fill="#bdbdbd"/></svg>
<span class="t" style="left:5.00px;top:159.81px;font-size:8.3px;line-height:10.38px;color:#e2e2e2;transform:scaleX(0.9730);">- Not activated -</span>
<div class="r" style="left:240px;top:157px;width:17.5px;height:15.5px;background:#2c2c2c;"></div>
<span class="t" style="left:245.78px;top:162.12px;font-size:7px;line-height:8.75px;color:#dcdcdc;">...</span>
<span class="t" style="left:2.00px;top:177.31px;font-size:8.3px;line-height:10.38px;color:#e2e2e2;transform:scaleX(0.8727);">Value:</span>
<div class="r" style="left:3px;top:189px;width:254.5px;height:12.5px;background:#111;border:1px solid #b0b0b0;box-sizing:border-box;"></div>
<div class="r" style="left:3px;top:209px;width:255px;height:345.5px;background:#2b2b2b;"></div>
<div class="r" style="left:3px;top:209px;width:5px;height:345.5px;background:#7a7af6;"></div>
<div class="r" style="left:246px;top:209px;width:12px;height:345.5px;background:#2b2b2b;"></div>
<svg class="r" style="left:249px;top:213.5px;" width="6" height="4" viewBox="0 0 6 4"><path d="M0.3 3.6h5.4L3 0.5z" fill="#d8d8d8"/></svg>
<svg class="r" style="left:249px;top:546px;" width="6" height="4" viewBox="0 0 6 4"><path d="M0.3 0.4h5.4L3 3.5z" fill="#d8d8d8"/></svg>
<div class="r" style="left:249px;top:513px;width:4px;height:24px;background:#4e4e4e;"></div>
<div class="r" style="left:28px;top:209px;width:11px;height:1.6px;background:#d0d0d0;"></div>
<div class="r" style="left:61.5px;top:209.6px;width:3px;height:1px;background:#cfcfcf;"></div>
<div class="r" style="left:44.5px;top:304px;width:1px;height:18px;background:#3c3c3c;"></div>
<div class="r" style="left:56px;top:327px;width:1px;height:18px;background:#3c3c3c;"></div>
<div class="r" style="left:67.5px;top:349.5px;width:1px;height:96px;background:#3c3c3c;"></div>
<svg class="r" style="left:28px;top:213.9px;" width="11" height="10" viewBox="0 0 11 10"><rect x="0.5" y="0.5" width="10" height="9" fill="#ff8a17"/><rect x="0.5" y="0.5" width="10" height="9" fill="none" stroke="#fafafa" stroke-width="1" stroke-dasharray="1 1" shape-rendering="crispEdges"/><text x="5.5" y="7.6" font-size="6.5" font-weight="bold" text-anchor="middle" fill="#5a3008" font-family="Liberation Sans,sans-serif">&amp;</text></svg>
<svg class="r" style="left:19.5px;top:215.9px;" width="5" height="7" viewBox="0 0 5 7"><path d="M0.8 0.8L3.8 3.5 0.8 6.2z" fill="none" stroke="#4e4e4e" stroke-width=".8"/></svg>
<span class="t" style="left:41.00px;top:213.71px;font-size:8.3px;line-height:10.38px;color:#e2e2e2;transform:scaleX(0.9395);">BAA (Title page / cover sheet)</span>
<svg class="r" style="left:28px;top:225.233px;" width="11" height="10" viewBox="0 0 11 10"><rect x="0.5" y="0.5" width="10" height="9" fill="#ff8a17"/><rect x="0.5" y="0.5" width="10" height="9" fill="none" stroke="#fafafa" stroke-width="1" stroke-dasharray="1 1" shape-rendering="crispEdges"/><text x="5.5" y="7.6" font-size="6.5" font-weight="bold" text-anchor="middle" fill="#5a3008" font-family="Liberation Sans,sans-serif">&amp;</text></svg>
<svg class="r" style="left:19.5px;top:227.233px;" width="5" height="7" viewBox="0 0 5 7"><path d="M0.8 0.8L3.8 3.5 0.8 6.2z" fill="none" stroke="#4e4e4e" stroke-width=".8"/></svg>
<span class="t" style="left:41.00px;top:225.04px;font-size:8.3px;line-height:10.38px;color:#e2e2e2;transform:scaleX(0.9290);">BAB (Table of contents)</span>
<svg class="r" style="left:28px;top:236.566px;" width="11" height="10" viewBox="0 0 11 10"><rect x="0.5" y="0.5" width="10" height="9" fill="#ff8a17"/><rect x="0.5" y="0.5" width="10" height="9" fill="none" stroke="#fafafa" stroke-width="1" stroke-dasharray="1 1" shape-rendering="crispEdges"/><text x="5.5" y="7.6" font-size="6.5" font-weight="bold" text-anchor="middle" fill="#5a3008" font-family="Liberation Sans,sans-serif">&amp;</text></svg>
<svg class="r" style="left:19.5px;top:238.566px;" width="5" height="7" viewBox="0 0 5 7"><path d="M0.8 0.8L3.8 3.5 0.8 6.2z" fill="none" stroke="#4e4e4e" stroke-width=".8"/></svg>
<span class="t" style="left:41.00px;top:236.38px;font-size:8.3px;line-height:10.38px;color:#e2e2e2;transform:scaleX(0.9305);">EDB (Structure description)</span>
<svg class="r" style="left:28px;top:247.899px;" width="11" height="10" viewBox="0 0 11 10"><rect x="0.5" y="0.5" width="10" height="9" fill="#ff8a17"/><rect x="0.5" y="0.5" width="10" height="9" fill="none" stroke="#fafafa" stroke-width="1" stroke-dasharray="1 1" shape-rendering="crispEdges"/><text x="5.5" y="7.6" font-size="6.5" font-weight="bold" text-anchor="middle" fill="#5a3008" font-family="Liberation Sans,sans-serif">&amp;</text></svg>
<svg class="r" style="left:19.5px;top:249.899px;" width="5" height="7" viewBox="0 0 5 7"><path d="M0.8 0.8L3.8 3.5 0.8 6.2z" fill="none" stroke="#4e4e4e" stroke-width=".8"/></svg>
<span class="t" style="left:41.00px;top:247.71px;font-size:8.3px;line-height:10.38px;color:#e2e2e2;transform:scaleX(0.9583);">EEC (Safety instructions / Implementation regulation)</span>
<svg class="r" style="left:28px;top:259.232px;" width="11" height="10" viewBox="0 0 11 10"><rect x="0.5" y="0.5" width="10" height="9" fill="#ff8a17"/><rect x="0.5" y="0.5" width="10" height="9" fill="none" stroke="#fafafa" stroke-width="1" stroke-dasharray="1 1" shape-rendering="crispEdges"/><text x="5.5" y="7.6" font-size="6.5" font-weight="bold" text-anchor="middle" fill="#5a3008" font-family="Liberation Sans,sans-serif">&amp;</text></svg>
<svg class="r" style="left:19.5px;top:261.232px;" width="5" height="7" viewBox="0 0 5 7"><path d="M0.8 0.8L3.8 3.5 0.8 6.2z" fill="none" stroke="#4e4e4e" stroke-width=".8"/></svg>
<span class="t" style="left:41.00px;top:259.04px;font-size:8.3px;line-height:10.38px;color:#e2e2e2;transform:scaleX(0.8999);">EFA1 (PLC card overview)</span>
<svg class="r" style="left:28px;top:270.565px;" width="11" height="10" viewBox="0 0 11 10"><rect x="0.5" y="0.5" width="10" height="9" fill="#ff8a17"/><rect x="0.5" y="0.5" width="10" height="9" fill="none" stroke="#fafafa" stroke-width="1" stroke-dasharray="1 1" shape-rendering="crispEdges"/><text x="5.5" y="7.6" font-size="6.5" font-weight="bold" text-anchor="middle" fill="#5a3008" font-family="Liberation Sans,sans-serif">&amp;</text></svg>
<svg class="r" style="left:19.5px;top:272.565px;" width="5" height="7" viewBox="0 0 5 7"><path d="M0.8 0.8L3.8 3.5 0.8 6.2z" fill="none" stroke="#4e4e4e" stroke-width=".8"/></svg>
<span class="t" style="left:41.00px;top:270.38px;font-size:8.3px;line-height:10.38px;color:#e2e2e2;transform:scaleX(0.9218);">EFA2 (Network Overview)</span>
<svg class="r" style="left:28px;top:281.898px;" width="11" height="10" viewBox="0 0 11 10"><rect x="0.5" y="0.5" width="10" height="9" fill="#ff8a17"/><rect x="0.5" y="0.5" width="10" height="9" fill="none" stroke="#fafafa" stroke-width="1" stroke-dasharray="1 1" shape-rendering="crispEdges"/><text x="5.5" y="7.6" font-size="6.5" font-weight="bold" text-anchor="middle" fill="#5a3008" font-family="Liberation Sans,sans-serif">&amp;</text></svg>
<svg class="r" style="left:19.5px;top:284.898px;" width="5" height="5" viewBox="0 0 5 5"><path d="M4.4 0.4v4H0.4z" fill="#5c5c5c"/></svg>
<span class="t" style="left:41.00px;top:281.71px;font-size:8.3px;line-height:10.38px;color:#e2e2e2;transform:scaleX(0.9139);">PFB (P&amp;I Diagrams)</span>
<svg class="r" style="left:39.4px;top:293.231px;" width="11" height="10" viewBox="0 0 11 10"><rect x="0.5" y="0.5" width="10" height="9" fill="#9ccaf0"/><rect x="0.5" y="0.5" width="10" height="9" fill="none" stroke="#fafafa" stroke-width="1" stroke-dasharray="1 1" shape-rendering="crispEdges"/><path d="M3 3.8h5M3 6.2h5" stroke="#5a88b8" stroke-width="1.1" stroke-dasharray="1.5 0.7"/></svg>
<svg class="r" style="left:30.9px;top:296.231px;" width="5" height="5" viewBox="0 0 5 5"><path d="M4.4 0.4v4H0.4z" fill="#5c5c5c"/></svg>
<span class="t" style="left:52.20px;top:293.04px;font-size:8.3px;line-height:10.38px;color:#e2e2e2;transform:scaleX(0.8961);">GEB01 (Building 01)</span>
<svg class="r" style="left:50.2px;top:304.564px;" width="11" height="10" viewBox="0 0 11 10"><path d="M0.7 9.3V1.6h7l2.6 2.4v5.3z" fill="#3a3a3a" stroke="#ececec" stroke-width="1.1"/><path d="M2.2 7.8l2.6-3.6 1.8 2 1-1 1.2 2.6z" fill="#f4f4f4"/><path d="M7.6 1.8v2.4h2.4" stroke="#ececec" fill="none" stroke-width=".9"/></svg>
<span class="t" style="left:63.60px;top:304.37px;font-size:8.3px;line-height:10.38px;color:#e2e2e2;transform:scaleX(0.9203);">1 System overview</span>
<svg class="r" style="left:50.2px;top:315.897px;" width="11" height="10" viewBox="0 0 11 10"><rect x="0.5" y="0.5" width="10" height="9" fill="#f2c12e"/><rect x="0.5" y="0.5" width="10" height="9" fill="none" stroke="#fafafa" stroke-width="1" stroke-dasharray="1 1" shape-rendering="crispEdges"/><path d="M2.4 3.6h6.2M2.4 6.2h6.2" stroke="#7a5c10" stroke-width="1.1"/></svg>
<svg class="r" style="left:41.7px;top:318.897px;" width="5" height="5" viewBox="0 0 5 5"><path d="M4.4 0.4v4H0.4z" fill="#5c5c5c"/></svg>
<span class="t" style="left:63.60px;top:315.71px;font-size:8.3px;line-height:10.38px;color:#e2e2e2;transform:scaleX(0.9458);">ASP01 (Control equipment plant 01)</span>
<svg class="r" style="left:62.2px;top:327.23px;" width="11" height="10" viewBox="0 0 11 10"><rect x="0.5" y="0.5" width="10" height="9" fill="#f2c12e"/><rect x="0.5" y="0.5" width="10" height="9" fill="none" stroke="#fafafa" stroke-width="1" stroke-dasharray="1 1" shape-rendering="crispEdges"/><path d="M2.4 3.6h6.2M2.4 6.2h6.2" stroke="#7a5c10" stroke-width="1.1"/></svg>
<svg class="r" style="left:53.7px;top:329.23px;" width="5" height="7" viewBox="0 0 5 7"><path d="M0.8 0.8L3.8 3.5 0.8 6.2z" fill="none" stroke="#4e4e4e" stroke-width=".8"/></svg>
<span class="t" style="left:74.80px;top:327.04px;font-size:8.3px;line-height:10.38px;color:#e2e2e2;transform:scaleX(0.9498);">SSA01 (Control cabinet automation)</span>
<svg class="r" style="left:62.2px;top:338.563px;" width="11" height="10" viewBox="0 0 11 10"><rect x="0.5" y="0.5" width="10" height="9" fill="#f2c12e"/><rect x="0.5" y="0.5" width="10" height="9" fill="none" stroke="#fafafa" stroke-width="1" stroke-dasharray="1 1" shape-rendering="crispEdges"/><path d="M2.4 3.6h6.2M2.4 6.2h6.2" stroke="#7a5c10" stroke-width="1.1"/></svg>
<svg class="r" style="left:53.7px;top:341.563px;" width="5" height="5" viewBox="0 0 5 5"><path d="M4.4 0.4v4H0.4z" fill="#5c5c5c"/></svg>
<span class="t" style="left:74.80px;top:338.37px;font-size:8.3px;line-height:10.38px;color:#e2e2e2;transform:scaleX(0.9126);">RLT01 (Ventilation system 01)</span>
<svg class="r" style="left:73.2px;top:349.896px;" width="11" height="10" viewBox="0 0 11 10"><path d="M0.7 9.3V1.2h7l2.6 2.6v5.5z" fill="#2b2b2b" stroke="#ececec" stroke-width="1.1"/><rect x="1.6" y="3" width="5.6" height="5" fill="#1b7fd0"/><rect x="3" y="4.6" width="1.6" height="1.6" fill="#c03020"/><path d="M7.6 1.4v2.6h2.4" stroke="#ececec" fill="none" stroke-width=".9"/></svg>
<div class="r" style="left:84px;top:349.296px;width:67.2px;height:11.3px;background:#0f66c4;"></div>
<span class="t" style="left:87.20px;top:349.71px;font-size:8.3px;line-height:10.38px;color:#fff;font-weight:bold;transform:scaleX(0.9291);">1 Ventilation unit</span>
<svg class="r" style="left:73.2px;top:361.229px;" width="11" height="10" viewBox="0 0 11 10"><path d="M0.7 9.3V1.2h7l2.6 2.6v5.5z" fill="#2b2b2b" stroke="#ececec" stroke-width="1.1"/><rect x="1.8" y="2.6" width="6.4" height="5.6" fill="#e8bf28"/><path d="M1.8 4.5h6.4M1.8 6.4h6.4M4 2.6v5.6M6.1 2.6v5.6" stroke="#8a6a10" stroke-width=".6"/><path d="M7.6 1.4v2.6h2.4" stroke="#ececec" fill="none" stroke-width=".9"/></svg>
<span class="t" style="left:85.80px;top:361.04px;font-size:8.3px;line-height:10.38px;color:#e2e2e2;transform:scaleX(0.9143);">2 BACS function list VDI 3814 Part 4.3</span>
<svg class="r" style="left:73.2px;top:372.562px;" width="11" height="10" viewBox="0 0 11 10"><path d="M0.7 9.3V1.2h7l2.6 2.6v5.5z" fill="#2b2b2b" stroke="#ececec" stroke-width="1.1"/><rect x="1.8" y="2.6" width="6.4" height="5.6" fill="#e8bf28"/><path d="M1.8 4.5h6.4M1.8 6.4h6.4M4 2.6v5.6M6.1 2.6v5.6" stroke="#8a6a10" stroke-width=".6"/><path d="M7.6 1.4v2.6h2.4" stroke="#ececec" fill="none" stroke-width=".9"/></svg>
<span class="t" style="left:85.80px;top:372.37px;font-size:8.3px;line-height:10.38px;color:#e2e2e2;transform:scaleX(0.9143);">3 BACS function list VDI 3814 Part 4.3</span>
<svg class="r" style="left:73.2px;top:383.895px;" width="11" height="10" viewBox="0 0 11 10"><path d="M0.7 9.3V1.2h7l2.6 2.6v5.5z" fill="#2b2b2b" stroke="#ececec" stroke-width="1.1"/><rect x="1.8" y="2.6" width="6.4" height="5.6" fill="#e8bf28"/><path d="M1.8 4.5h6.4M1.8 6.4h6.4M4 2.6v5.6M6.1 2.6v5.6" stroke="#8a6a10" stroke-width=".6"/><path d="M7.6 1.4v2.6h2.4" stroke="#ececec" fill="none" stroke-width=".9"/></svg>
<span class="t" style="left:85.80px;top:383.70px;font-size:8.3px;line-height:10.38px;color:#e2e2e2;transform:scaleX(0.9143);">4 BACS function list VDI 3814 Part 4.3</span>
<svg class="r" style="left:73.2px;top:395.228px;" width="11" height="10" viewBox="0 0 11 10"><path d="M0.7 9.3V1.2h7l2.6 2.6v5.5z" fill="#2b2b2b" stroke="#ececec" stroke-width="1.1"/><rect x="1.8" y="2.6" width="6.4" height="5.6" fill="#e8bf28"/><path d="M1.8 4.5h6.4M1.8 6.4h6.4M4 2.6v5.6M6.1 2.6v5.6" stroke="#8a6a10" stroke-width=".6"/><path d="M7.6 1.4v2.6h2.4" stroke="#ececec" fill="none" stroke-width=".9"/></svg>
<span class="t" style="left:85.80px;top:395.04px;font-size:8.3px;line-height:10.38px;color:#e2e2e2;transform:scaleX(0.9143);">5 BACS function list VDI 3814 Part 4.3</span>
<svg class="r" style="left:73.2px;top:406.561px;" width="11" height="10" viewBox="0 0 11 10"><path d="M0.7 9.3V1.2h7l2.6 2.6v5.5z" fill="#2b2b2b" stroke="#ececec" stroke-width="1.1"/><rect x="1.8" y="2.6" width="6.4" height="5.6" fill="#e8bf28"/><path d="M1.8 4.5h6.4M1.8 6.4h6.4M4 2.6v5.6M6.1 2.6v5.6" stroke="#8a6a10" stroke-width=".6"/><path d="M7.6 1.4v2.6h2.4" stroke="#ececec" fill="none" stroke-width=".9"/></svg>
<span class="t" style="left:85.80px;top:406.37px;font-size:8.3px;line-height:10.38px;color:#e2e2e2;transform:scaleX(0.9143);">6 BACS function list VDI 3814 Part 4.3</span>
<svg class="r" style="left:73.2px;top:417.894px;" width="11" height="10" viewBox="0 0 11 10"><path d="M0.7 9.3V1.2h7l2.6 2.6v5.5z" fill="#2b2b2b" stroke="#ececec" stroke-width="1.1"/><rect x="1.8" y="2.6" width="6.4" height="5.6" fill="#e8bf28"/><path d="M1.8 4.5h6.4M1.8 6.4h6.4M4 2.6v5.6M6.1 2.6v5.6" stroke="#8a6a10" stroke-width=".6"/><path d="M7.6 1.4v2.6h2.4" stroke="#ececec" fill="none" stroke-width=".9"/></svg>
<span class="t" style="left:85.80px;top:417.70px;font-size:8.3px;line-height:10.38px;color:#e2e2e2;transform:scaleX(0.9143);">7 BACS function list VDI 3814 Part 4.3</span>
<svg class="r" style="left:73.2px;top:429.227px;" width="11" height="10" viewBox="0 0 11 10"><path d="M0.7 9.3V1.2h7l2.6 2.6v5.5z" fill="#2b2b2b" stroke="#ececec" stroke-width="1.1"/><rect x="1.8" y="2.6" width="6.4" height="5.6" fill="#e8bf28"/><path d="M1.8 4.5h6.4M1.8 6.4h6.4M4 2.6v5.6M6.1 2.6v5.6" stroke="#8a6a10" stroke-width=".6"/><path d="M7.6 1.4v2.6h2.4" stroke="#ececec" fill="none" stroke-width=".9"/></svg>
<span class="t" style="left:85.80px;top:429.04px;font-size:8.3px;line-height:10.38px;color:#e2e2e2;transform:scaleX(0.9143);">8 BACS function list VDI 3814 Part 4.3</span>
<svg class="r" style="left:73.2px;top:440.56px;" width="11" height="10" viewBox="0 0 11 10"><path d="M0.7 9.3V1.2h7l2.6 2.6v5.5z" fill="#2b2b2b" stroke="#ececec" stroke-width="1.1"/><rect x="1.8" y="2.6" width="6.4" height="5.6" fill="#e8bf28"/><path d="M1.8 4.5h6.4M1.8 6.4h6.4M4 2.6v5.6M6.1 2.6v5.6" stroke="#8a6a10" stroke-width=".6"/><path d="M7.6 1.4v2.6h2.4" stroke="#ececec" fill="none" stroke-width=".9"/></svg>
<span class="t" style="left:85.80px;top:440.37px;font-size:8.3px;line-height:10.38px;color:#e2e2e2;transform:scaleX(0.9143);">9 BACS function list VDI 3814 Part 4.3</span>
<svg class="r" style="left:28px;top:451.893px;" width="11" height="10" viewBox="0 0 11 10"><rect x="0.5" y="0.5" width="10" height="9" fill="#ff8a17"/><rect x="0.5" y="0.5" width="10" height="9" fill="none" stroke="#fafafa" stroke-width="1" stroke-dasharray="1 1" shape-rendering="crispEdges"/><text x="5.5" y="7.6" font-size="6.5" font-weight="bold" text-anchor="middle" fill="#5a3008" font-family="Liberation Sans,sans-serif">&amp;</text></svg>
<svg class="r" style="left:19.5px;top:453.893px;" width="5" height="7" viewBox="0 0 5 7"><path d="M0.8 0.8L3.8 3.5 0.8 6.2z" fill="none" stroke="#4e4e4e" stroke-width=".8"/></svg>
<span class="t" style="left:41.00px;top:451.70px;font-size:8.3px;line-height:10.38px;color:#e2e2e2;transform:scaleX(0.9270);">PPF1 (Summarized BACS function list)</span>
<svg class="r" style="left:28px;top:463.226px;" width="11" height="10" viewBox="0 0 11 10"><rect x="0.5" y="0.5" width="10" height="9" fill="#ff8a17"/><rect x="0.5" y="0.5" width="10" height="9" fill="none" stroke="#fafafa" stroke-width="1" stroke-dasharray="1 1" shape-rendering="crispEdges"/><text x="5.5" y="7.6" font-size="6.5" font-weight="bold" text-anchor="middle" fill="#5a3008" font-family="Liberation Sans,sans-serif">&amp;</text></svg>
<svg class="r" style="left:19.5px;top:465.226px;" width="5" height="7" viewBox="0 0 5 7"><path d="M0.8 0.8L3.8 3.5 0.8 6.2z" fill="none" stroke="#4e4e4e" stroke-width=".8"/></svg>
<span class="t" style="left:41.00px;top:463.04px;font-size:8.3px;line-height:10.38px;color:#e2e2e2;transform:scaleX(0.9252);">EFS (Electrical engineering schematic)</span>
<svg class="r" style="left:28px;top:474.559px;" width="11" height="10" viewBox="0 0 11 10"><rect x="0.5" y="0.5" width="10" height="9" fill="#ff8a17"/><rect x="0.5" y="0.5" width="10" height="9" fill="none" stroke="#fafafa" stroke-width="1" stroke-dasharray="1 1" shape-rendering="crispEdges"/><text x="5.5" y="7.6" font-size="6.5" font-weight="bold" text-anchor="middle" fill="#5a3008" font-family="Liberation Sans,sans-serif">&amp;</text></svg>
<svg class="r" style="left:19.5px;top:476.559px;" width="5" height="7" viewBox="0 0 5 7"><path d="M0.8 0.8L3.8 3.5 0.8 6.2z" fill="none" stroke="#4e4e4e" stroke-width=".8"/></svg>
<span class="t" style="left:41.00px;top:474.37px;font-size:8.3px;line-height:10.38px;color:#e2e2e2;transform:scaleX(0.9497);">EMA1 (Terminal-strip overview)</span>
<svg class="r" style="left:28px;top:485.892px;" width="11" height="10" viewBox="0 0 11 10"><rect x="0.5" y="0.5" width="10" height="9" fill="#ff8a17"/><rect x="0.5" y="0.5" width="10" height="9" fill="none" stroke="#fafafa" stroke-width="1" stroke-dasharray="1 1" shape-rendering="crispEdges"/><text x="5.5" y="7.6" font-size="6.5" font-weight="bold" text-anchor="middle" fill="#5a3008" font-family="Liberation Sans,sans-serif">&amp;</text></svg>
<svg class="r" style="left:19.5px;top:487.892px;" width="5" height="7" viewBox="0 0 5 7"><path d="M0.8 0.8L3.8 3.5 0.8 6.2z" fill="none" stroke="#4e4e4e" stroke-width=".8"/></svg>
<span class="t" style="left:41.00px;top:485.70px;font-size:8.3px;line-height:10.38px;color:#e2e2e2;transform:scaleX(0.9459);">EMA2 (Terminal diagram)</span>
<svg class="r" style="left:28px;top:497.225px;" width="11" height="10" viewBox="0 0 11 10"><rect x="0.5" y="0.5" width="10" height="9" fill="#ff8a17"/><rect x="0.5" y="0.5" width="10" height="9" fill="none" stroke="#fafafa" stroke-width="1" stroke-dasharray="1 1" shape-rendering="crispEdges"/><text x="5.5" y="7.6" font-size="6.5" font-weight="bold" text-anchor="middle" fill="#5a3008" font-family="Liberation Sans,sans-serif">&amp;</text></svg>
<svg class="r" style="left:19.5px;top:499.225px;" width="5" height="7" viewBox="0 0 5 7"><path d="M0.8 0.8L3.8 3.5 0.8 6.2z" fill="none" stroke="#4e4e4e" stroke-width=".8"/></svg>
<span class="t" style="left:41.00px;top:497.04px;font-size:8.3px;line-height:10.38px;color:#e2e2e2;transform:scaleX(0.9257);">EMB1 (Cable overview)</span>
<svg class="r" style="left:28px;top:508.558px;" width="11" height="10" viewBox="0 0 11 10"><rect x="0.5" y="0.5" width="10" height="9" fill="#ff8a17"/><rect x="0.5" y="0.5" width="10" height="9" fill="none" stroke="#fafafa" stroke-width="1" stroke-dasharray="1 1" shape-rendering="crispEdges"/><text x="5.5" y="7.6" font-size="6.5" font-weight="bold" text-anchor="middle" fill="#5a3008" font-family="Liberation Sans,sans-serif">&amp;</text></svg>
<svg class="r" style="left:19.5px;top:510.558px;" width="5" height="7" viewBox="0 0 5 7"><path d="M0.8 0.8L3.8 3.5 0.8 6.2z" fill="none" stroke="#4e4e4e" stroke-width=".8"/></svg>
<span class="t" style="left:41.00px;top:508.37px;font-size:8.3px;line-height:10.38px;color:#e2e2e2;transform:scaleX(0.9241);">EMB2 (Cable diagram)</span>
<svg class="r" style="left:28px;top:519.891px;" width="11" height="10" viewBox="0 0 11 10"><rect x="0.5" y="0.5" width="10" height="9" fill="#ff8a17"/><rect x="0.5" y="0.5" width="10" height="9" fill="none" stroke="#fafafa" stroke-width="1" stroke-dasharray="1 1" shape-rendering="crispEdges"/><text x="5.5" y="7.6" font-size="6.5" font-weight="bold" text-anchor="middle" fill="#5a3008" font-family="Liberation Sans,sans-serif">&amp;</text></svg>
<svg class="r" style="left:19.5px;top:521.891px;" width="5" height="7" viewBox="0 0 5 7"><path d="M0.8 0.8L3.8 3.5 0.8 6.2z" fill="none" stroke="#4e4e4e" stroke-width=".8"/></svg>
<span class="t" style="left:41.00px;top:519.70px;font-size:8.3px;line-height:10.38px;color:#e2e2e2;transform:scaleX(0.8756);">EPB (Parts lists)</span>
<svg class="r" style="left:28px;top:531.224px;" width="11" height="10" viewBox="0 0 11 10"><rect x="0.5" y="0.5" width="10" height="9" fill="#ff8a17"/><rect x="0.5" y="0.5" width="10" height="9" fill="none" stroke="#fafafa" stroke-width="1" stroke-dasharray="1 1" shape-rendering="crispEdges"/><text x="5.5" y="7.6" font-size="6.5" font-weight="bold" text-anchor="middle" fill="#5a3008" font-family="Liberation Sans,sans-serif">&amp;</text></svg>
<svg class="r" style="left:19.5px;top:533.224px;" width="5" height="7" viewBox="0 0 5 7"><path d="M0.8 0.8L3.8 3.5 0.8 6.2z" fill="none" stroke="#4e4e4e" stroke-width=".8"/></svg>
<span class="t" style="left:41.00px;top:531.03px;font-size:8.3px;line-height:10.38px;color:#e2e2e2;transform:scaleX(0.9194);">EPC1 (Summarized parts list)</span>
<svg class="r" style="left:28px;top:542.557px;" width="11" height="10" viewBox="0 0 11 10"><rect x="0.5" y="0.5" width="10" height="9" fill="#ff8a17"/><rect x="0.5" y="0.5" width="10" height="9" fill="none" stroke="#fafafa" stroke-width="1" stroke-dasharray="1 1" shape-rendering="crispEdges"/><text x="5.5" y="7.6" font-size="6.5" font-weight="bold" text-anchor="middle" fill="#5a3008" font-family="Liberation Sans,sans-serif">&amp;</text></svg>
<svg class="r" style="left:19.5px;top:544.557px;" width="5" height="7" viewBox="0 0 5 7"><path d="M0.8 0.8L3.8 3.5 0.8 6.2z" fill="none" stroke="#4e4e4e" stroke-width=".8"/></svg>
<span class="t" style="left:41.00px;top:542.37px;font-size:8.3px;line-height:10.38px;color:#e2e2e2;transform:scaleX(0.9070);">ETC1 (Model view)</span>
<div class="r" style="left:0px;top:554.5px;width:258px;height:1px;background:#3a3a3a;"></div>
<div class="r" style="left:0px;top:555.5px;width:22.7px;height:14px;background:#3a3a3a;"></div>
<div class="r" style="left:0px;top:570px;width:261px;height:5px;background:#262626;"></div>
<span class="t" style="left:4.00px;top:557.81px;font-size:8.3px;line-height:10.38px;color:#f0f0f0;transform:scaleX(0.8951);">Tree</span>
<span class="t" style="left:27.00px;top:557.81px;font-size:8.3px;line-height:10.38px;color:#e2e2e2;transform:scaleX(0.9678);">List</span>
<span class="t" style="left:3.00px;top:577.81px;font-size:8.3px;line-height:10.38px;color:#dedede;transform:scaleX(0.9310);">Graphical preview - Eplan_Building_Technology_IEC_mm</span>
<svg class="r" style="left:224.5px;top:581.5px;" width="7" height="4" viewBox="0 0 7 4"><path d="M0.3 0.4h6L3.3 3.6z" fill="#dcdcdc"/></svg><svg class="r" style="left:237.5px;top:579px;" width="6" height="8" viewBox="0 0 6 8"><path d="M1.6 0.6h2.8M1.8 0.6v3.6M4.2 0.6v3.6M0.6 4.2h4.8M3 4.2v3.4" stroke="#dcdcdc" fill="none" stroke-width=".9"/><path d="M3.4 0.8v3.2h.8V0.8z" fill="#dcdcdc"/></svg><svg class="r" style="left:250.3px;top:580.2px;" width="6" height="6" viewBox="0 0 6 6"><path d="M0.7 0.7l4.4 4.4M5.1 0.7L0.7 5.1" stroke="#e4e4e4" stroke-width="1.1"/></svg>
<div class="r" style="left:2px;top:592.5px;width:256px;height:128px;background:#fff;"></div>
<!-- preview -->
<svg class="r" style="left:2px;top:592px" width="256" height="128" viewBox="2 592 256 128" fill="none">
<rect x="2.00" y="592.00" width="256.00" height="128.00" fill="#fff" />
<path d="M2.00 592.30L258.00 592.30" stroke="#9a9a9a" stroke-width="0.8" />
<rect x="43.32" y="594.19" width="181.52" height="130.00" fill="none" stroke="#555" stroke-width="0.9" />
<rect x="48.68" y="595.84" width="173.27" height="119.02" fill="none" stroke="#333" stroke-width="0.9" />
<path d="M50.12 595.84L50.12 713.83" stroke="#555" stroke-width="0.8" />
<path d="M66.01 594.19L66.01 595.84" stroke="#555" stroke-width="0.6" />
<path d="M83.33 594.19L83.33 595.84" stroke="#555" stroke-width="0.6" />
<path d="M100.66 594.19L100.66 595.84" stroke="#555" stroke-width="0.6" />
<path d="M117.99 594.19L117.99 595.84" stroke="#555" stroke-width="0.6" />
<path d="M135.31 594.19L135.31 595.84" stroke="#555" stroke-width="0.6" />
<path d="M152.64 594.19L152.64 595.84" stroke="#555" stroke-width="0.6" />
<path d="M169.97 594.19L169.97 595.84" stroke="#555" stroke-width="0.6" />
<path d="M187.29 594.19L187.29 595.84" stroke="#555" stroke-width="0.6" />
<path d="M204.62 594.19L204.62 595.84" stroke="#555" stroke-width="0.6" />
<path d="M50.12 609.25L221.95 609.25" stroke="#444" stroke-width="0.8" />
<path d="M50.12 662.26L221.95 662.26" stroke="#666" stroke-width="0.6" />
<path d="M54.04 598.73V607.18H66.42" stroke="#222" stroke-width=".7"/><path d="M55.69 605.53L61.26 601.61H64.77" stroke="#333" stroke-width=".6"/>
<path d="M105.20 598.73V607.18H117.57" stroke="#222" stroke-width=".7"/><path d="M106.85 605.53L112.42 601.61H115.92" stroke="#333" stroke-width=".6"/>
<path d="M123.76 598.73V607.18H136.14" stroke="#222" stroke-width=".7"/><path d="M125.41 605.53L130.98 601.61H134.49" stroke="#333" stroke-width=".6"/>
<path d="M139.23 598.73V607.18H151.61" stroke="#222" stroke-width=".7"/><path d="M139.85 600.79H142.33L149.55 606.56" stroke="#333" stroke-width=".6"/>
<path d="M158.42 598.73V607.18H170.79" stroke="#222" stroke-width=".7"/><path d="M159.03 600.79H161.51L168.73 606.56" stroke="#333" stroke-width=".6"/>
<path d="M186.26 598.73V607.18H198.64" stroke="#222" stroke-width=".7"/><path d="M186.88 600.79H189.36L196.58 606.56" stroke="#333" stroke-width=".6"/>
<path d="M207.30 598.73V607.18H219.68" stroke="#222" stroke-width=".7"/><path d="M208.33 606.56C211.43 605.53 211.43 600.79 217.62 600.38" stroke="#333" stroke-width=".6"/>
<path d="M79.41 598.73V607.18H90.76" stroke="#222" stroke-width=".7"/>
<path d="M80.45 599.96L83.54 606.56" stroke="#f02020" stroke-width=".8"/>
<path d="M79.62 599.96H82.51L84.98 606.56L87.46 599.96" stroke="#222" stroke-width=".6"/>
<path d="M86.63 606.56L89.93 599.96" stroke="#2030f0" stroke-width=".8"/>
<path d="M51.57 617.50H75.29V625.54H77.76" stroke="#b85050" stroke-width="0.9"/>
<path d="M85.60 629.25V617.50H208.33" stroke="#ffc030" stroke-width="1"/>
<path d="M51.57 640.19H84.57" stroke="#20b020" stroke-width="1"/>
<path d="M75.91 632.35V640.19" stroke="#20b020" stroke-width="0.9"/>
<path d="M84.98 630.29V640.19H208.33" stroke="#20c8ff" stroke-width="1"/>
<path d="M132.22 641.22V662.26" stroke="#20c8ff" stroke-width="1"/>
<path d="M100.66 643.69V662.26" stroke="#f02020" stroke-width="0.9"/>
<path d="M104.17 643.69V662.26" stroke="#2a2aff" stroke-width="0.8"/>
<path d="M136.14 643.69V662.26" stroke="#555" stroke-width="0.7"/>
<path d="M208.75 613.78V650.91" stroke="#777" stroke-width="1.2"/>
<path d="M208.75 613.78H220.71" stroke="#333" stroke-width="0.8"/>
<path d="M59.41 628.22V637.50" stroke="#111" stroke-width="1.6"/>
<rect x="77.76" y="624.72" width="5.36" height="6.19" fill="#fff" stroke="#2a2aff" stroke-width="0.8" />
<rect x="79.21" y="626.37" width="2.48" height="2.89" fill="none" stroke="#2a2aff" stroke-width="0.7" />
<rect x="100.25" y="635.44" width="4.13" height="8.66" fill="#fff" stroke="#2a2aff" stroke-width="0.8" />
<rect x="132.01" y="635.44" width="4.33" height="8.66" fill="#fff" stroke="#2a2aff" stroke-width="0.8" />
<rect x="73.84" y="632.97" width="4.95" height="2.06" fill="#2a2aff" />
<rect x="103.75" y="619.56" width="5.36" height="4.13" rx="1" fill="#fff" stroke="#111" stroke-width=".9"/>
<rect x="103.75" y="625.95" width="5.36" height="4.13" rx="1" fill="#fff" stroke="#111" stroke-width=".9"/>
<rect x="116.13" y="619.56" width="4.54" height="3.71" rx="1" fill="#222"/>
<rect x="116.13" y="625.95" width="4.54" height="3.71" rx="1" fill="#222"/>
<circle cx="142.95" cy="616.88" r="3" fill="#fff" stroke="#222" stroke-width=".9"/>
<path d="M140.95 615.88l4 -2.2M140.95 617.88l4 2.2" stroke="#222" stroke-width=".6"/>
<circle cx="158.83" cy="639.16" r="3" fill="#fff" stroke="#222" stroke-width=".9"/>
<path d="M156.83 638.16l4 -2.2M156.83 640.16l4 2.2" stroke="#222" stroke-width=".6"/>
<circle cx="69.51" cy="614.82" r="2.2" fill="#fff" stroke="#2a2aff" stroke-width="1"/>
<path d="M67.41 614.82L71.61 614.82" stroke="#2a2aff" stroke-width="0.6" />
<circle cx="148.93" cy="612.75" r="2.2" fill="#fff" stroke="#2a2aff" stroke-width="1"/>
<path d="M146.83 612.75L151.03 612.75" stroke="#2a2aff" stroke-width="0.6" />
<circle cx="154.70" cy="614.82" r="2.2" fill="#fff" stroke="#2a2aff" stroke-width="1"/>
<path d="M152.60 614.82L156.80 614.82" stroke="#2a2aff" stroke-width="0.6" />
<circle cx="168.73" cy="613.78" r="2.2" fill="#fff" stroke="#2a2aff" stroke-width="1"/>
<path d="M166.63 613.78L170.83 613.78" stroke="#2a2aff" stroke-width="0.6" />
<circle cx="168.73" cy="617.29" r="2.2" fill="#fff" stroke="#2a2aff" stroke-width="1"/>
<path d="M166.63 617.29L170.83 617.29" stroke="#2a2aff" stroke-width="0.6" />
<circle cx="188.12" cy="614.82" r="2.2" fill="#fff" stroke="#2a2aff" stroke-width="1"/>
<path d="M186.02 614.82L190.22 614.82" stroke="#2a2aff" stroke-width="0.6" />
<circle cx="195.96" cy="614.82" r="2.2" fill="#fff" stroke="#2a2aff" stroke-width="1"/>
<path d="M193.86 614.82L198.06 614.82" stroke="#2a2aff" stroke-width="0.6" />
<circle cx="203.59" cy="612.75" r="2.2" fill="#fff" stroke="#2a2aff" stroke-width="1"/>
<path d="M201.49 612.75L205.69 612.75" stroke="#2a2aff" stroke-width="0.6" />
<circle cx="203.59" cy="617.29" r="2.2" fill="#fff" stroke="#2a2aff" stroke-width="1"/>
<path d="M201.49 617.29L205.69 617.29" stroke="#2a2aff" stroke-width="0.6" />
<circle cx="61.26" cy="616.88" r="2.2" fill="#fff" stroke="#2a2aff" stroke-width="1"/>
<path d="M59.16 616.88L63.36 616.88" stroke="#2a2aff" stroke-width="0.6" />
<circle cx="57.76" cy="619.97" r="2.2" fill="#fff" stroke="#2a2aff" stroke-width="1"/>
<path d="M55.66 619.97L59.86 619.97" stroke="#2a2aff" stroke-width="0.6" />
<circle cx="111.39" cy="621.62" r="2.2" fill="#fff" stroke="#2a2aff" stroke-width="1"/>
<path d="M109.29 621.62L113.49 621.62" stroke="#2a2aff" stroke-width="0.6" />
<circle cx="123.76" cy="621.62" r="2.2" fill="#fff" stroke="#2a2aff" stroke-width="1"/>
<path d="M121.66 621.62L125.86 621.62" stroke="#2a2aff" stroke-width="0.6" />
<circle cx="111.39" cy="627.81" r="2.2" fill="#fff" stroke="#2a2aff" stroke-width="1"/>
<path d="M109.29 627.81L113.49 627.81" stroke="#2a2aff" stroke-width="0.6" />
<circle cx="123.76" cy="627.81" r="2.2" fill="#fff" stroke="#2a2aff" stroke-width="1"/>
<path d="M121.66 627.81L125.86 627.81" stroke="#2a2aff" stroke-width="0.6" />
<circle cx="146.86" cy="622.03" r="2.2" fill="#fff" stroke="#2a2aff" stroke-width="1"/>
<path d="M144.76 622.03L148.96 622.03" stroke="#2a2aff" stroke-width="0.6" />
<circle cx="146.86" cy="626.16" r="2.2" fill="#fff" stroke="#2a2aff" stroke-width="1"/>
<path d="M144.76 626.16L148.96 626.16" stroke="#2a2aff" stroke-width="0.6" />
<circle cx="53.22" cy="630.70" r="2.2" fill="#fff" stroke="#2a2aff" stroke-width="1"/>
<path d="M51.12 630.70L55.32 630.70" stroke="#2a2aff" stroke-width="0.6" />
<circle cx="212.87" cy="625.54" r="2.2" fill="#fff" stroke="#2a2aff" stroke-width="1"/>
<path d="M210.77 625.54L214.97 625.54" stroke="#2a2aff" stroke-width="0.6" />
<circle cx="215.55" cy="638.12" r="2.2" fill="#fff" stroke="#2a2aff" stroke-width="1"/>
<path d="M213.45 638.12L217.65 638.12" stroke="#2a2aff" stroke-width="0.6" />
<circle cx="69.10" cy="637.09" r="2.2" fill="#fff" stroke="#2a2aff" stroke-width="1"/>
<path d="M67.00 637.09L71.20 637.09" stroke="#2a2aff" stroke-width="0.6" />
<circle cx="88.28" cy="637.09" r="2.2" fill="#fff" stroke="#2a2aff" stroke-width="1"/>
<path d="M86.18 637.09L90.38 637.09" stroke="#2a2aff" stroke-width="0.6" />
<circle cx="115.10" cy="637.09" r="2.2" fill="#fff" stroke="#2a2aff" stroke-width="1"/>
<path d="M113.00 637.09L117.20 637.09" stroke="#2a2aff" stroke-width="0.6" />
<circle cx="121.70" cy="637.09" r="2.2" fill="#fff" stroke="#2a2aff" stroke-width="1"/>
<path d="M119.60 637.09L123.80 637.09" stroke="#2a2aff" stroke-width="0.6" />
<circle cx="145.42" cy="637.09" r="2.2" fill="#fff" stroke="#2a2aff" stroke-width="1"/>
<path d="M143.32 637.09L147.52 637.09" stroke="#2a2aff" stroke-width="0.6" />
<circle cx="164.60" cy="634.41" r="2.2" fill="#fff" stroke="#2a2aff" stroke-width="1"/>
<path d="M162.50 634.41L166.70 634.41" stroke="#2a2aff" stroke-width="0.6" />
<circle cx="170.17" cy="637.09" r="2.2" fill="#fff" stroke="#2a2aff" stroke-width="1"/>
<path d="M168.07 637.09L172.27 637.09" stroke="#2a2aff" stroke-width="0.6" />
<circle cx="178.42" cy="637.09" r="2.2" fill="#fff" stroke="#2a2aff" stroke-width="1"/>
<path d="M176.32 637.09L180.52 637.09" stroke="#2a2aff" stroke-width="0.6" />
<circle cx="186.26" cy="637.09" r="2.2" fill="#fff" stroke="#2a2aff" stroke-width="1"/>
<path d="M184.16 637.09L188.36 637.09" stroke="#2a2aff" stroke-width="0.6" />
<circle cx="194.51" cy="637.09" r="2.2" fill="#fff" stroke="#2a2aff" stroke-width="1"/>
<path d="M192.41 637.09L196.61 637.09" stroke="#2a2aff" stroke-width="0.6" />
<circle cx="203.59" cy="635.44" r="2.2" fill="#fff" stroke="#2a2aff" stroke-width="1"/>
<path d="M201.49 635.44L205.69 635.44" stroke="#2a2aff" stroke-width="0.6" />
<circle cx="203.59" cy="639.57" r="2.2" fill="#fff" stroke="#2a2aff" stroke-width="1"/>
<path d="M201.49 639.57L205.69 639.57" stroke="#2a2aff" stroke-width="0.6" />
<circle cx="57.34" cy="642.66" r="2.2" fill="#fff" stroke="#2a2aff" stroke-width="1"/>
<path d="M55.24 642.66L59.44 642.66" stroke="#2a2aff" stroke-width="0.6" />
<circle cx="60.85" cy="640.60" r="2.2" fill="#fff" stroke="#2a2aff" stroke-width="1"/>
<path d="M58.75 640.60L62.95 640.60" stroke="#2a2aff" stroke-width="0.6" />
<circle cx="77.35" cy="642.66" r="2.2" fill="#fff" stroke="#2a2aff" stroke-width="1"/>
<path d="M75.25 642.66L79.45 642.66" stroke="#2a2aff" stroke-width="0.6" />
<circle cx="81.06" cy="639.57" r="2.2" fill="#fff" stroke="#2a2aff" stroke-width="1"/>
<path d="M78.96 639.57L83.16 639.57" stroke="#2a2aff" stroke-width="0.6" />
<circle cx="96.95" cy="643.07" r="2.2" fill="#fff" stroke="#2a2aff" stroke-width="1"/>
<path d="M94.85 643.07L99.05 643.07" stroke="#2a2aff" stroke-width="0.6" />
<circle cx="107.26" cy="643.07" r="2.2" fill="#fff" stroke="#2a2aff" stroke-width="1"/>
<path d="M105.16 643.07L109.36 643.07" stroke="#2a2aff" stroke-width="0.6" />
<circle cx="129.33" cy="643.07" r="2.2" fill="#fff" stroke="#2a2aff" stroke-width="1"/>
<path d="M127.23 643.07L131.43 643.07" stroke="#2a2aff" stroke-width="0.6" />
<circle cx="139.23" cy="643.07" r="2.2" fill="#fff" stroke="#2a2aff" stroke-width="1"/>
<path d="M137.13 643.07L141.33 643.07" stroke="#2a2aff" stroke-width="0.6" />
<circle cx="162.95" cy="644.72" r="2.2" fill="#fff" stroke="#2a2aff" stroke-width="1"/>
<path d="M160.85 644.72L165.05 644.72" stroke="#2a2aff" stroke-width="0.6" />
<circle cx="162.95" cy="648.85" r="2.2" fill="#fff" stroke="#2a2aff" stroke-width="1"/>
<path d="M160.85 648.85L165.05 648.85" stroke="#2a2aff" stroke-width="0.6" />
<circle cx="138.61" cy="651.53" r="2.2" fill="#fff" stroke="#2a2aff" stroke-width="1"/>
<path d="M136.51 651.53L140.71 651.53" stroke="#2a2aff" stroke-width="0.6" />
<circle cx="100.45" cy="651.94" r="2.2" fill="#fff" stroke="#2a2aff" stroke-width="1"/>
<path d="M98.35 651.94L102.55 651.94" stroke="#2a2aff" stroke-width="0.6" />
<circle cx="107.26" cy="654.42" r="2.2" fill="#fff" stroke="#2a2aff" stroke-width="1"/>
<path d="M105.16 654.42L109.36 654.42" stroke="#2a2aff" stroke-width="0.6" />
<circle cx="97.36" cy="657.72" r="2.2" fill="#fff" stroke="#2a2aff" stroke-width="1"/>
<path d="M95.26 657.72L99.46 657.72" stroke="#2a2aff" stroke-width="0.6" />
<circle cx="180.90" cy="654.42" r="2.2" fill="#fff" stroke="#2a2aff" stroke-width="1"/>
<path d="M178.80 654.42L183.00 654.42" stroke="#2a2aff" stroke-width="0.6" />
<circle cx="200.50" cy="654.42" r="2.2" fill="#fff" stroke="#2a2aff" stroke-width="1"/>
<path d="M198.40 654.42L202.60 654.42" stroke="#2a2aff" stroke-width="0.6" />
<circle cx="178.42" cy="639.57" r="2.2" fill="#fff" stroke="#2a2aff" stroke-width="1"/>
<path d="M176.32 639.57L180.52 639.57" stroke="#2a2aff" stroke-width="0.6" />
<circle cx="69.10" cy="639.57" r="2.2" fill="#fff" stroke="#2a2aff" stroke-width="1"/>
<path d="M67.00 639.57L71.20 639.57" stroke="#2a2aff" stroke-width="0.6" />
<path d="M50.57 617.50l2.4 -1.6v3.2z" fill="#2a2aff"/>
<path d="M50.57 640.19l2.4 -1.6v3.2z" fill="#2a2aff"/>
<path d="M208.98 617.50l2.4 -1.6v3.2z" fill="#2a2aff"/>
<path d="M208.98 640.19l2.4 -1.6v3.2z" fill="#2a2aff"/>
<circle cx="185.02" cy="654.83" r=".9" fill="#f0b030"/>
<circle cx="204.62" cy="654.83" r=".9" fill="#f0b030"/>
<circle cx="142.95" cy="623.48" r=".9" fill="#f0b030"/>
<circle cx="158.83" cy="645.76" r=".9" fill="#f0b030"/>
<text x="213.49" y="643.60" font-size="2.6" fill="#222" font-weight="bold">RF</text>
<rect x="56.72" y="663.29" width="151.61" height="37.75" fill="#868686" />
<path d="M208.33 677.11L221.95 677.11" stroke="#8a8a8a" stroke-width="0.7" />
<path d="M208.33 678.76L221.95 678.76" stroke="#8a8a8a" stroke-width="0.7" />
<path d="M208.33 680.41L221.95 680.41" stroke="#8a8a8a" stroke-width="0.7" />
<path d="M208.33 682.06L221.95 682.06" stroke="#8a8a8a" stroke-width="0.7" />
<path d="M208.33 683.71L221.95 683.71" stroke="#8a8a8a" stroke-width="0.7" />
<path d="M208.33 685.36L221.95 685.36" stroke="#8a8a8a" stroke-width="0.7" />
<path d="M208.33 687.01L221.95 687.01" stroke="#8a8a8a" stroke-width="0.7" />
<rect x="56.72" y="676.70" width="151.61" height="10.73" fill="#3e3e3e" />
<rect x="56.72" y="681.23" width="151.61" height="2.06" fill="#2a2a2a" />
<rect x="56.72" y="698.35" width="151.61" height="2.68" fill="#6a6a6a" />
<path d="M66.01 663.29L66.01 701.04" stroke="#e6e6e6" stroke-width="0.8" />
<path d="M70.75 663.29L70.75 701.04" stroke="#e6e6e6" stroke-width="0.8" />
<path d="M74.26 663.29L74.26 701.04" stroke="#e6e6e6" stroke-width="0.8" />
<path d="M81.48 663.29L81.48 701.04" stroke="#e6e6e6" stroke-width="0.8" />
<path d="M88.28 663.29L88.28 701.04" stroke="#e6e6e6" stroke-width="0.8" />
<path d="M94.27 663.29L94.27 701.04" stroke="#e6e6e6" stroke-width="0.8" />
<path d="M104.17 663.29L104.17 701.04" stroke="#e6e6e6" stroke-width="0.8" />
<path d="M110.97 663.29L110.97 701.04" stroke="#e6e6e6" stroke-width="0.8" />
<path d="M119.22 663.29L119.22 701.04" stroke="#e6e6e6" stroke-width="0.8" />
<path d="M126.24 663.29L126.24 701.04" stroke="#e6e6e6" stroke-width="0.8" />
<path d="M129.54 663.29L129.54 701.04" stroke="#e6e6e6" stroke-width="0.8" />
<path d="M137.79 663.29L137.79 701.04" stroke="#e6e6e6" stroke-width="0.8" />
<path d="M145.01 663.29L145.01 701.04" stroke="#e6e6e6" stroke-width="0.8" />
<path d="M152.64 663.29L152.64 701.04" stroke="#e6e6e6" stroke-width="0.8" />
<path d="M158.83 663.29L158.83 701.04" stroke="#e6e6e6" stroke-width="0.8" />
<path d="M165.02 663.29L165.02 701.04" stroke="#e6e6e6" stroke-width="0.8" />
<path d="M172.24 663.29L172.24 701.04" stroke="#e6e6e6" stroke-width="0.8" />
<path d="M176.98 663.29L176.98 701.04" stroke="#e6e6e6" stroke-width="0.8" />
<path d="M183.58 663.29L183.58 701.04" stroke="#e6e6e6" stroke-width="0.8" />
<path d="M191.42 663.29L191.42 701.04" stroke="#e6e6e6" stroke-width="0.8" />
<path d="M200.08 663.29L200.08 701.04" stroke="#e6e6e6" stroke-width="0.8" />
<path d="M58.79 663.29L58.79 676.70" stroke="#777" stroke-width="0.35" />
<path d="M58.79 687.42L58.79 698.35" stroke="#777" stroke-width="0.35" />
<path d="M60.64 663.29L60.64 676.70" stroke="#777" stroke-width="0.35" />
<path d="M60.64 687.42L60.64 698.35" stroke="#777" stroke-width="0.35" />
<path d="M62.50 663.29L62.50 676.70" stroke="#777" stroke-width="0.35" />
<path d="M62.50 687.42L62.50 698.35" stroke="#777" stroke-width="0.35" />
<path d="M64.36 663.29L64.36 676.70" stroke="#777" stroke-width="0.35" />
<path d="M64.36 687.42L64.36 698.35" stroke="#777" stroke-width="0.35" />
<path d="M66.21 663.29L66.21 676.70" stroke="#777" stroke-width="0.35" />
<path d="M66.21 687.42L66.21 698.35" stroke="#777" stroke-width="0.35" />
<path d="M68.07 663.29L68.07 676.70" stroke="#777" stroke-width="0.35" />
<path d="M68.07 687.42L68.07 698.35" stroke="#777" stroke-width="0.35" />
<path d="M69.93 663.29L69.93 676.70" stroke="#777" stroke-width="0.35" />
<path d="M69.93 687.42L69.93 698.35" stroke="#777" stroke-width="0.35" />
<path d="M71.78 663.29L71.78 676.70" stroke="#777" stroke-width="0.35" />
<path d="M71.78 687.42L71.78 698.35" stroke="#777" stroke-width="0.35" />
<path d="M73.64 663.29L73.64 676.70" stroke="#777" stroke-width="0.35" />
<path d="M73.64 687.42L73.64 698.35" stroke="#777" stroke-width="0.35" />
<path d="M75.50 663.29L75.50 676.70" stroke="#777" stroke-width="0.35" />
<path d="M75.50 687.42L75.50 698.35" stroke="#777" stroke-width="0.35" />
<path d="M77.35 663.29L77.35 676.70" stroke="#777" stroke-width="0.35" />
<path d="M77.35 687.42L77.35 698.35" stroke="#777" stroke-width="0.35" />
<path d="M79.21 663.29L79.21 676.70" stroke="#777" stroke-width="0.35" />
<path d="M79.21 687.42L79.21 698.35" stroke="#777" stroke-width="0.35" />
<path d="M81.06 663.29L81.06 676.70" stroke="#777" stroke-width="0.35" />
<path d="M81.06 687.42L81.06 698.35" stroke="#777" stroke-width="0.35" />
<path d="M82.92 663.29L82.92 676.70" stroke="#777" stroke-width="0.35" />
<path d="M82.92 687.42L82.92 698.35" stroke="#777" stroke-width="0.35" />
<path d="M84.78 663.29L84.78 676.70" stroke="#777" stroke-width="0.35" />
<path d="M84.78 687.42L84.78 698.35" stroke="#777" stroke-width="0.35" />
<path d="M86.63 663.29L86.63 676.70" stroke="#777" stroke-width="0.35" />
<path d="M86.63 687.42L86.63 698.35" stroke="#777" stroke-width="0.35" />
<path d="M88.49 663.29L88.49 676.70" stroke="#777" stroke-width="0.35" />
<path d="M88.49 687.42L88.49 698.35" stroke="#777" stroke-width="0.35" />
<path d="M90.35 663.29L90.35 676.70" stroke="#777" stroke-width="0.35" />
<path d="M90.35 687.42L90.35 698.35" stroke="#777" stroke-width="0.35" />
<path d="M92.20 663.29L92.20 676.70" stroke="#777" stroke-width="0.35" />
<path d="M92.20 687.42L92.20 698.35" stroke="#777" stroke-width="0.35" />
<path d="M94.06 663.29L94.06 676.70" stroke="#777" stroke-width="0.35" />
<path d="M94.06 687.42L94.06 698.35" stroke="#777" stroke-width="0.35" />
<path d="M95.92 663.29L95.92 676.70" stroke="#777" stroke-width="0.35" />
<path d="M95.92 687.42L95.92 698.35" stroke="#777" stroke-width="0.35" />
<path d="M97.77 663.29L97.77 676.70" stroke="#777" stroke-width="0.35" />
<path d="M97.77 687.42L97.77 698.35" stroke="#777" stroke-width="0.35" />
<path d="M99.63 663.29L99.63 676.70" stroke="#777" stroke-width="0.35" />
<path d="M99.63 687.42L99.63 698.35" stroke="#777" stroke-width="0.35" />
<path d="M101.49 663.29L101.49 676.70" stroke="#777" stroke-width="0.35" />
<path d="M101.49 687.42L101.49 698.35" stroke="#777" stroke-width="0.35" />
<path d="M103.34 663.29L103.34 676.70" stroke="#777" stroke-width="0.35" />
<path d="M103.34 687.42L103.34 698.35" stroke="#777" stroke-width="0.35" />
<path d="M105.20 663.29L105.20 676.70" stroke="#777" stroke-width="0.35" />
<path d="M105.20 687.42L105.20 698.35" stroke="#777" stroke-width="0.35" />
<path d="M107.05 663.29L107.05 676.70" stroke="#777" stroke-width="0.35" />
<path d="M107.05 687.42L107.05 698.35" stroke="#777" stroke-width="0.35" />
<path d="M108.91 663.29L108.91 676.70" stroke="#777" stroke-width="0.35" />
<path d="M108.91 687.42L108.91 698.35" stroke="#777" stroke-width="0.35" />
<path d="M110.77 663.29L110.77 676.70" stroke="#777" stroke-width="0.35" />
<path d="M110.77 687.42L110.77 698.35" stroke="#777" stroke-width="0.35" />
<path d="M112.62 663.29L112.62 676.70" stroke="#777" stroke-width="0.35" />
<path d="M112.62 687.42L112.62 698.35" stroke="#777" stroke-width="0.35" />
<path d="M114.48 663.29L114.48 676.70" stroke="#777" stroke-width="0.35" />
<path d="M114.48 687.42L114.48 698.35" stroke="#777" stroke-width="0.35" />
<path d="M116.34 663.29L116.34 676.70" stroke="#777" stroke-width="0.35" />
<path d="M116.34 687.42L116.34 698.35" stroke="#777" stroke-width="0.35" />
<path d="M118.19 663.29L118.19 676.70" stroke="#777" stroke-width="0.35" />
<path d="M118.19 687.42L118.19 698.35" stroke="#777" stroke-width="0.35" />
<path d="M120.05 663.29L120.05 676.70" stroke="#777" stroke-width="0.35" />
<path d="M120.05 687.42L120.05 698.35" stroke="#777" stroke-width="0.35" />
<path d="M121.91 663.29L121.91 676.70" stroke="#777" stroke-width="0.35" />
<path d="M121.91 687.42L121.91 698.35" stroke="#777" stroke-width="0.35" />
<path d="M123.76 663.29L123.76 676.70" stroke="#777" stroke-width="0.35" />
<path d="M123.76 687.42L123.76 698.35" stroke="#777" stroke-width="0.35" />
<path d="M125.62 663.29L125.62 676.70" stroke="#777" stroke-width="0.35" />
<path d="M125.62 687.42L125.62 698.35" stroke="#777" stroke-width="0.35" />
<path d="M127.48 663.29L127.48 676.70" stroke="#777" stroke-width="0.35" />
<path d="M127.48 687.42L127.48 698.35" stroke="#777" stroke-width="0.35" />
<path d="M129.33 663.29L129.33 676.70" stroke="#777" stroke-width="0.35" />
<path d="M129.33 687.42L129.33 698.35" stroke="#777" stroke-width="0.35" />
<path d="M131.19 663.29L131.19 676.70" stroke="#777" stroke-width="0.35" />
<path d="M131.19 687.42L131.19 698.35" stroke="#777" stroke-width="0.35" />
<path d="M133.04 663.29L133.04 676.70" stroke="#777" stroke-width="0.35" />
<path d="M133.04 687.42L133.04 698.35" stroke="#777" stroke-width="0.35" />
<path d="M134.90 663.29L134.90 676.70" stroke="#777" stroke-width="0.35" />
<path d="M134.90 687.42L134.90 698.35" stroke="#777" stroke-width="0.35" />
<path d="M136.76 663.29L136.76 676.70" stroke="#777" stroke-width="0.35" />
<path d="M136.76 687.42L136.76 698.35" stroke="#777" stroke-width="0.35" />
<path d="M138.61 663.29L138.61 676.70" stroke="#777" stroke-width="0.35" />
<path d="M138.61 687.42L138.61 698.35" stroke="#777" stroke-width="0.35" />
<path d="M140.47 663.29L140.47 676.70" stroke="#777" stroke-width="0.35" />
<path d="M140.47 687.42L140.47 698.35" stroke="#777" stroke-width="0.35" />
<path d="M142.33 663.29L142.33 676.70" stroke="#777" stroke-width="0.35" />
<path d="M142.33 687.42L142.33 698.35" stroke="#777" stroke-width="0.35" />
<path d="M144.18 663.29L144.18 676.70" stroke="#777" stroke-width="0.35" />
<path d="M144.18 687.42L144.18 698.35" stroke="#777" stroke-width="0.35" />
<path d="M146.04 663.29L146.04 676.70" stroke="#777" stroke-width="0.35" />
<path d="M146.04 687.42L146.04 698.35" stroke="#777" stroke-width="0.35" />
<path d="M147.90 663.29L147.90 676.70" stroke="#777" stroke-width="0.35" />
<path d="M147.90 687.42L147.90 698.35" stroke="#777" stroke-width="0.35" />
<path d="M149.75 663.29L149.75 676.70" stroke="#777" stroke-width="0.35" />
<path d="M149.75 687.42L149.75 698.35" stroke="#777" stroke-width="0.35" />
<path d="M151.61 663.29L151.61 676.70" stroke="#777" stroke-width="0.35" />
<path d="M151.61 687.42L151.61 698.35" stroke="#777" stroke-width="0.35" />
<path d="M153.47 663.29L153.47 676.70" stroke="#777" stroke-width="0.35" />
<path d="M153.47 687.42L153.47 698.35" stroke="#777" stroke-width="0.35" />
<path d="M155.32 663.29L155.32 676.70" stroke="#777" stroke-width="0.35" />
<path d="M155.32 687.42L155.32 698.35" stroke="#777" stroke-width="0.35" />
<path d="M157.18 663.29L157.18 676.70" stroke="#777" stroke-width="0.35" />
<path d="M157.18 687.42L157.18 698.35" stroke="#777" stroke-width="0.35" />
<path d="M159.03 663.29L159.03 676.70" stroke="#777" stroke-width="0.35" />
<path d="M159.03 687.42L159.03 698.35" stroke="#777" stroke-width="0.35" />
<path d="M160.89 663.29L160.89 676.70" stroke="#777" stroke-width="0.35" />
<path d="M160.89 687.42L160.89 698.35" stroke="#777" stroke-width="0.35" />
<path d="M162.75 663.29L162.75 676.70" stroke="#777" stroke-width="0.35" />
<path d="M162.75 687.42L162.75 698.35" stroke="#777" stroke-width="0.35" />
<path d="M164.60 663.29L164.60 676.70" stroke="#777" stroke-width="0.35" />
<path d="M164.60 687.42L164.60 698.35" stroke="#777" stroke-width="0.35" />
<path d="M166.46 663.29L166.46 676.70" stroke="#777" stroke-width="0.35" />
<path d="M166.46 687.42L166.46 698.35" stroke="#777" stroke-width="0.35" />
<path d="M168.32 663.29L168.32 676.70" stroke="#777" stroke-width="0.35" />
<path d="M168.32 687.42L168.32 698.35" stroke="#777" stroke-width="0.35" />
<path d="M170.17 663.29L170.17 676.70" stroke="#777" stroke-width="0.35" />
<path d="M170.17 687.42L170.17 698.35" stroke="#777" stroke-width="0.35" />
<path d="M172.03 663.29L172.03 676.70" stroke="#777" stroke-width="0.35" />
<path d="M172.03 687.42L172.03 698.35" stroke="#777" stroke-width="0.35" />
<path d="M173.89 663.29L173.89 676.70" stroke="#777" stroke-width="0.35" />
<path d="M173.89 687.42L173.89 698.35" stroke="#777" stroke-width="0.35" />
<path d="M175.74 663.29L175.74 676.70" stroke="#777" stroke-width="0.35" />
<path d="M175.74 687.42L175.74 698.35" stroke="#777" stroke-width="0.35" />
<path d="M177.60 663.29L177.60 676.70" stroke="#777" stroke-width="0.35" />
<path d="M177.60 687.42L177.60 698.35" stroke="#777" stroke-width="0.35" />
<path d="M179.46 663.29L179.46 676.70" stroke="#777" stroke-width="0.35" />
<path d="M179.46 687.42L179.46 698.35" stroke="#777" stroke-width="0.35" />
<path d="M181.31 663.29L181.31 676.70" stroke="#777" stroke-width="0.35" />
<path d="M181.31 687.42L181.31 698.35" stroke="#777" stroke-width="0.35" />
<path d="M183.17 663.29L183.17 676.70" stroke="#777" stroke-width="0.35" />
<path d="M183.17 687.42L183.17 698.35" stroke="#777" stroke-width="0.35" />
<path d="M185.02 663.29L185.02 676.70" stroke="#777" stroke-width="0.35" />
<path d="M185.02 687.42L185.02 698.35" stroke="#777" stroke-width="0.35" />
<path d="M186.88 663.29L186.88 676.70" stroke="#777" stroke-width="0.35" />
<path d="M186.88 687.42L186.88 698.35" stroke="#777" stroke-width="0.35" />
<path d="M188.74 663.29L188.74 676.70" stroke="#777" stroke-width="0.35" />
<path d="M188.74 687.42L188.74 698.35" stroke="#777" stroke-width="0.35" />
<path d="M190.59 663.29L190.59 676.70" stroke="#777" stroke-width="0.35" />
<path d="M190.59 687.42L190.59 698.35" stroke="#777" stroke-width="0.35" />
<path d="M192.45 663.29L192.45 676.70" stroke="#777" stroke-width="0.35" />
<path d="M192.45 687.42L192.45 698.35" stroke="#777" stroke-width="0.35" />
<path d="M194.31 663.29L194.31 676.70" stroke="#777" stroke-width="0.35" />
<path d="M194.31 687.42L194.31 698.35" stroke="#777" stroke-width="0.35" />
<path d="M196.16 663.29L196.16 676.70" stroke="#777" stroke-width="0.35" />
<path d="M196.16 687.42L196.16 698.35" stroke="#777" stroke-width="0.35" />
<path d="M198.02 663.29L198.02 676.70" stroke="#777" stroke-width="0.35" />
<path d="M198.02 687.42L198.02 698.35" stroke="#777" stroke-width="0.35" />
<path d="M199.88 663.29L199.88 676.70" stroke="#777" stroke-width="0.35" />
<path d="M199.88 687.42L199.88 698.35" stroke="#777" stroke-width="0.35" />
<path d="M201.73 663.29L201.73 676.70" stroke="#777" stroke-width="0.35" />
<path d="M201.73 687.42L201.73 698.35" stroke="#777" stroke-width="0.35" />
<path d="M203.59 663.29L203.59 676.70" stroke="#777" stroke-width="0.35" />
<path d="M203.59 687.42L203.59 698.35" stroke="#777" stroke-width="0.35" />
<path d="M205.45 663.29L205.45 676.70" stroke="#777" stroke-width="0.35" />
<path d="M205.45 687.42L205.45 698.35" stroke="#777" stroke-width="0.35" />
<path d="M107.26 663.29L107.26 701.04" stroke="#222" stroke-width="0.8" />
<path d="M50.12 663.29L221.95 663.29" stroke="#555" stroke-width="0.5" />
<path d="M50.12 676.70L221.95 676.70" stroke="#555" stroke-width="0.5" />
<path d="M50.12 681.23L221.95 681.23" stroke="#555" stroke-width="0.5" />
<path d="M50.12 683.30L221.95 683.30" stroke="#555" stroke-width="0.5" />
<path d="M50.12 687.42L221.95 687.42" stroke="#555" stroke-width="0.5" />
<path d="M50.12 698.35L221.95 698.35" stroke="#555" stroke-width="0.5" />
<path d="M50.12 701.04L221.95 701.04" stroke="#555" stroke-width="0.5" />
<rect x="50.12" y="663.29" width="6.60" height="37.75" fill="none" stroke="#555" stroke-width="0.6" />
<path d="M53.63 663.29L53.63 701.04" stroke="#555" stroke-width="0.5" />
<rect x="54.04" y="681.85" width="2.06" height="4.54" fill="#222" />
<path d="M43.32 714.86L224.83 714.86" stroke="#333" stroke-width="0.9" />
<rect x="43.73" y="715.89" width="7.84" height="8.00" fill="#8a8a8a" />
<rect x="52.81" y="715.89" width="7.43" height="8.00" fill="#8a8a8a" />
<rect x="61.47" y="715.89" width="7.43" height="8.00" fill="#8a8a8a" />
<rect x="178.63" y="715.89" width="14.23" height="8.00" fill="#8a8a8a" />
<rect x="193.89" y="715.89" width="12.38" height="8.00" fill="#8a8a8a" />
<rect x="207.10" y="715.89" width="17.33" height="8.00" fill="#8a8a8a" />
<rect x="104.17" y="717.54" width="20.63" height="1.00" fill="#333" />
<path d="M104.17 715.48L104.17 720.01" stroke="#555" stroke-width="0.7" />
<path d="M125.21 715.48L125.21 720.01" stroke="#555" stroke-width="0.7" />
<path d="M70.13 715.48L70.13 720.01" stroke="#555" stroke-width="0.7" />
<path d="M177.81 715.48L177.81 720.01" stroke="#555" stroke-width="0.7" />
<rect x="145.21" y="715.89" width="3.30" height="6.00" fill="#e8205a" />
</svg>
<!-- chrome -->
<div class="r" style="left:0px;top:0px;width:1280px;height:22px;background:#000;"></div>
<span class="t" style="left:422.00px;top:5.81px;font-size:8.3px;line-height:10.38px;color:#8a8a8a;transform:scaleX(0.9333);filter:blur(1.3px);opacity:.62;">Eplan Electric P8 2024 Beta 7 - PROD-mm - C:\Eplan\Data\2024 Beta\Projects\Ms Users\Stead\M\Eplan_Building_Technology_IEC_mm</span>
<svg class="r" style="left:8px;top:3px;" width="14" height="13" viewBox="0 0 14 13"><path d="M3 11V1.2h5.2L11 4v7z" stroke="#e8e8e8" fill="none" stroke-width="1.3"/><path d="M8 1.2V4h3" stroke="#e8e8e8" fill="none" stroke-width="1.3"/><circle cx="2.2" cy="11" r="1.3" fill="#e8e8e8"/></svg>
<svg class="r" style="left:23px;top:3px;" width="14" height="13" viewBox="0 0 14 13"><path d="M2 11V1.2h5.2L10 4v7z" stroke="#e8e8e8" fill="none" stroke-width="1.3"/><path d="M7 1.2V4h3" stroke="#e8e8e8" fill="none" stroke-width="1.3"/><circle cx="10.8" cy="11" r="1.3" fill="#e8e8e8"/></svg>
<svg class="r" style="left:39px;top:3px;" width="14" height="13" viewBox="0 0 14 13"><path d="M2.2 1.5v4h4" stroke="#e8e8e8" fill="none" stroke-width="1.3"/><path d="M2.5 5.2C4.5 2.6 9 2.4 11.6 6.5" stroke="#e8e8e8" fill="none" stroke-width="1.3" stroke-width="1.6"/><circle cx="4.3" cy="10" r="2.1" fill="#fff"/></svg>
<svg class="r" style="left:55px;top:3px;" width="14" height="13" viewBox="0 0 14 13"><path d="M2.2 1.5v4h4" stroke="#e8e8e8" fill="none" stroke-width="1.3"/><path d="M2.5 5.2C4.5 2.6 9 2.4 11.6 6.8" stroke="#e8e8e8" fill="none" stroke-width="1.3" stroke-width="1.6"/></svg>
<svg class="r" style="left:71px;top:3px;" width="14" height="13" viewBox="0 0 14 13"><path d="M11.8 1.5v4h-4" stroke="#7a7a7a" fill="none" stroke-width="1.3"/><path d="M11.5 5.2C9.5 2.6 5 2.4 2.4 6.8" stroke="#7a7a7a" fill="none" stroke-width="1.3" stroke-width="1.6"/></svg>
<svg class="r" style="left:87px;top:3px;" width="14" height="13" viewBox="0 0 14 13"><path d="M11.8 1.5v4h-4" stroke="#7a7a7a" fill="none" stroke-width="1.3"/><path d="M11.5 5.2C9.5 2.6 5 2.4 2.4 6.8" stroke="#7a7a7a" fill="none" stroke-width="1.3" stroke-width="1.6"/><circle cx="9.7" cy="10" r="2.1" fill="#8a8a8a"/></svg>
<svg class="r" style="left:103px;top:3px;" width="14" height="13" viewBox="0 0 14 13"><path d="M1.5 12V1.5h11V5M1.5 4.5h11M5 4.5V12h-3.5" stroke="#e8e8e8" fill="none" stroke-width="1.3"/><path d="M7.2 7l5 5M12.2 7l-5 5" stroke="#e8e8e8" fill="none" stroke-width="1.3"/></svg>
<svg class="r" style="left:120px;top:6px;" width="6" height="6" viewBox="0 0 6 6"><path d="M0.5 1h4" stroke="#ddd" stroke-width="1"/><path d="M0.3 2.6h4.4L2.5 5z" fill="#ddd"/></svg>
<div class="r" style="left:1199.5px;top:10.2px;width:5.8px;height:1.1px;background:#e8e8e8;"></div>
<svg class="r" style="left:1228.5px;top:6.5px;" width="8" height="8" viewBox="0 0 8 8"><rect x="1" y="2" width="4.8" height="4.8" rx=".9" stroke="#e8e8e8" fill="none" stroke-width="1.1"/><path d="M2.6 2V0.9h4.4v4.4H5.9" stroke="#e8e8e8" fill="none" stroke-width="1"/></svg>
<svg class="r" style="left:1260px;top:6.5px;" width="8" height="8" viewBox="0 0 8 8"><path d="M1 1l6 6M7 1L1 7" stroke="#f0f0f0" stroke-width="1.3"/></svg>
<div class="r" style="left:0px;top:22px;width:1280px;height:83.5px;background:#333333;"></div>
<div class="r" style="left:410px;top:18px;width:495px;height:8px;background:linear-gradient(#000,#333333);filter:blur(1px);"></div>
<div class="r" style="left:410px;top:14px;width:495px;height:5px;background:#000;"></div>
<span class="t" style="left:9.00px;top:27.81px;font-size:8.3px;line-height:10.38px;color:#e4e4e4;transform:scaleX(0.8973);">File</span>
<span class="t" style="left:83.00px;top:27.81px;font-size:8.3px;line-height:10.38px;color:#e4e4e4;transform:scaleX(0.9635);">Insert</span>
<span class="t" style="left:121.00px;top:27.81px;font-size:8.3px;line-height:10.38px;color:#e4e4e4;transform:scaleX(0.9789);">Edit</span>
<span class="t" style="left:153.00px;top:27.81px;font-size:8.3px;line-height:10.38px;color:#e4e4e4;transform:scaleX(0.9530);">View</span>
<span class="t" style="left:189.00px;top:27.81px;font-size:8.3px;line-height:10.38px;color:#e4e4e4;transform:scaleX(0.9147);">Devices</span>
<span class="t" style="left:236.00px;top:27.81px;font-size:8.3px;line-height:10.38px;color:#e4e4e4;transform:scaleX(0.9753);">Connections</span>
<span class="t" style="left:300.00px;top:27.81px;font-size:8.3px;line-height:10.38px;color:#e4e4e4;transform:scaleX(0.9290);">Tools</span>
<span class="t" style="left:337.00px;top:27.81px;font-size:8.3px;line-height:10.38px;color:#e4e4e4;transform:scaleX(0.9987);">Pre-planning</span>
<span class="t" style="left:403.00px;top:27.81px;font-size:8.3px;line-height:10.38px;color:#e4e4e4;transform:scaleX(0.9584);">Master data</span>
<span class="t" style="left:465.00px;top:27.81px;font-size:8.3px;line-height:10.38px;color:#e4e4e4;transform:scaleX(0.9510);">Eplan Cloud</span>
<span class="t" style="left:42.00px;top:27.81px;font-size:8.3px;line-height:10.38px;color:#fff;font-weight:bold;transform:scaleX(1.0408);">Home</span>
<div class="r" style="left:42px;top:40px;width:24px;height:2px;background:#0d9ce3;"></div>
<div class="r" style="left:527px;top:24px;width:133px;height:18px;background:#3a3a3a;border:1px solid #555;box-sizing:border-box;"></div>
<svg class="r" style="left:531px;top:27px;" width="10" height="12" viewBox="0 0 10 12"><path d="M5 1.2a3.2 3.2 0 0 1 1.8 5.8v1.5H3.2V7A3.2 3.2 0 0 1 5 1.2z" stroke="#b5b5b5" fill="none" stroke-width="1"/><path d="M3.6 10.2h2.8" stroke="#b5b5b5" stroke-width="1"/></svg>
<span class="t" style="left:547.50px;top:27.81px;font-size:8.3px;line-height:10.38px;color:#8c8c8c;transform:scaleX(0.9746);">Find command</span>
<span class="t" style="left:1201.00px;top:27.81px;font-size:8.3px;line-height:10.38px;color:#e4e4e4;transform:scaleX(0.9254);">Ms. Engineering</span>
<svg class="r" style="left:1261px;top:27px;" width="13" height="12" viewBox="0 0 13 12"><path d="M1 1h9v9.5H1zM1 3.6h9M4 3.6v7" stroke="#e0e0e0" fill="none" stroke-width="1.2"/><circle cx="7.8" cy="5.8" r="1.6" fill="#fff"/><path d="M5.2 11c0-3 5.2-3 5.2 0z" fill="#fff"/><path d="M11 4.5l1 1 1-1" stroke="#aaa" fill="none" stroke-width=".8"/></svg>
<svg class="r" style="left:1268.3px;top:99.3px;" width="6" height="4" viewBox="0 0 6 4"><path d="M0.7 3.2l2.3-2.3 2.3 2.3" stroke="#bdbdbd" fill="none" stroke-width="1"/></svg>
<div class="r" style="left:34.5px;top:46px;width:1px;height:56px;background:#3a3a3a;"></div>
<div class="r" style="left:153px;top:46px;width:1px;height:56px;background:#3a3a3a;"></div>
<div class="r" style="left:268px;top:46px;width:1px;height:56px;background:#3a3a3a;"></div>
<div class="r" style="left:375px;top:46px;width:1px;height:56px;background:#3a3a3a;"></div>
<div class="r" style="left:445px;top:46px;width:1px;height:56px;background:#3a3a3a;"></div>
<div class="r" style="left:532px;top:46px;width:1px;height:56px;background:#3a3a3a;"></div>
<div class="r" style="left:621px;top:46px;width:1px;height:56px;background:#3a3a3a;"></div>
<div class="r" style="left:727.5px;top:46px;width:1px;height:56px;background:#3a3a3a;"></div>
<div class="r" style="left:158px;top:45px;width:38.5px;height:46.5px;background:#474747;"></div>
<div class="r" style="left:396px;top:45px;width:28px;height:46.5px;background:#474747;"></div>
<span class="t" style="left:53.00px;top:46.81px;font-size:8.3px;line-height:10.38px;color:#e4e4e4;transform:scaleX(1.0065);">Cut</span>
<span class="t" style="left:53.00px;top:61.81px;font-size:8.3px;line-height:10.38px;color:#e4e4e4;transform:scaleX(0.9806);">Copy</span>
<span class="t" style="left:53.00px;top:76.31px;font-size:8.3px;line-height:10.38px;color:#e4e4e4;transform:scaleX(0.9170);">Delete</span>
<span class="t" style="left:99.00px;top:46.81px;font-size:8.3px;line-height:10.38px;color:#e4e4e4;transform:scaleX(0.9734);">Copy format</span>
<span class="t" style="left:99.00px;top:61.81px;font-size:8.3px;line-height:10.38px;color:#e4e4e4;transform:scaleX(0.9657);">Assign format</span>
<span class="t" style="left:216.00px;top:46.81px;font-size:8.3px;line-height:10.38px;color:#e4e4e4;transform:scaleX(0.9637);">New</span>
<span class="t" style="left:216.00px;top:61.81px;font-size:8.3px;line-height:10.38px;color:#e4e4e4;transform:scaleX(0.9824);">Number</span>
<span class="t" style="left:216.00px;top:76.31px;font-size:8.3px;line-height:10.38px;color:#e4e4e4;transform:scaleX(0.9386);">Page macro</span>
<span class="t" style="left:332.00px;top:46.81px;font-size:8.3px;line-height:10.38px;color:#e4e4e4;transform:scaleX(0.9637);">New</span>
<span class="t" style="left:463.50px;top:46.81px;font-size:8.3px;line-height:10.38px;color:#e4e4e4;transform:scaleX(0.9153);">Insert</span>
<span class="t" style="left:463.50px;top:61.81px;font-size:8.3px;line-height:10.38px;color:#e4e4e4;transform:scaleX(0.9823);">Path function text</span>
<span class="t" style="left:463.50px;top:76.31px;font-size:8.3px;line-height:10.38px;color:#e4e4e4;transform:scaleX(0.9608);">Move</span>
<span class="t" style="left:551.50px;top:46.81px;font-size:8.3px;line-height:10.38px;color:#e4e4e4;transform:scaleX(0.9253);">Properties</span>
<span class="t" style="left:551.50px;top:61.81px;font-size:8.3px;line-height:10.38px;color:#e4e4e4;transform:scaleX(0.9485);">Property overview</span>
<span class="t" style="left:551.50px;top:76.31px;font-size:8.3px;line-height:10.38px;color:#e4e4e4;transform:scaleX(0.9366);">In table</span>
<span class="t" style="left:639.50px;top:46.81px;font-size:8.3px;line-height:10.38px;color:#e4e4e4;transform:scaleX(0.8981);">Find</span>
<span class="t" style="left:639.50px;top:61.81px;font-size:8.3px;line-height:10.38px;color:#e4e4e4;transform:scaleX(0.9155);">Show results</span>
<span class="t" style="left:639.50px;top:76.31px;font-size:8.3px;line-height:10.38px;color:#e4e4e4;transform:scaleX(0.9352);">Synchronize selection</span>
<span class="t" style="left:332.00px;top:61.81px;font-size:8.3px;line-height:10.38px;color:#6a6a6a;transform:scaleX(0.9548);">Measuring</span>
<span class="t" style="left:10.00px;top:69.81px;font-size:8.3px;line-height:10.38px;color:#e4e4e4;transform:scaleX(0.8952);">Paste</span>
<span class="t" style="left:160.00px;top:69.81px;font-size:8.3px;line-height:10.38px;color:#e4e4e4;transform:scaleX(0.9572);">Navigator</span>
<span class="t" style="left:275.50px;top:69.81px;font-size:8.3px;line-height:10.38px;color:#e4e4e4;transform:scaleX(0.9713);">Navigator</span>
<span class="t" style="left:400.00px;top:69.81px;font-size:8.3px;line-height:10.38px;color:#e4e4e4;transform:scaleX(0.9604);">Open</span>
<span class="t" style="left:60.00px;top:92.81px;font-size:8.3px;line-height:10.38px;color:#dcdcdc;transform:scaleX(0.9571);">Clipboard</span>
<span class="t" style="left:203.00px;top:92.81px;font-size:8.3px;line-height:10.38px;color:#dcdcdc;transform:scaleX(0.9287);">Page</span>
<span class="t" style="left:294.50px;top:92.81px;font-size:8.3px;line-height:10.38px;color:#dcdcdc;transform:scaleX(0.9409);">3D layout space</span>
<span class="t" style="left:379.00px;top:92.81px;font-size:8.3px;line-height:10.38px;color:#dcdcdc;transform:scaleX(0.9409);">Graphical preview</span>
<span class="t" style="left:482.00px;top:92.81px;font-size:8.3px;line-height:10.38px;color:#dcdcdc;transform:scaleX(0.8540);">Text</span>
<span class="t" style="left:570.00px;top:92.81px;font-size:8.3px;line-height:10.38px;color:#dcdcdc;transform:scaleX(0.9090);">Edit</span>
<span class="t" style="left:666.00px;top:92.81px;font-size:8.3px;line-height:10.38px;color:#dcdcdc;transform:scaleX(0.9291);">Find</span>
<svg class="r" style="left:77.5px;top:80.5px;" width="6" height="4" viewBox="0 0 6 4"><path d="M1 0.8l2 2 2-2" stroke="#707070" fill="none" stroke-width=".9"/></svg>
<svg class="r" style="left:260.5px;top:80.5px;" width="6" height="4" viewBox="0 0 6 4"><path d="M1 0.8l2 2 2-2" stroke="#707070" fill="none" stroke-width=".9"/></svg>
<svg class="r" style="left:485.5px;top:51px;" width="6" height="4" viewBox="0 0 6 4"><path d="M1 0.8l2 2 2-2" stroke="#707070" fill="none" stroke-width=".9"/></svg>
<svg class="r" style="left:486px;top:80.5px;" width="6" height="4" viewBox="0 0 6 4"><path d="M1 0.8l2 2 2-2" stroke="#707070" fill="none" stroke-width=".9"/></svg>
<svg class="r" style="left:657px;top:51px;" width="6" height="4" viewBox="0 0 6 4"><path d="M1 0.8l2 2 2-2" stroke="#707070" fill="none" stroke-width=".9"/></svg>
<svg class="r" style="left:718.5px;top:80.5px;" width="6" height="4" viewBox="0 0 6 4"><path d="M1 0.8l2 2 2-2" stroke="#707070" fill="none" stroke-width=".9"/></svg>
<!-- icons -->
<svg class="r" style="left:7px;top:46px;" width="25" height="24" viewBox="0 0 25 24"><path d="M6 3H2.3v15.5h9.5" stroke="#ececec" fill="none" stroke-width="1.5"/><path d="M13.5 3h3.6v4.5" stroke="#ececec" fill="none" stroke-width="1.5"/><path d="M6 4.6V3l1.4-1.7h4.6L13.5 3v1.6z" fill="#ececec"/><rect x="12.8" y="9.2" width="9.6" height="12.3" fill="none" stroke="#1b9fe3" stroke-width="1.5"/></svg>
<svg class="r" style="left:40px;top:46px;" width="12" height="13" viewBox="0 0 12 13"><path d="M2.5 1l5.6 8M9.5 1L3.9 9" stroke="#ececec" fill="none" stroke-width="1.3"/><circle cx="2.9" cy="10.2" r="1.7" stroke="#1b9fe3" fill="none" stroke-width="1.1"/><circle cx="9.1" cy="10.2" r="1.7" stroke="#1b9fe3" fill="none" stroke-width="1.1"/></svg>
<svg class="r" style="left:39.5px;top:60px;" width="13" height="13" viewBox="0 0 13 13"><path d="M1.2 9V1.3h3.8L7 3.3V5" stroke="#bdbdbd" fill="#8a8a8a" stroke-width="1"/><path d="M4.6 12.3V4.6h4.2l2.5 2.5v5.2z" fill="#1b9fe3" stroke="#1b9fe3" stroke-width="1"/><path d="M8.6 4.8v2.6h2.6" stroke="#2d2d2d" fill="none" stroke-width=".8"/></svg>
<svg class="r" style="left:41px;top:75.5px;" width="10" height="12" viewBox="0 0 10 12"><path d="M1.8 3.2h6.6v7.6H1.8z" stroke="#ececec" fill="none" stroke-width="1.1"/><path d="M0.8 2.6h8.4M3.5 2.4V1.2h3v1.2" stroke="#ececec" fill="none" stroke-width="1.1"/><path d="M3.7 4.6v4.8M5.1 4.6v4.8M6.5 4.6v4.8" stroke="#cfcfcf" stroke-width=".8"/></svg>
<svg class="r" style="left:86.5px;top:46.5px;" width="11" height="11" viewBox="0 0 11 11"><path d="M8.6 0.8L5 4.6l1.6 1.6L9.6 2.4z" fill="#ececec"/><path d="M4.6 4.4L1.2 7.6l2.6 2.6L7 6.8z" fill="#1b9fe3"/><path d="M3.6 1.4l1.4 1.2M6 0.6l.6 1.4" stroke="#ececec" stroke-width="1"/></svg>
<svg class="r" style="left:86.5px;top:61.5px;" width="11" height="11" viewBox="0 0 11 11"><path d="M8.6 0.8L5 4.6l1.6 1.6L9.6 2.4z" fill="#ececec"/><path d="M4.6 4.4L1.2 7.6l2.6 2.6L7 6.8z" fill="#1b9fe3"/></svg>
<svg class="r" style="left:165px;top:46px;" width="24" height="22" viewBox="0 0 24 22"><path d="M1.8 1.2h6.4l4 4v11H1.8z" stroke="#ececec" fill="none" stroke-width="1.5"/><path d="M8 1.4v4.2h4" stroke="#ececec" fill="none" stroke-width="1.3"/><path d="M12.4 14.6h6.2M6 19.6h12.6" stroke="#ececec" fill="none" stroke-width="1.4"/><rect x="18.4" y="12.9" width="3.6" height="3.4" fill="#ececec"/><rect x="18.4" y="17.9" width="3.6" height="3.4" fill="#ececec"/></svg>
<svg class="r" style="left:202px;top:46px;" width="13" height="12" viewBox="0 0 13 12"><path d="M1.4 8.6V1h3.4l2 2v5.6z" stroke="#ececec" fill="none" stroke-width="1.1"/><path d="M4.6 1.2v2h2" stroke="#ececec" fill="none" stroke-width=".9"/><path d="M8.8 5v6M5.8 8h6" stroke="#1b9fe3" stroke-width="1.2"/></svg>
<svg class="r" style="left:202px;top:60px;" width="13" height="12" viewBox="0 0 13 12"><path d="M1.8 5.5V1h5.6l3 3v2" stroke="#ececec" fill="none" stroke-width="1.1"/><path d="M7.2 1.2v3h3" stroke="#ececec" fill="none" stroke-width=".9"/><text x="0.6" y="11.6" font-size="5.6" font-weight="bold" fill="#ececec" font-family="Liberation Sans,sans-serif" textLength="11.5" lengthAdjust="spacingAndGlyphs">1 2 3</text></svg>
<svg class="r" style="left:202px;top:75px;" width="13" height="13" viewBox="0 0 13 13"><rect x="0.4" y="0.6" width="2" height="2" fill="#1b9fe3"/><rect x="6.2" y="0.6" width="2" height="2" fill="#1b9fe3"/><rect x="0.4" y="6.4" width="2" height="2" fill="#1b9fe3"/><path d="M3.3 1.6h2.2" stroke="#e02020" stroke-width="1.4"/><path d="M1.4 3.4v2.2" stroke="#1b9fe3" stroke-width="1"/><path d="M3.6 8.6V3.8h3.2" stroke="#ececec" fill="none" stroke-width="1.1"/><path d="M5.6 12.2V6h3.6l2.4 2.4v3.8z" fill="#2d2d2d" stroke="#ececec" stroke-width="1.1"/></svg>
<svg class="r" style="left:282px;top:46px;" width="23" height="23" viewBox="0 0 23 23"><path d="M8 1l6.2 2.6v7L8 13.4 1.8 10.6v-7z" stroke="#ececec" fill="none" stroke-width="1.5"/><path d="M1.8 3.6L8 6.4l6.2-2.8M8 6.4v7" stroke="#ececec" fill="none" stroke-width="1.3"/><rect x="8.6" y="14.2" width="8.4" height="5.4" stroke="#ececec" fill="none" stroke-width="1.4"/><path d="M12 14v-1M17 15.2h2M17 19.4h2" stroke="#ececec" fill="none" stroke-width="1.3"/><rect x="18.6" y="13.6" width="3.4" height="3.2" fill="#ececec"/><rect x="18.6" y="17.9" width="3.4" height="3.2" fill="#ececec"/></svg>
<svg class="r" style="left:318px;top:46px;" width="13" height="12" viewBox="0 0 13 12"><path d="M4.2 0.8l3.2 1.2v3.2L4.2 6.6 1 5.2V2z" stroke="#ececec" fill="none" stroke-width="1"/><path d="M1 2l3.2 1.3L7.4 2M4.2 3.3v3.3" stroke="#ececec" fill="none" stroke-width=".8"/><path d="M9.2 5v6M6.2 8h6" stroke="#1b9fe3" stroke-width="1.2"/></svg>
<svg class="r" style="left:321.5px;top:61.5px;" width="6" height="11" viewBox="0 0 6 11"><rect x="0.7" y="0.7" width="4.4" height="9.6" stroke="#6e6e6e" fill="none" stroke-width="1"/></svg>
<svg class="r" style="left:398px;top:49.5px;" width="24" height="16" viewBox="0 0 24 16"><path d="M1.6 8C5 3 9 1.6 12 1.6S19 3 22.4 8C19 13 15 14.4 12 14.4S5 13 1.6 8z" stroke="#ececec" fill="none" stroke-width="1.5"/><circle cx="12" cy="8" r="3.6" stroke="#ececec" fill="none" stroke-width="1.4"/><circle cx="12" cy="8" r="1.2" fill="#ececec"/></svg>
<svg class="r" style="left:449px;top:45.5px;" width="13" height="13" viewBox="0 0 13 13"><path d="M1.2 3V1.2h10.4V3M6.4 1.2v10.6M4.4 11.8h4" stroke="#ececec" fill="none" stroke-width="1.2"/></svg>
<svg class="r" style="left:449.5px;top:60.5px;" width="13" height="12" viewBox="0 0 13 12"><path d="M1.2 0.6v11M11.2 0.6v11" stroke="#1b9fe3" stroke-width="1.3"/><path d="M3.6 3.6V2.6h5.2v1M6.2 2.6v7M5 9.6h2.4" stroke="#ececec" fill="none" stroke-width="1"/></svg>
<svg class="r" style="left:450px;top:75px;" width="12" height="12" viewBox="0 0 12 12"><path d="M6 1.2v9.6M1.2 6h9.6" stroke="#ececec" fill="none" stroke-width="1.1"/><path d="M4.4 2.8L6 1.2l1.6 1.6M4.4 9.2L6 10.8l1.6-1.6M2.8 4.4L1.2 6l1.6 1.6M9.2 4.4L10.8 6 9.2 7.6" stroke="#ececec" fill="none" stroke-width="1.1"/></svg>
<svg class="r" style="left:539px;top:45.5px;" width="10" height="13" viewBox="0 0 10 13"><path d="M1.2 11.8V1h4.6l2.6 2.6v8.2z" stroke="#ececec" fill="none" stroke-width="1.1"/><path d="M5.6 1.2v2.6h2.6" stroke="#ececec" fill="none" stroke-width=".9"/><path d="M2.6 8.2l1.6 1.6 2.8-3.4" stroke="#39b54a" fill="none" stroke-width="1.4"/></svg>
<svg class="r" style="left:538.5px;top:60.5px;" width="11" height="13" viewBox="0 0 11 13"><path d="M1 8.6V1h3.6l2 2" stroke="#bdbdbd" fill="#8a8a8a" stroke-width="1"/><path d="M3.6 11.8V3.6h3.6l2.4 2.4v5.8z" fill="#2d2d2d" stroke="#ececec" stroke-width="1.1"/><path d="M4.8 8.8l1.3 1.3 2.2-2.7" stroke="#39b54a" fill="none" stroke-width="1.3"/></svg>
<svg class="r" style="left:538.5px;top:75.5px;" width="11" height="12" viewBox="0 0 11 12"><path d="M1 1h8.6v9.6H1zM1 4.2h8.6M1 7.4h8.6M3.9 1v9.6M6.8 1v9.6" stroke="#ececec" fill="none" stroke-width="1.1"/></svg>
<svg class="r" style="left:625px;top:46px;" width="14" height="13" viewBox="0 0 14 13"><circle cx="5" cy="5" r="3.5" stroke="#1b9fe3" fill="none" stroke-width="1.3"/><path d="M7.6 7.6l4.6 4.4" stroke="#ececec" fill="none" stroke-width="1.4"/></svg>
<svg class="r" style="left:625px;top:60.5px;" width="13" height="13" viewBox="0 0 13 13"><path d="M1 1h9.4v9.4H1zM1 3.2h9.4M4 3.2v7.2M6.6 3.2v7.2" stroke="#bdbdbd" fill="none" stroke-width="1"/><circle cx="8.2" cy="8" r="2" stroke="#1b9fe3" fill="#2d2d2d" stroke-width="1.1"/><path d="M9.8 9.6l2 2" stroke="#1b9fe3" stroke-width="1.3"/></svg>
<svg class="r" style="left:626px;top:75.5px;" width="13" height="13" viewBox="0 0 13 13"><path d="M1.6 5.6A4.6 4.6 0 0 1 10 3.4M10.6 7.4A4.6 4.6 0 0 1 2.2 9.6" stroke="#ececec" fill="none" stroke-width="1.2"/><path d="M10.4 0.8v3h-3M1.8 12.2v-3h3" stroke="#ececec" fill="none" stroke-width="1.2"/></svg>
</div></body></html>
